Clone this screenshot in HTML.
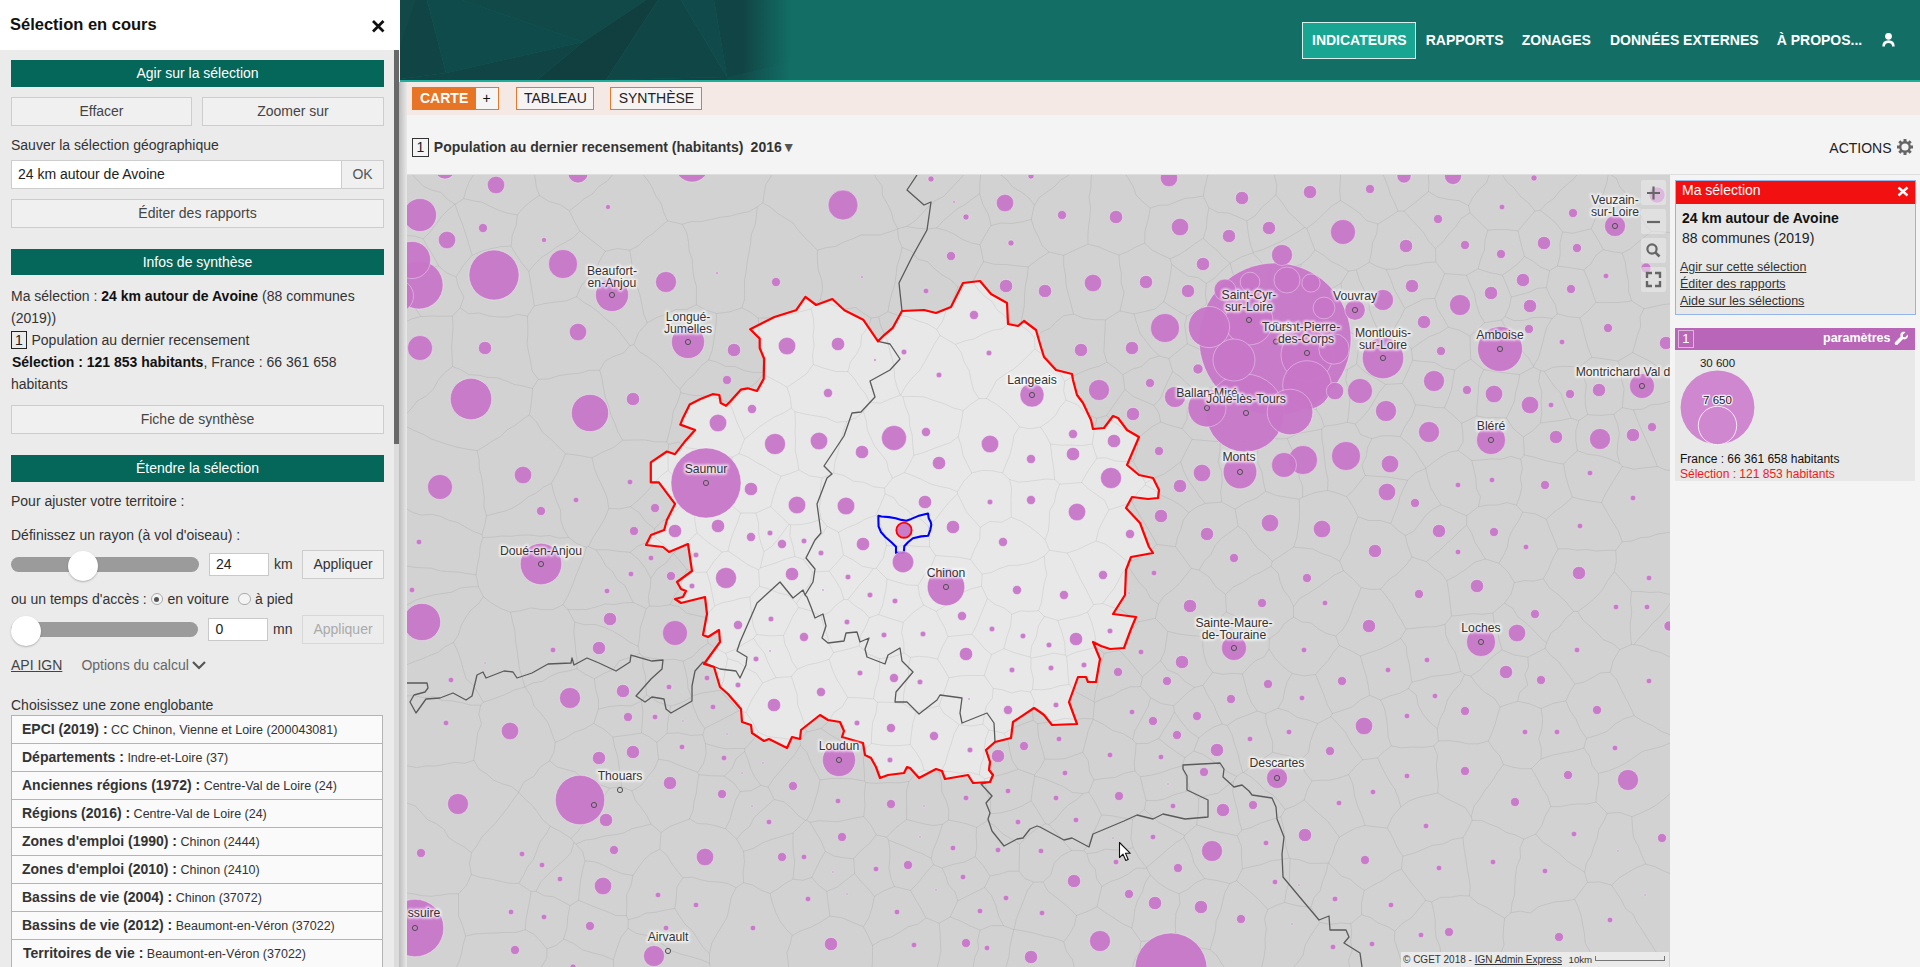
<!DOCTYPE html>
<html><head><meta charset="utf-8">
<style>
*{box-sizing:border-box}
html,body{margin:0;padding:0}
body{width:1920px;height:967px;overflow:hidden;position:relative;font-family:"Liberation Sans",sans-serif;background:#f4f4f4;color:#333}
.a{position:absolute;white-space:nowrap}
.t14{font-size:14px;line-height:14px}
.t12{font-size:12.5px;line-height:12.5px}
.btn{position:absolute;background:#f0f0f0;border:1px solid #cdcdcd;color:#444;font-size:14px;text-align:center}
.gbar{position:absolute;left:11px;width:373px;background:#05675a;color:#fff;font-size:14px;text-align:center}
.nav{position:absolute;top:32.8px;font-size:14px;line-height:14px;font-weight:bold;color:#fff;white-space:nowrap}
.tab{position:absolute;top:87px;height:23px;border:1px solid #e8772e;background:#f7f3f2;font-size:14px;color:#222}
.row{position:absolute;left:11px;width:372px;height:29px;border:1px solid #b4b4b4;background:#fafafa;font-size:12.5px;color:#333;white-space:nowrap}
.row b{font-size:14px;color:#333}
.mc{position:absolute;left:1641px;width:25px;height:25px;background:rgba(235,235,235,0.55);border-radius:2px}
</style></head><body>

<!-- LEFT PANEL -->
<div class="a" style="left:0;top:0;width:400px;height:50px;background:#fff"></div>
<div class="a" style="left:0;top:50px;width:394px;height:917px;background:#ebebeb"></div>
<div class="a" style="left:10px;top:16px;font-size:16.5px;line-height:16.5px;font-weight:bold;color:#111">Sélection en cours</div>
<svg class="a" style="left:371px;top:19px" width="15" height="14"><path d="M2 2L12.5 12.5M12.5 2L2 12.5" stroke="#111" stroke-width="2.8"/></svg>
<!-- scrollbar -->
<div class="a" style="left:394px;top:50px;width:5px;height:917px;background:#dcdcdc"></div>
<div class="a" style="left:394px;top:50px;width:5px;height:394px;background:#686868"></div>

<div class="gbar" style="top:60px;height:27px;line-height:27px">Agir sur la sélection</div>
<div class="btn" style="left:11px;top:97px;width:181px;height:29px;line-height:27px">Effacer</div>
<div class="btn" style="left:202px;top:97px;width:182px;height:29px;line-height:27px">Zoomer sur</div>
<div class="a t14" style="left:11px;top:138.2px;color:#333">Sauver la sélection géographique</div>
<div class="a" style="left:11px;top:160px;width:331px;height:29px;background:#fff;border:1px solid #cdcdcd"></div>
<div class="a t14" style="left:18px;top:166.8px;color:#222">24 km autour de Avoine</div>
<div class="btn" style="left:341px;top:160px;width:43px;height:29px;line-height:27px;color:#555">OK</div>
<div class="btn" style="left:11px;top:199px;width:373px;height:29px;line-height:27px">Éditer des rapports</div>

<div class="gbar" style="top:249px;height:26px;line-height:26px">Infos de synthèse</div>
<div class="a t14" style="left:11px;top:288.9px;color:#333">Ma sélection : <b style="color:#111">24 km autour de Avoine</b> (88 communes</div>
<div class="a t14" style="left:11px;top:311.2px;color:#333">(2019))</div>
<div class="a" style="left:11px;top:331px;width:16px;height:18px;border:1px solid #222;font-size:14px;line-height:16px;text-align:center;color:#222">1</div>
<div class="a t14" style="left:31.5px;top:333.1px;color:#333">Population au dernier recensement</div>
<div class="a t14" style="left:12px;top:355.1px;color:#333"><b style="color:#111">Sélection : 121 853 habitants</b>, France : 66 361 658</div>
<div class="a t14" style="left:11px;top:377px;color:#333">habitants</div>
<div class="btn" style="left:11px;top:405px;width:373px;height:29px;line-height:27px">Fiche de synthèse</div>

<div class="gbar" style="top:455px;height:27px;line-height:27px">Étendre la sélection</div>
<div class="a t14" style="left:11px;top:494.1px;color:#333">Pour ajuster votre territoire :</div>
<div class="a t14" style="left:11px;top:528.1px;color:#333">Définissez un rayon (à vol d'oiseau) :</div>
<div class="a" style="left:11px;top:557px;width:188px;height:15px;border-radius:8px;background:#9b9b9b"></div>
<div class="a" style="left:68px;top:550.5px;width:30px;height:30px;border-radius:50%;background:#fff;box-shadow:0 1px 2px rgba(0,0,0,0.25)"></div>
<div class="a" style="left:209px;top:553px;width:60px;height:23px;background:#fff;border:1px solid #c9c9c9"></div>
<div class="a t14" style="left:216px;top:557.4px;color:#222">24</div>
<div class="a t14" style="left:274px;top:557.4px;color:#333">km</div>
<div class="btn" style="left:302px;top:550px;width:82px;height:29px;line-height:27px;color:#333">Appliquer</div>
<div class="a t14" style="left:11px;top:592.1px;color:#333">ou un temps d'accès :</div>
<div class="a" style="left:150.5px;top:592.8px;width:12.5px;height:12.5px;border-radius:50%;border:1px solid #aaa;background:#f4f4f4"></div>
<div class="a" style="left:154.2px;top:596.5px;width:5px;height:5px;border-radius:50%;background:#555"></div>
<div class="a t14" style="left:167.5px;top:592.1px;color:#333">en voiture</div>
<div class="a" style="left:238.2px;top:592.8px;width:12.5px;height:12.5px;border-radius:50%;border:1px solid #aaa;background:#f4f4f4"></div>
<div class="a t14" style="left:255px;top:592.1px;color:#333">à pied</div>
<div class="a" style="left:11px;top:622px;width:187px;height:15px;border-radius:8px;background:#9b9b9b"></div>
<div class="a" style="left:11px;top:615.5px;width:30px;height:30px;border-radius:50%;background:#fff;box-shadow:0 1px 2px rgba(0,0,0,0.25)"></div>
<div class="a" style="left:208px;top:618px;width:60px;height:23px;background:#fff;border:1px solid #c9c9c9"></div>
<div class="a t14" style="left:215.5px;top:621.9px;color:#222">0</div>
<div class="a t14" style="left:273px;top:621.9px;color:#333">mn</div>
<div class="btn" style="left:302px;top:615px;width:82px;height:29px;line-height:27px;color:#aaa;border-color:#d8d8d8;background:#ececec">Appliquer</div>
<div class="a t14" style="left:11px;top:657.9px;color:#444;text-decoration:underline">API IGN</div>
<div class="a t14" style="left:81.4px;top:657.9px;color:#666">Options du calcul</div>
<svg class="a" style="left:191px;top:659px" width="16" height="12"><path d="M2 3L8 9L14 3" stroke="#555" stroke-width="2.2" fill="none"/></svg>
<div class="a t14" style="left:11px;top:697.6px;color:#333">Choisissez une zone englobante</div>

<div class="row" style="top:715px"><span class="a" style="left:10px;top:6px;line-height:14px"><b>EPCI (2019) :</b> CC Chinon, Vienne et Loire (200043081)</span></div>
<div class="row" style="top:743px"><span class="a" style="left:10px;top:6px;line-height:14px"><b>Départements :</b> Indre-et-Loire (37)</span></div>
<div class="row" style="top:771px"><span class="a" style="left:10px;top:6px;line-height:14px"><b>Anciennes régions (1972) :</b> Centre-Val de Loire (24)</span></div>
<div class="row" style="top:799px"><span class="a" style="left:10px;top:6px;line-height:14px"><b>Régions (2016) :</b> Centre-Val de Loire (24)</span></div>
<div class="row" style="top:827px"><span class="a" style="left:10px;top:6px;line-height:14px"><b>Zones d'emploi (1990) :</b> Chinon (2444)</span></div>
<div class="row" style="top:855px"><span class="a" style="left:10px;top:6px;line-height:14px"><b>Zones d'emploi (2010) :</b> Chinon (2410)</span></div>
<div class="row" style="top:883px"><span class="a" style="left:10px;top:6px;line-height:14px"><b>Bassins de vie (2004) :</b> Chinon (37072)</span></div>
<div class="row" style="top:911px"><span class="a" style="left:10px;top:6px;line-height:14px"><b>Bassins de vie (2012) :</b> Beaumont-en-Véron (37022)</span></div>
<div class="row" style="top:939px"><span class="a" style="left:11px;top:6px;line-height:14px"><b>Territoires de vie :</b> Beaumont-en-Véron (37022)</span></div>

<!-- HEADER -->
<div class="a" style="left:400px;top:0;width:1520px;height:80px;background:#136f66;overflow:hidden">
<svg width="1520" height="80" style="position:absolute;left:0;top:0">
<defs><linearGradient id="hg" x1="0" x2="1" y1="0" y2="0">
<stop offset="0" stop-color="#136f66" stop-opacity="0"/><stop offset="1" stop-color="#136f66"/></linearGradient></defs>
<polygon points="0,0 27,0 46,73 0,79" fill="#114545"/>
<polygon points="0,0 16,0 0,46" fill="#124848"/>
<polygon points="27,0 62,0 183,42 46,73" fill="#104b4b"/>
<polygon points="62,0 246,0 183,42" fill="#114848"/>
<polygon points="246,0 258,0 206,80 137,80 183,42" fill="#113f3f"/>
<polygon points="46,73 183,42 137,80 0,80 0,79" fill="#114545"/>
<polygon points="258,0 281,0 327,77 206,80" fill="#114646"/>
<polygon points="281,0 314,0 327,77" fill="#114a4a"/>
<polygon points="314,0 400,0 400,80 327,77" fill="#114444"/>
<polygon points="327,77 400,60 400,80 327,80" fill="#124a4a"/>
<polygon points="206,80 327,77 327,80" fill="#114444"/>
<rect x="342" y="0" width="50" height="80" fill="url(#hg)"/><rect x="391.5" y="0" width="30" height="80" fill="#136f66"/>
</svg>
</div>
<div class="a" style="left:400px;top:80px;width:1520px;height:2px;background:#1fae9b"></div>
<div class="a" style="left:1302px;top:22px;width:114px;height:37px;background:#18a692;border:1px solid #d9efeb"></div>
<div class="nav" style="left:1312px">INDICATEURS</div>
<div class="nav" style="left:1425.7px">RAPPORTS</div>
<div class="nav" style="left:1521.7px">ZONAGES</div>
<div class="nav" style="left:1610px">DONNÉES EXTERNES</div>
<div class="nav" style="left:1776.7px">À PROPOS...</div>
<svg class="a" style="left:1881px;top:32px" width="15" height="15"><circle cx="7.5" cy="4.3" r="3.4" fill="#fff"/><path d="M2.6 14.5C2.6 11.2 4.6 9.6 7.5 9.6C10.4 9.6 12.4 11.2 12.4 14.5" fill="none" stroke="#fff" stroke-width="2.6"/></svg>

<!-- TABS BAR -->
<div class="a" style="left:399px;top:82px;width:8px;height:885px;background:linear-gradient(to right,#bdbdbd,#e9e9e9)"></div>
<div class="a" style="left:407px;top:82px;width:1513px;height:33px;background:#f5e9e5"></div>
<div class="a" style="left:407px;top:115px;width:1513px;height:60px;background:#f4f4f4"></div>
<div class="a" style="left:412px;top:87px;width:64px;height:23px;background:#e87426"></div>
<div class="a t14" style="left:420px;top:90.9px;color:#fff;font-weight:bold">CARTE</div>
<div class="tab" style="left:475px;width:24px;background:#f5f5f5"></div>
<div class="a t14" style="left:482.5px;top:90.9px;color:#111">+</div>
<div class="tab" style="left:516px;width:78px"></div>
<div class="a t14" style="left:524px;top:91.1px;color:#222">TABLEAU</div>
<div class="tab" style="left:610px;width:92px"></div>
<div class="a t14" style="left:618.7px;top:91.1px;color:#222">SYNTHÈSE</div>

<div class="a" style="left:412px;top:138px;width:17px;height:19px;border:1px solid #333;font-size:14px;line-height:17px;text-align:center;color:#222">1</div>
<div class="a t14" style="left:433.8px;top:140.4px;font-weight:bold;color:#333">Population au dernier recensement (habitants)</div>
<div class="a t14" style="left:750.6px;top:140.4px;font-weight:bold;color:#333">2016<span style="color:#555">▼</span></div>
<div class="a t14" style="left:1829.3px;top:140.5px;color:#222">ACTIONS</div>
<svg class="a" style="left:1896px;top:138px" width="18" height="18" viewBox="0 0 18 18"><g fill="#666"><circle cx="9" cy="9" r="6"/><g stroke="#666" stroke-width="3"><path d="M9 1V17M1 9H17M3.3 3.3L14.7 14.7M14.7 3.3L3.3 14.7"/></g></g><circle cx="9" cy="9" r="3.6" fill="#f4f4f4"/></svg>

<!-- MAP -->
<svg width="1920" height="967" style="position:absolute;left:0;top:0">
<defs><clipPath id="mc"><rect x="407" y="175" width="1263" height="792"/></clipPath></defs>
<g clip-path="url(#mc)">
<rect x="407" y="175" width="1263" height="792" fill="#d1d2d1"/>
<polygon points="750.2,329.2 774.4,317 796,310.3 805.4,296.9 816.1,305 832.3,299 844.4,310.3 863.2,319.7 878,341.3 883.3,335.9 892.8,327.8 902,311 924,310 936,313 951,307 963,283 980,281 991,294 1007,303 1008,324 1018,326 1024,321 1036,330 1040,344 1044,357 1056,370 1072,374 1073,380 1077,395 1083,403 1091,420 1093,429 1104,428 1113,416 1118,418 1127,430 1139,437 1127,465 1139,475 1153,478 1159,490 1158,498 1148,499 1132,497 1126,508 1140,523 1149,547 1153,553 1131,557 1126,570 1125,595 1113,614 1136,617 1131,629 1124,648 1110,649 1101,646 1093,642 1100,659 1096,682 1088,682 1086,677 1078,677 1069,702 1077,724 1052,725 1044,715 1040,712 1034,708 1013,722 1011,738 995,742 986,750 990,762 989,770 993,775 990,782 973,783 968,775 945,779 942,771 936,769 919,778 910,768 907,767 904,773 888,775 880,778 876,767 871,758 865,755 863,743 842,737 844,731 840,722 828,720 820,715 801,730 800,739 792,737 787,748 769,739 764,741 752,733 751,725 742,722 741,709 728,694 720,687 714,667 704,664 720,642 719,630 708,637 703,635 707,614 705,597 681,603 675,599 683,597 686,591 681,589 677,582 692,571 688,544 669,552 663,547 646,545 651,535 664.2,530 666.9,520 675,503.9 658.8,482.4 650.8,482.4 650.8,462.3 666.9,451.5 675,454.2 684.4,442.1 695.1,430 680.3,424.6 683,417.9 689.7,404.4 700.5,399 712.6,394.2 719.3,395 720.7,403.1 726,405.8 730,401.8 740.8,389.7 747.6,388.3 757,391 763.7,378.9 764.2,358.7 759.7,348 759.7,338.6" fill="#e8e8e8"/>
<path d="M-1046.8 -612.0L-1038.4 -608.4L-1030.3 -604.5L-1022.0 -600.7L-1014.6 -595.5L-1006.6 -591.1L-998.1 -587.9L-990.0 -583.8L-981.4 -580.8L-974.3 -574.8L-965.5 -572.1L-957.7 -567.5L-948.7 -565.1L-940.6 -561.1L-931.1 -559.7L-921.1 -559.1L-912.2 -556.6L-903.1 -554.4L-895.0 -550.3L-887.0 -546.0L-878.8 -542.3L-871.4 -536.9L-864.3 -531.1L-856.1 -527.2L-847.0 -525.1L-836.9 -524.6L-828.6 -521.0L-819.3 -519.1L-809.7 -517.9L-801.1 -514.7L-793.3 -510.2L-784.8 -506.8L-776.9 -502.5L-769.5 -497.1L-760.9 -494.0L-753.1 -489.5L-745.0 -485.4L-736.3 -482.5L-727.5 -479.7L-718.3 -477.7L-710.3 -473.5L-702.3 -469.3L-695.2 -463.4L-688.1 -457.5L-679.8 -453.9L-672.4 -448.5L-663.2 -446.6L-656.2 -440.5L-650.2 -432.5L-641.8 -429.1L-633.7 -425.1L-627.0 -418.5L-620.3 -411.9L-611.8 -408.6L-603.6 -404.6L-595.2 -401.2L-588.2 -395.1L-580.3 -390.8L-571.6 -387.8L-564.7 -381.6L-557.0 -376.8L-548.5 -373.5L-539.9 -370.4L-531.8 -366.3L-523.8 -362.1L-515.6 -358.3L-507.7 -353.8L-499.6 -349.9L-491.9 -345.0L-485.0 -338.9L-478.1 -332.6L-469.8 -328.9L-462.7 -323.1L-455.6 -317.1L-448.3 -311.6L-440.9 -306.3L-432.0 -303.8L-424.6 -298.5L-415.4 -296.4L-408.4 -290.3L-401.2 -284.6L-393.0 -280.9L-384.5 -277.5L-376.6 -273.2L-368.9 -268.4L-361.4 -263.3L-354.3 -257.3L-346.5 -252.8L-339.0 -247.6L-331.6 -242.3L-324.0 -237.3L-315.7 -233.7L-306.9 -230.8L-298.2 -228.0L-291.0 -222.3L-283.3 -217.6L-276.5 -211.0L-268.2 -207.5L-260.5 -202.6L-253.0 -197.4L-244.9 -193.6L-236.9 -189.2L-227.7 -187.2L-220.4 -181.8L-212.7 -177.0L-204.8 -172.6L-195.6 -170.6L-188.5 -164.8L-180.6 -160.3L-171.5 -158.1L-164.0 -153.0L-156.9 -147.1L-150.1 -140.6L-142.6 -135.5L-134.8 -130.9L-128.7 -123.3L-120.9 -118.6L-112.8 -114.6L-104.5 -110.9L-96.1 -107.5L-89.0 -101.5L-80.4 -98.5L-73.0 -93.0L-65.4 -88.2L-57.5 -83.8L-51.0 -76.9L-43.1 -72.4L-34.7 -68.9L-26.9 -64.4L-19.4 -59.1L-11.1 -55.4L-5.4 -47.1L2.7 -43.1L10.2 -37.9L18.4 -34.1L25.2 -27.6L33.4 -23.8L41.1 -19.0L50.2 -16.7L57.8 -11.9L66.8 -9.4L75.5 -6.5L82.2 0.1L91.2 2.4L99.6 6.0L107.9 9.7L116.5 12.7L124.5 17.0L132.9 20.5L141.6 23.5L148.8 29.1L155.6 35.5L161.9 42.9L170.0 46.8L177.8 51.4L185.3 56.6L194.0 59.5L203.8 60.4L212.2 64.0L221.2 66.2L229.5 70.0L237.4 74.4L244.6 80.1L253.3 83.0L261.4 87.1L269.0 91.9L276.3 97.5L283.0 104.1L290.9 108.6L298.6 113.3L306.0 118.6L314.6 121.7L323.3 124.7L331.7 128.1L339.9 132.0L349.5 133.2L355.5 141.1L362.3 147.5L370.8 150.8L379.4 154.0L388.1 157.0L395.8 161.8L402.1 169.1L410.4 172.8L417.0 179.5L423.6 186.4L431.8 190.1L440.9 192.4L447.4 199.3L455.0 204.2M455.0 204.2L455.1 204.2M455.1 204.2L463.7 198.7M463.7 198.7L466.0 189.9L469.3 181.3L474.6 173.4L478.4 165.0L479.5 155.8L480.8 146.6L485.0 138.4L486.0 129.1L490.5 121.0L492.3 111.9L493.1 102.6L496.1 94.0L499.8 85.6L501.1 76.4L502.4 67.2L506.5 58.9L508.9 50.1L513.7 42.1L515.6 33.1M455.0 204.2L447.7 210.2L441.2 217.0L435.6 224.7L429.8 232.1L423.1 238.8M226.4 203.8L235.8 202.8L244.3 206.7L253.5 207.2L262.4 208.7L271.7 208.6L280.8 209.3L289.5 212.2L298.1 215.7L306.8 218.7L315.3 222.4L324.4 223.3L332.6 229.2L341.4 231.3L350.4 232.5L359.3 234.2L368.4 235.1L377.2 237.3L386.7 235.9L395.7 236.9L405.2 235.7L414.3 236.0L423.1 238.8M472.1 255.3L481.5 251.3L491.1 248.7L500.9 246.6L511.1 246.2M455.1 204.2L458.5 214.5L462.5 224.5L465.9 234.7L469.0 245.0L472.1 255.3M463.7 198.7L472.8 200.7L482.1 202.2L490.6 206.5L499.1 210.4L508.0 213.3L517.3 214.9M511.1 246.2L512.2 235.6L516.1 225.5L517.3 214.9M548.6 -1062.3L549.6 -1053.3L550.2 -1044.3L550.7 -1035.3L549.7 -1026.2L549.3 -1017.1L549.3 -1008.0L549.5 -999.0L548.2 -989.9L546.1 -980.7L550.0 -971.9L548.4 -962.7L550.8 -953.8L553.2 -944.9L552.1 -935.8L555.4 -927.0L555.4 -917.9L555.8 -908.9L558.2 -900.0L559.4 -891.1L557.9 -881.9L557.1 -872.8L558.1 -863.8L557.4 -854.7L556.7 -845.6L557.8 -836.6L557.3 -827.5L560.9 -818.7L562.3 -809.8L562.7 -800.8L561.5 -791.6L561.1 -782.5L562.5 -773.6L561.8 -764.5L564.0 -755.6L565.3 -746.6L566.4 -737.6L568.7 -728.8L571.3 -719.9L569.9 -710.7L573.1 -701.9L574.1 -692.9L573.1 -683.8L574.2 -674.8L575.3 -665.8L576.0 -656.8L576.7 -647.8L574.7 -638.6L575.6 -629.7L576.9 -620.7L577.5 -611.7L577.8 -602.6L580.3 -593.8L582.5 -584.9L581.2 -575.7L582.0 -566.7L583.6 -557.8L586.3 -548.9L588.1 -540.0L591.1 -531.2L587.2 -521.8L587.3 -512.8L589.7 -503.9L589.2 -494.8L590.7 -485.9L593.4 -477.0L596.1 -468.1L597.3 -459.2L598.6 -450.2L596.4 -441.0L594.1 -431.8L594.7 -422.8L597.0 -413.9L597.3 -404.9L596.8 -395.8L598.5 -386.8L598.2 -377.8L600.1 -368.8L600.3 -359.8L598.4 -350.6L600.4 -341.7L599.6 -332.6L601.5 -323.7L601.9 -314.6L601.7 -305.6L603.7 -296.7L603.2 -287.6L604.3 -278.6L603.3 -269.5L603.6 -260.4L601.3 -251.2L602.5 -242.3L603.0 -233.2L603.2 -224.2L604.5 -215.2L602.8 -206.1L604.2 -197.1L604.9 -188.1L606.4 -179.2L603.2 -169.9L603.3 -160.8L605.1 -151.9L606.8 -143.0L607.7 -134.0L608.8 -125.0L608.5 -115.9L609.9 -107.0L609.1 -97.9L611.3 -89.0L614.4 -80.1L614.1 -71.1L615.1 -62.1L615.5 -53.0L618.0 -44.2L618.9 -35.2L618.8 -26.1L620.0 -17.2L621.5 -8.2L621.0 0.9L621.5 9.9L621.8 18.9L622.4 27.9L620.5 37.1L619.4 46.3L620.3 55.3L621.6 64.2L623.8 73.1L621.4 82.3L623.1 91.3L624.4 100.2L622.8 109.4L623.4 118.4L628.1 127.1L630.5 136.0L631.4 145.0L633.9 153.9M633.9 153.9L626.9 160.4L620.8 167.8L613.3 173.9L607.1 181.3L598.9 186.4L592.6 193.7L584.3 198.7L577.0 204.9L569.4 210.8M515.6 33.1L516.5 42.2L519.0 51.0L515.8 60.7L515.4 70.0L518.0 78.8L517.9 88.1L519.6 97.0L519.8 106.2L519.8 115.5L522.4 124.3L526.2 133.0L526.6 142.1L528.4 151.1L531.5 159.8L533.4 168.8L535.1 177.7L536.3 186.8L539.4 195.5M569.4 210.8L560.0 204.6L549.0 201.5L539.4 195.5M517.3 214.9L523.7 207.4L531.2 201.0L539.4 195.5M923.5 -1739.7L924.9 -1730.7L928.8 -1721.8L928.3 -1712.8L928.3 -1703.8L930.7 -1694.8L929.6 -1685.8L925.1 -1676.6L922.0 -1667.5L922.6 -1658.5L919.5 -1649.4L920.4 -1640.4L921.5 -1631.4L920.5 -1622.4L921.7 -1613.4L918.8 -1604.3L917.8 -1595.2L918.0 -1586.2L917.8 -1577.2L919.1 -1568.2L917.8 -1559.2L918.3 -1550.1L916.7 -1541.1L916.6 -1532.1L914.7 -1523.0L916.1 -1514.0L914.5 -1504.9L913.1 -1495.9L914.4 -1486.9L916.0 -1477.9L915.7 -1468.9L917.9 -1459.9L917.4 -1450.9L915.5 -1441.8L919.0 -1432.9L920.2 -1423.9L920.8 -1414.9L921.4 -1405.9L924.7 -1397.0L926.4 -1388.0L926.2 -1379.0L926.6 -1370.0L928.6 -1361.0L928.9 -1352.0L928.4 -1343.0L928.5 -1334.0L928.1 -1324.9L929.8 -1316.0L932.2 -1307.0L931.4 -1298.0L934.1 -1289.0L937.6 -1280.1L933.5 -1271.0L932.7 -1261.9L934.6 -1253.0L933.7 -1243.9L935.4 -1235.0L933.6 -1225.9L935.3 -1216.9L936.7 -1207.9L934.0 -1198.8L934.0 -1189.8L933.0 -1180.8L936.0 -1171.8L935.7 -1162.8L934.1 -1153.7L935.8 -1144.8L933.5 -1135.7L933.9 -1126.7L933.0 -1117.6L932.6 -1108.6L931.6 -1099.6L930.4 -1090.5L932.4 -1081.5L935.8 -1072.6L939.2 -1063.7L940.6 -1054.7L941.2 -1045.7L942.2 -1036.7L943.3 -1027.7L944.6 -1018.8L946.3 -1009.8L947.4 -1000.8L947.2 -991.8L949.0 -982.8L947.4 -973.7L947.9 -964.7L946.8 -955.7L947.6 -946.7L946.4 -937.6L941.8 -928.5L941.4 -919.5L940.7 -910.4L940.2 -901.4L938.0 -892.3L935.7 -883.2L938.8 -874.3L941.1 -865.3L938.4 -856.2L940.1 -847.3L939.9 -838.2L940.0 -829.2L941.9 -820.2L939.2 -811.1L940.5 -802.2L940.3 -793.1L940.8 -784.1L941.4 -775.1L942.6 -766.1L942.7 -757.1L941.3 -748.1L938.1 -739.0L939.4 -730.0L937.2 -720.9L936.4 -711.8L937.3 -702.9L936.9 -693.8L936.7 -684.8L937.9 -675.8L942.5 -666.9L943.5 -657.9L944.1 -648.9L944.9 -639.9L945.4 -630.9L943.9 -621.9L944.1 -612.9L943.3 -603.8L942.5 -594.8L944.5 -585.8L944.6 -576.8L947.5 -567.9L947.0 -558.8L948.2 -549.8L952.3 -540.9L953.4 -532.0L953.9 -523.0L953.5 -513.9L957.0 -505.0L957.2 -496.0L956.4 -487.0L960.8 -478.1L958.8 -469.0L959.4 -460.0L960.8 -451.0L960.2 -442.0L960.8 -433.0L961.6 -424.0L961.6 -414.9L962.5 -406.0L962.6 -396.9L963.1 -387.9L964.7 -379.0L965.7 -370.0L969.0 -361.1L969.2 -352.0L967.5 -343.0L967.8 -334.0L966.5 -324.9L968.1 -315.9L970.6 -307.0L970.6 -298.0L972.0 -289.0L971.9 -280.0L969.4 -270.9L969.4 -261.8L968.9 -252.8L968.3 -243.8L968.0 -234.7L966.9 -225.7L967.4 -216.7L966.0 -207.6L965.1 -198.6L968.6 -189.7L965.6 -180.6L962.9 -171.4L964.9 -162.5L963.7 -153.4L961.2 -144.3L963.8 -135.4L965.3 -126.4L966.5 -117.4L969.4 -108.5L969.3 -99.5L969.7 -90.5L971.3 -81.5L971.7 -72.5L971.6 -63.5L972.6 -54.5L973.1 -45.5L972.4 -36.4L971.4 -27.4L971.7 -18.4L972.7 -9.4L972.9 -0.4L973.7 8.6L972.0 17.7L972.2 26.7L973.3 35.7L971.0 44.8L972.0 53.8L970.7 62.8L971.9 71.8L971.7 80.8L974.7 89.8L975.9 98.8L975.4 107.8L978.2 116.7L977.9 125.8L978.2 134.8L981.0 143.7L980.3 152.7M897.8 228.7L893.4 220.5L891.2 211.7L887.1 203.4L882.4 195.3L882.1 185.9L876.1 178.2L873.2 169.5L871.4 160.6L868.0 152.1L867.2 142.8L862.9 134.6L859.9 126.0L860.0 116.5L856.6 108.0L854.0 99.2L851.9 90.3L852.4 80.7L850.2 71.9L847.8 63.1L845.9 54.1L842.0 45.8L839.9 36.9L838.2 27.9L834.9 19.4L832.0 10.8L830.8 1.6L829.0 -7.3L825.1 -15.7L823.0 -24.6M897.8 228.7L906.6 226.4M906.6 226.4L914.7 221.2L921.3 214.4L927.8 207.4L934.6 200.9L943.6 196.5L950.1 189.6L956.6 182.7L963.0 175.7L967.8 167.1L974.8 160.7L980.3 152.7M511.1 246.2L516.4 255.1L522.2 263.6L528.8 271.5M569.4 210.8L574.3 221.2L579.9 231.1M528.8 271.5L534.8 264.1L541.4 257.4L549.3 252.5L556.8 246.8L565.1 242.4L573.2 237.7L579.9 231.1M480.7 705.2L471.1 705.2L461.7 702.7L452.2 700.9L442.6 700.5L433.4 696.6L423.6 697.7L414.2 695.7L404.5 695.8L395.0 694.9L385.6 692.7L375.8 693.7L366.2 692.9L356.8 690.8M480.7 705.2L483.4 702.2M483.4 702.2L478.6 693.9L473.7 685.7L466.2 678.8L463.3 669.6L460.8 660.1L457.6 651.1L453.5 642.5M356.8 690.8L364.3 685.6L371.9 680.7L380.7 678.1L389.1 674.8L396.1 668.6L404.6 665.6L413.0 662.1L421.6 659.2L429.8 655.5L438.2 652.3L445.4 646.4L453.5 642.5M165.1 736.4L173.7 739.8L182.4 742.7L191.2 744.9L199.8 747.7L208.7 749.3L217.8 750.1L226.9 750.6L235.5 754.1L244.9 753.0L253.7 755.1L262.9 755.1L271.6 757.7L280.2 761.4L289.6 760.3L297.9 765.0L306.4 768.9L315.4 770.0L324.0 773.2L333.2 773.0L342.4 773.5L351.7 772.9L361.1 771.8L369.6 775.7M480.7 705.2L478.8 714.3L481.5 724.0L477.7 732.8L476.6 742.0L475.1 751.1L473.8 760.3M473.8 760.3L464.6 763.3L454.8 762.3L445.4 764.2L436.0 766.0L426.2 765.9L416.8 767.7L406.9 765.8L397.8 769.8L388.1 769.9L378.9 773.3L369.6 775.7M1150.2 208.0L1148.1 219.7L1145.0 231.2L1144.7 243.2M1150.2 208.0L1142.7 201.9L1136.2 195.1L1132.9 186.0L1128.2 177.9L1122.5 170.5L1117.9 162.3L1111.9 155.2L1105.9 148.1L1100.5 140.5M1100.5 140.5L1096.2 150.5L1091.1 160.1M1091.1 160.1L1091.8 169.5L1091.1 178.8L1090.8 188.2L1089.0 197.4L1090.5 206.9L1090.0 216.2L1088.7 225.5L1087.9 234.9L1088.0 244.2M1144.7 243.2L1136.0 246.8L1127.8 251.6L1119.0 255.0M1119.0 255.0L1108.7 251.3L1098.7 246.8L1088.0 244.2M1203.3 196.0L1204.9 187.1L1207.1 178.3L1209.2 169.5L1208.8 160.0L1210.0 150.9L1211.1 141.8L1211.6 132.5L1215.7 124.3L1218.4 115.6L1220.0 106.7L1222.6 98.0L1225.7 89.5L1227.0 80.4L1231.2 72.2L1233.8 63.5L1235.2 54.5L1236.8 45.5L1239.6 36.9L1241.8 28.1L1245.8 19.8L1252.2 12.2L1254.6 3.4L1258.4 -4.9M1203.3 196.0L1194.4 197.6L1185.2 198.3L1176.7 201.6L1168.1 205.0L1158.9 205.3L1150.2 208.0M1142.9 -2784.8L1142.1 -2775.8L1143.1 -2766.8L1143.0 -2757.8L1144.1 -2748.8L1142.1 -2739.8L1140.4 -2730.8L1141.1 -2721.8L1137.8 -2712.8L1138.1 -2703.8L1137.7 -2694.8L1134.5 -2685.9L1135.8 -2676.9L1136.4 -2667.8L1134.2 -2658.9L1133.2 -2649.9L1134.0 -2640.9L1136.4 -2631.8L1134.3 -2622.9L1131.9 -2613.9L1130.8 -2604.9L1130.8 -2595.9L1129.7 -2586.9L1132.4 -2577.9L1131.5 -2568.9L1132.7 -2559.9L1133.5 -2550.9L1132.8 -2541.9L1134.7 -2532.8L1134.5 -2523.8L1136.4 -2514.8L1136.5 -2505.8L1140.5 -2496.7L1139.6 -2487.7L1139.6 -2478.7L1138.9 -2469.7L1140.1 -2460.7L1138.8 -2451.7L1140.7 -2442.7L1142.4 -2433.7L1143.1 -2424.7L1143.0 -2415.7L1142.0 -2406.7L1139.4 -2397.7L1141.1 -2388.7L1142.6 -2379.7L1141.9 -2370.7L1144.6 -2361.6L1146.6 -2352.6L1144.9 -2343.6L1145.7 -2334.6L1144.2 -2325.6L1143.6 -2316.6L1143.1 -2307.6L1142.7 -2298.6L1142.2 -2289.6L1143.9 -2280.6L1144.7 -2271.6L1143.9 -2262.6L1146.0 -2253.6L1144.4 -2244.6L1143.9 -2235.6L1144.2 -2226.6L1141.8 -2217.6L1142.8 -2208.6L1143.6 -2199.6L1143.8 -2190.6L1142.5 -2181.6L1140.1 -2172.6L1139.2 -2163.7L1139.2 -2154.7L1138.2 -2145.7L1135.4 -2136.7L1136.0 -2127.7L1137.7 -2118.7L1134.1 -2109.7L1133.5 -2100.7L1133.1 -2091.7L1132.6 -2082.7L1130.5 -2073.8L1128.0 -2064.8L1125.8 -2055.8L1124.2 -2046.8L1123.9 -2037.8L1124.7 -2028.8L1123.5 -2019.8L1124.6 -2010.8L1122.6 -2001.8L1124.4 -1992.8L1123.3 -1983.8L1122.1 -1974.8L1123.0 -1965.8L1123.9 -1956.8L1124.7 -1947.8L1123.6 -1938.8L1123.0 -1929.8L1122.7 -1920.8L1126.1 -1911.8L1127.9 -1902.7L1125.6 -1893.8L1125.2 -1884.8L1124.8 -1875.8L1125.4 -1866.8L1125.1 -1857.8L1124.8 -1848.8L1126.2 -1839.7L1125.7 -1830.8L1128.2 -1821.7L1128.3 -1812.7L1127.8 -1803.7L1128.0 -1794.7L1128.9 -1785.7L1128.7 -1776.7L1130.4 -1767.7L1126.7 -1758.7L1126.8 -1749.7L1127.1 -1740.7L1125.3 -1731.7L1126.8 -1722.7L1125.1 -1713.7L1124.6 -1704.7L1124.3 -1695.7L1120.8 -1686.8L1120.2 -1677.8L1120.0 -1668.8L1119.2 -1659.8L1119.0 -1650.8L1117.8 -1641.8L1117.3 -1632.8L1116.1 -1623.8L1115.3 -1614.8L1112.6 -1605.9L1113.7 -1596.9L1112.9 -1587.9L1113.3 -1578.9L1114.9 -1569.8L1116.3 -1560.8L1117.3 -1551.8L1117.4 -1542.8L1118.9 -1533.8L1116.3 -1524.8L1114.9 -1515.8L1116.6 -1506.8L1119.9 -1497.7L1118.1 -1488.8L1115.1 -1479.8L1116.7 -1470.8L1117.8 -1461.8L1116.3 -1452.8L1114.2 -1443.8L1113.0 -1434.8L1112.6 -1425.8L1110.1 -1416.9L1110.0 -1407.9L1110.4 -1398.8L1108.4 -1389.9L1109.4 -1380.9L1108.6 -1371.9L1109.0 -1362.9L1106.4 -1353.9L1108.2 -1344.9L1108.4 -1335.9L1108.7 -1326.9L1108.4 -1317.9L1107.4 -1308.9L1108.7 -1299.8L1109.1 -1290.8L1108.4 -1281.8L1108.8 -1272.8L1110.2 -1263.8L1110.6 -1254.8L1109.2 -1245.8L1110.4 -1236.8L1109.0 -1227.8L1107.3 -1218.8L1111.7 -1209.8L1112.8 -1200.8L1113.2 -1191.7L1113.1 -1182.7L1114.3 -1173.7L1109.8 -1164.8L1106.6 -1155.8L1106.7 -1146.8L1106.4 -1137.8L1106.2 -1128.8L1106.7 -1119.8L1106.6 -1110.8L1105.0 -1101.8L1106.5 -1092.8L1106.7 -1083.8L1109.4 -1074.8L1109.6 -1065.8L1111.4 -1056.7L1112.3 -1047.7L1112.0 -1038.7L1110.2 -1029.7L1108.8 -1020.8L1108.5 -1011.8L1109.7 -1002.7L1110.9 -993.7L1110.8 -984.7L1107.2 -975.8L1105.9 -966.8L1104.5 -957.8L1106.0 -948.8L1108.8 -939.7L1108.4 -930.7L1107.4 -921.8L1106.9 -912.8L1104.0 -903.8L1104.1 -894.8L1103.4 -885.8L1102.2 -876.8L1101.7 -867.8L1102.0 -858.8L1101.9 -849.8L1101.9 -840.8L1100.8 -831.8L1097.9 -822.9L1097.0 -813.9L1094.9 -804.9L1093.3 -795.9L1093.8 -786.9L1095.3 -777.9L1094.2 -768.9L1093.8 -759.9L1094.5 -750.9L1097.5 -741.8L1099.4 -732.8L1097.4 -723.8L1094.7 -714.9L1097.5 -705.8L1098.3 -696.8L1098.3 -687.8L1097.2 -678.8L1094.3 -669.9L1095.8 -660.8L1094.3 -651.9L1094.9 -642.8L1094.1 -633.9L1094.4 -624.9L1094.3 -615.8L1097.3 -606.8L1097.3 -597.8L1097.2 -588.8L1095.9 -579.8L1096.3 -570.8L1095.5 -561.8L1097.8 -552.8L1097.8 -543.8L1097.2 -534.8L1099.1 -525.8L1098.4 -516.8L1099.2 -507.7L1102.1 -498.7L1101.2 -489.7L1100.3 -480.7L1099.0 -471.7L1100.3 -462.7L1103.0 -453.7L1101.9 -444.7L1103.1 -435.7L1103.3 -426.7L1103.6 -417.7L1104.8 -408.6L1104.4 -399.6L1103.3 -390.7L1104.6 -381.6L1103.3 -372.6L1104.3 -363.6L1103.9 -354.6L1104.4 -345.6L1103.4 -336.6L1105.0 -327.6L1105.1 -318.6L1105.0 -309.6L1103.5 -300.6L1105.8 -291.6L1105.8 -282.6L1106.4 -273.6L1106.9 -264.6L1108.8 -255.5L1107.0 -246.6L1107.3 -237.6L1106.1 -228.6L1107.9 -219.5L1110.1 -210.5L1109.9 -201.5L1108.4 -192.5L1105.6 -183.6L1103.6 -174.6L1104.3 -165.6L1104.7 -156.6L1103.4 -147.6L1106.5 -138.5L1104.5 -129.6L1105.6 -120.5L1105.2 -111.5L1103.4 -102.6L1105.0 -93.5L1103.2 -84.6L1102.9 -75.6L1103.2 -66.6L1105.1 -57.5L1106.0 -48.5L1105.1 -39.5L1109.3 -30.5L1109.2 -21.5L1106.4 -12.5L1105.3 -3.5L1103.4 5.5L1105.0 14.5L1107.7 23.5L1106.3 32.5L1104.8 41.5L1104.4 50.5L1102.7 59.5L1103.9 68.5L1103.2 77.5L1102.8 86.5L1101.3 95.5L1101.1 104.5L1102.6 113.5L1100.1 122.5L1100.0 131.5L1100.5 140.5M991.1 225.5L1001.0 223.0L1011.3 223.5L1021.4 221.9L1031.3 219.5M991.1 225.5L988.4 214.5L982.9 204.6L979.7 193.8M980.5 153.4L979.6 163.4L980.6 173.6L979.9 183.7L979.7 193.8M980.5 153.4L984.4 162.7L992.4 167.9L999.6 173.9L1006.9 179.8L1012.7 187.2L1021.2 191.9L1028.6 197.6L1034.3 205.2M1034.3 205.2L1031.3 219.5M936.7 228.1L942.8 221.1L949.9 215.3L956.7 209.1L964.9 204.6L972.1 199.0L979.7 193.8M980.0 244.8L970.8 242.8L962.2 239.3L954.3 234.2L945.8 230.3L936.7 228.1M980.0 244.8L985.2 234.9L991.1 225.5M906.6 226.4L916.5 228.2L926.6 229.0L936.7 228.1M980.3 152.7L980.5 153.4M1091.1 160.1L1082.9 164.3L1075.2 169.3L1068.5 175.4L1060.7 180.1L1054.3 186.7L1047.0 192.0L1039.5 197.2L1034.3 205.2M226.4 203.8L234.3 208.2L242.6 211.9L250.6 216.1L258.1 221.4L265.8 226.4L273.8 230.7L281.9 234.6L289.6 239.6L297.5 243.9L306.0 247.0L314.5 249.9L323.9 250.9L331.9 255.0L340.5 257.9L349.2 260.3L357.7 263.5L366.2 266.4L373.4 272.7L382.4 274.4L392.2 274.4L401.0 276.6M133.7 443.5L143.3 442.2L152.6 440.6L161.6 437.9L170.0 434.2L178.9 431.5L187.3 427.6L195.7 423.8L203.9 419.4L212.3 415.7L221.8 414.3L230.4 410.8L237.8 404.7L245.5 399.3L254.5 396.9L263.1 393.3L269.8 385.7L278.2 381.9L286.2 377.1L294.1 372.1L303.4 370.4L311.8 366.4L321.5 365.5L330.2 362.3L338.3 358.0L346.4 353.4L355.2 350.4L364.2 347.9L372.7 344.2L380.3 338.6L388.2 333.7L396.5 329.7L403.6 322.8L411.9 318.8L421.0 316.5M421.0 316.5L414.5 307.3L409.4 297.3L404.7 287.2L401.0 276.6M423.1 238.8L428.1 248.0L433.8 256.8L438.7 266.0M401.0 276.6L409.9 272.1L418.7 267.3L429.1 268.3L438.7 266.0M472.1 255.3L463.3 265.5L456.1 276.9M438.7 266.0L446.5 272.8L456.1 276.9M245.1 444.1L253.8 441.4L262.8 440.4L271.6 438.1L280.9 440.0L289.8 438.5L298.6 436.3L307.4 433.9L316.5 433.9L325.2 431.6L334.2 430.6L342.8 427.1L352.0 428.1L361.4 429.6L370.1 427.4L379.0 425.5L387.6 422.0L396.7 422.3M396.7 422.3L404.4 416.0L411.1 408.8L417.2 401.0L426.2 396.0L433.4 389.2L438.2 380.1L444.7 372.7L452.5 366.5M421.0 316.5L431.5 316.0L442.0 316.2L452.5 316.0M452.5 366.5L452.1 356.4L451.6 346.3L452.4 336.2L453.0 326.1L452.5 316.0M529.5 414.8L522.0 419.9L514.9 425.5L506.9 430.0L500.4 436.5L492.5 441.0L485.0 446.1L477.1 450.6M396.7 422.3L405.4 426.1L413.9 430.4L422.7 434.0L431.1 438.8L440.0 442.0L449.0 444.8L458.1 447.5L467.5 449.2L477.1 450.6M529.5 414.8L531.5 401.7L532.6 388.5M452.5 366.5L461.1 369.9L469.3 374.8L478.8 375.2L487.8 377.4L497.2 377.8L506.0 380.9L514.5 384.5L523.7 386.1L532.6 388.5M456.1 276.9L458.6 287.1L463.9 296.9L460.2 307.9M460.2 307.9L452.5 316.0M-212.2 474.5L-203.1 474.9L-194.2 476.2L-185.1 476.7L-176.4 479.4L-167.4 480.5L-158.7 483.4L-150.0 485.9L-141.0 487.3L-132.2 489.5L-123.2 490.0L-114.2 491.4L-105.4 493.6L-96.6 495.8L-87.3 494.3L-78.4 496.2L-69.4 496.7L-60.2 496.2L-51.3 498.0L-42.1 497.8L-32.6 495.0L-23.7 496.3L-15.0 499.1L-6.0 500.5L3.0 500.9L11.9 503.0L20.5 506.3L29.7 505.6L38.7 506.4L47.5 509.2L56.4 510.6L65.8 509.0L74.4 512.4L83.0 516.0L91.5 520.1L100.4 521.9L109.3 523.2L118.6 522.0L127.9 521.4L136.9 522.3L145.7 524.2L154.5 526.1L163.4 528.2L172.6 527.4L181.8 526.8L190.6 529.6L199.5 531.0L208.8 529.8L217.7 531.4L226.4 534.2L235.4 534.9L244.0 538.4L253.0 539.8L261.8 542.1L270.7 543.0L279.3 547.0L288.2 548.4L297.3 548.6L305.8 553.2L314.8 554.1L323.7 555.2L332.3 559.3L340.9 562.6L350.2 561.6L359.2 562.1L368.3 562.5L377.7 560.9L386.4 563.8L395.5 563.9L404.4 565.6L413.3 567.2L422.3 567.8L431.4 568.2L440.1 570.9L449.1 571.7L458.2 572.0L467.1 573.6L476.1 574.8M2.0 735.7L10.5 732.4L18.8 728.6L26.9 724.1L36.4 723.9L44.3 718.8L52.6 715.0L61.2 712.1L70.8 712.3L79.5 709.8L88.1 706.8L96.8 704.3L106.0 703.3L114.8 701.2L123.0 696.9L131.4 693.2L140.3 691.2L149.2 689.4L158.3 688.0L168.5 690.4L176.8 686.5L185.3 683.3L193.3 678.3L201.4 674.0L210.0 671.0L217.9 665.8L226.0 661.4L234.6 658.3L243.7 657.0L251.8 652.5L260.8 651.0L269.7 649.1L278.5 646.9L286.9 643.3L295.5 640.4L305.1 640.4L313.3 636.3L321.5 632.1L330.0 628.9L337.9 623.7L346.2 619.9L355.2 618.4L363.3 614.0L372.1 611.6L380.7 608.7L390.3 608.9L399.2 607.1L407.9 604.4L416.0 599.9L424.7 597.3L433.5 594.9L442.5 593.5L451.6 592.2L459.9 588.1L469.0 587.0L478.5 586.8M476.1 574.8L478.5 586.8M453.5 642.5L458.4 634.8L461.1 625.7L465.6 617.7L470.7 610.2L478.2 604.2L483.3 596.7M478.5 586.8L483.3 596.7M471.5 852.7L464.4 847.0L456.2 842.7L448.6 837.6L443.6 829.0L436.2 823.7L427.8 819.8L421.6 812.8L415.3 806.0L406.3 802.8L397.9 798.7L390.4 793.6L383.3 787.8L376.1 782.2L369.6 775.7M471.5 852.7L477.3 845.0L482.1 836.6L489.0 829.8L495.6 822.8L501.6 815.4L507.6 807.9L513.0 800.0L518.7 792.3M473.8 760.3L478.9 769.0L486.6 773.9L493.5 780.1L502.2 783.7L511.5 786.5L518.7 792.2M518.7 792.2L518.7 792.3M532.6 388.5L538.3 379.3M460.2 307.9L469.2 313.9L479.1 312.9L488.5 315.9L498.1 317.0L507.8 317.0L517.9 314.4L527.4 316.2M538.3 379.3L532.1 371.1L530.7 362.0L528.8 353.1L527.0 344.1L527.8 334.7L527.8 325.4L527.4 316.2M528.8 271.5L530.7 283.0L532.6 294.5L534.3 306.0M534.3 306.0L527.4 316.2M716.7 313.5L729.5 311.9L741.9 307.9M757.3 206.8L756.4 216.1L755.1 225.3L751.4 234.1L750.6 243.4L749.0 252.5L747.1 261.7L746.2 270.9L744.6 280.1L744.5 289.5L744.6 298.9L741.9 307.9M757.3 206.8L748.6 211.8L739.0 213.5L729.8 216.2L720.1 217.3L710.7 219.5L701.3 221.6L691.4 221.5L682.1 224.2M716.7 313.5L706.1 310.1L696.3 304.9M696.3 304.9L696.4 295.6L696.4 286.4L693.9 277.6L692.7 268.6L692.2 259.4L689.1 250.7L688.5 241.6L686.7 232.6L682.1 224.2M633.9 153.9L636.9 162.9L640.4 171.6L646.7 178.9L651.9 186.8L655.6 195.5L661.1 203.2L663.7 212.3L667.5 220.9M757.3 206.8L762.8 202.8M823.0 -24.6L817.3 -16.7L815.5 -7.8L815.2 1.4L809.7 9.4L809.8 18.7L807.1 27.4L808.4 37.1L806.5 45.9L804.7 54.8L802.2 63.5L803.0 73.1L797.5 81.0L798.0 90.5L795.4 99.1L792.4 107.7L792.0 117.0L789.7 125.7L784.2 133.6L783.2 142.7L779.1 151.0L773.9 159.0L772.2 167.9L770.7 176.9L765.6 184.9L764.2 193.9L762.8 202.8M667.5 220.9L682.1 224.2M210.1 2097.8L212.4 2089.1L214.3 2080.3L220.2 2072.7L222.4 2063.9L221.1 2054.2L224.3 2045.7L225.8 2036.8L227.8 2028.0L229.4 2019.1L234.3 2011.1L234.4 2001.8L238.1 1993.5L242.3 1985.3L243.3 1976.2L246.0 1967.7L251.0 1959.7L253.2 1951.0L255.4 1942.2L257.8 1933.6L262.3 1925.5L263.6 1916.5L265.2 1907.6L266.4 1898.6L268.8 1889.9L270.4 1881.0L274.1 1872.7L274.7 1863.5L278.6 1855.2L278.4 1845.8L280.4 1837.0L281.5 1827.9L282.1 1818.7L285.3 1810.3L286.4 1801.2L291.0 1793.2L292.9 1784.4L294.8 1775.5L296.2 1766.6L296.6 1757.3L300.3 1749.0L300.5 1739.7L304.0 1731.3L307.6 1723.0L312.6 1715.1L316.4 1706.8L316.8 1697.6L321.3 1689.5L322.8 1680.6L326.7 1672.3L329.8 1663.8L332.9 1655.4L332.9 1646.0L334.4 1637.0L338.2 1628.8L338.8 1619.6L342.2 1611.2L344.1 1602.4L345.9 1593.5L349.7 1585.2L351.8 1576.5L352.7 1567.3L357.2 1559.3L360.0 1550.7L362.2 1542.0L365.4 1533.5L368.5 1525.1L368.6 1515.7L372.5 1507.5L375.4 1498.9L378.3 1490.4L380.8 1481.8L386.0 1473.9L389.2 1465.5L394.1 1457.5L395.2 1448.4L399.0 1440.2L400.9 1431.4L404.7 1423.1L405.9 1414.1L407.7 1405.2L412.0 1397.1L414.0 1388.3L416.7 1379.7L419.6 1371.2L420.7 1362.1L423.7 1353.6L423.9 1344.3L426.9 1335.8L429.5 1327.2L432.0 1318.5L434.6 1309.9L439.2 1301.9L443.6 1293.8L443.2 1284.3L446.3 1275.8L450.0 1267.5L453.1 1259.0L454.6 1250.1L457.9 1241.7L459.6 1232.8L464.3 1224.8L469.6 1217.0L470.5 1207.8L471.8 1198.8L475.5 1190.5L477.6 1181.8L478.4 1172.6L480.7 1163.9L481.9 1154.9L482.9 1145.8L484.1 1136.8L486.3 1128.0L486.7 1118.8L488.8 1110.0L490.9 1101.2L494.3 1092.9L497.3 1084.3L501.6 1076.2L506.4 1068.2L508.2 1059.4L510.4 1050.6L511.9 1041.7L513.8 1032.9L516.9 1024.4L520.7 1016.1L525.1 1008.1L528.7 999.7L531.7 991.2L536.8 983.3L538.9 974.6L542.0 966.1L546.9 958.1L546.9 948.8M210.1 2097.8L212.2 2089.1L214.8 2080.4L218.5 2072.0L219.2 2062.9L220.1 2053.9L221.4 2045.0L224.3 2036.4L227.8 2027.9L227.7 2018.7L230.1 2010.0L229.6 2000.6L232.4 1992.0L235.3 1983.4L239.0 1975.0L239.1 1965.8L241.7 1957.2L246.7 1949.0L247.9 1940.1L247.9 1930.8L250.2 1922.1L252.6 1913.4L255.5 1904.8L259.1 1896.4L264.1 1888.3L265.1 1879.2L267.7 1870.6L270.9 1862.1L274.1 1853.5L277.1 1845.0L279.2 1836.2L281.5 1827.5L283.1 1818.6L285.4 1809.9L286.2 1800.9L288.6 1792.1L290.5 1783.3L292.5 1774.5L295.2 1765.9L295.9 1756.8L297.5 1748.0L300.8 1739.5L303.7 1730.9L304.6 1721.8L304.9 1712.7L303.6 1703.2L307.6 1694.8L310.8 1686.3L312.7 1677.5L312.8 1668.3L314.6 1659.5L317.1 1650.8L320.5 1642.3L322.3 1633.5L323.3 1624.4L329.2 1616.5L330.5 1607.6L334.9 1599.3L337.4 1590.6L340.9 1582.2L343.5 1573.5L346.2 1564.9L349.1 1556.3L348.4 1546.9L348.5 1537.7L349.3 1528.7L350.8 1519.8L355.1 1511.5L356.2 1502.5L356.4 1493.3L357.7 1484.4L361.6 1476.0L362.4 1466.9L365.1 1458.3L365.6 1449.2L366.1 1440.1L366.1 1430.8L368.1 1422.1L371.1 1413.5L370.2 1404.1L372.3 1395.3L372.8 1386.2L376.4 1377.8L380.2 1369.4L382.1 1360.5L384.6 1351.9L387.8 1343.3L389.2 1334.4L390.8 1325.6L392.7 1316.7L396.1 1308.2L397.9 1299.4L398.0 1290.2L400.0 1281.4L400.5 1272.3L399.4 1262.8L401.3 1254.0L402.5 1245.1L406.2 1236.6L408.0 1227.8L408.7 1218.7L411.7 1210.2L413.9 1201.4L416.7 1192.8L418.6 1184.0L421.3 1175.4L422.2 1166.3L423.7 1157.4L422.8 1148.0L424.0 1139.1L427.1 1130.5L425.5 1120.9L427.8 1112.2L433.5 1104.2L432.5 1094.8L434.9 1086.1L437.2 1077.4L440.6 1068.9L443.0 1060.2L446.7 1051.8L446.3 1042.5L446.9 1033.4L447.6 1024.3L449.9 1015.6L451.0 1006.6L449.9 997.1L451.4 988.2L452.1 979.1L454.6 970.5L458.9 962.2L461.6 953.5L463.1 944.6L465.7 936.0M546.9 948.8L540.7 941.2L534.0 934.3L525.2 929.7M525.2 929.7L515.5 932.5L505.4 932.4L495.4 933.0L485.4 933.3L475.5 933.9L465.7 936.0M-1062.0 772.1L-1053.1 772.9L-1044.0 773.5L-1035.0 774.1L-1025.9 773.2L-1017.0 774.4L-1007.7 771.8L-998.6 770.9L-989.6 771.7L-980.7 774.0L-971.8 776.5L-962.6 774.3L-953.6 774.9L-944.4 773.3L-935.4 773.3L-926.4 774.0L-917.5 775.9L-908.7 779.3L-899.6 778.9L-890.6 779.5L-881.6 780.2L-872.6 780.8L-863.7 782.5L-854.7 784.4L-845.8 785.9L-836.7 785.6L-828.0 789.1L-819.1 791.7L-810.1 792.5L-801.2 793.8L-791.9 790.9L-782.9 791.3L-773.8 791.5L-764.8 792.6L-755.9 793.8L-747.0 796.3L-737.9 795.3L-728.9 796.6L-719.9 797.3L-710.9 797.5L-701.9 797.7L-692.9 798.8L-683.7 796.8L-674.6 796.6L-665.7 798.7L-656.8 800.2L-647.9 801.8L-638.9 803.4L-630.0 804.8L-621.0 806.2L-612.2 808.5L-603.3 810.7L-594.4 812.2L-585.3 811.9L-576.3 812.2L-567.5 815.6L-558.5 817.1L-549.5 816.9L-540.4 816.9L-531.5 818.7L-522.4 817.9L-513.4 818.7L-504.3 818.4L-495.3 819.5L-486.3 819.7L-477.3 820.7L-468.2 820.5L-459.3 822.1L-450.6 826.3L-441.9 830.3L-432.9 831.8L-423.9 832.2L-414.7 830.3L-405.8 831.9L-396.7 831.5L-387.6 831.2L-378.8 834.5L-369.9 836.6L-360.9 837.2L-351.9 837.1L-342.7 835.8L-333.7 836.1L-324.6 836.6L-315.9 840.0L-306.8 840.4L-297.7 838.9L-288.8 840.8L-279.8 841.7L-270.8 842.5L-261.5 840.0L-252.4 839.7L-243.5 840.9L-234.4 840.1L-225.3 840.3L-216.4 841.4L-207.3 840.9L-198.2 840.5L-189.1 840.1L-180.0 840.3L-171.0 840.7L-162.1 842.5L-153.3 845.6L-144.5 848.4L-135.3 847.5L-126.2 846.6L-117.3 848.6L-108.4 849.9L-99.5 852.4L-90.5 852.8L-81.3 851.5L-72.3 852.0L-63.5 854.6L-54.4 854.0L-45.3 853.7L-36.0 851.4L-27.2 853.6L-18.4 857.0L-9.4 857.4L-0.5 860.5L8.3 862.5L17.5 861.2L26.6 860.2L35.6 861.9L44.6 861.9L53.4 865.4L62.2 868.1L71.2 868.9L80.3 868.6L89.3 869.2L98.5 868.1L107.3 870.1L116.2 872.1L125.3 872.5L134.5 870.8L143.4 871.7L152.3 874.4L161.0 878.4L169.9 880.2L179.0 880.3L188.1 879.7L197.1 880.7L205.9 883.2L215.0 883.0L223.9 885.0L233.0 884.1L241.8 887.3L250.8 887.7L259.8 889.2L268.9 888.5L277.9 889.1L287.0 888.0L296.0 888.8L305.0 889.2L314.1 889.5L323.3 888.0L332.2 888.8L341.2 889.9L350.2 890.6L359.4 889.5L368.2 891.6L377.3 891.8L386.4 890.7L395.4 892.2L404.4 892.7L413.3 893.8L422.2 895.7L431.3 896.3L440.4 895.2L449.6 893.8L458.6 893.8M465.7 936.0L462.5 925.7L458.5 915.5L458.6 904.6L458.6 893.8M471.5 852.7L469.5 863.5L471.3 874.4M458.6 893.8L466.6 885.1L471.3 874.4M1304.8 227.4L1306.8 228.3M1306.8 228.3L1315.5 221.7L1323.3 214.0L1331.3 206.4L1340.5 200.5M1276.0 194.6L1276.8 185.4L1274.5 176.4L1276.5 167.1L1276.0 158.0L1275.5 148.9L1271.3 140.2L1272.2 130.9L1271.8 121.8L1272.0 112.7L1271.9 103.5L1270.7 94.5L1267.1 85.7L1265.3 76.7L1264.8 67.6L1264.3 58.5L1262.3 49.6L1261.7 40.5L1263.1 31.2L1262.3 22.1L1259.9 13.2L1261.0 4.0L1258.4 -4.9M1276.0 194.6L1282.6 203.3L1288.8 212.4L1296.9 219.8L1304.8 227.4M1332.5 39.9L1331.2 49.4L1333.8 58.8L1335.1 68.2L1335.1 77.6L1336.3 87.0L1334.5 96.6L1334.8 106.0L1336.0 115.5L1335.8 124.9L1336.5 134.4L1337.3 143.8L1339.9 153.1L1341.7 162.5L1340.9 172.0L1340.2 181.5L1339.8 191.0L1340.5 200.5M1340.5 200.5L1349.8 206.4L1358.9 212.6L1366.8 220.7L1377.9 223.9M1332.5 39.9L1333.3 49.4L1336.2 58.1L1341.2 66.0L1345.1 74.3L1349.5 82.5L1353.5 90.8L1355.7 99.7L1356.2 109.4L1360.4 117.6L1361.7 126.9L1363.5 136.0L1367.0 144.5L1371.4 152.6L1376.9 160.4L1380.0 169.0L1384.2 177.2L1387.7 185.7L1390.3 194.5L1394.6 202.7L1398.0 211.2M1377.9 223.9L1388.1 217.8L1398.0 211.2M1428.5 -2431.3L1427.3 -2422.3L1427.0 -2413.3L1427.9 -2404.3L1427.2 -2395.3L1427.5 -2386.2L1426.4 -2377.2L1426.8 -2368.2L1426.4 -2359.2L1427.6 -2350.2L1425.6 -2341.2L1425.4 -2332.2L1426.9 -2323.1L1426.6 -2314.1L1426.4 -2305.1L1427.6 -2296.1L1426.0 -2287.1L1427.4 -2278.1L1424.2 -2269.1L1422.9 -2260.1L1423.7 -2251.0L1425.1 -2242.0L1424.9 -2233.0L1425.6 -2224.0L1425.7 -2215.0L1425.4 -2206.0L1425.7 -2197.0L1426.5 -2187.9L1426.8 -2178.9L1427.7 -2169.9L1426.8 -2160.9L1427.4 -2151.9L1424.9 -2142.9L1425.5 -2133.9L1426.0 -2124.9L1428.5 -2115.8L1430.7 -2106.8L1428.4 -2097.8L1426.4 -2088.8L1426.4 -2079.8L1427.0 -2070.8L1427.3 -2061.8L1428.9 -2052.7L1427.7 -2043.7L1428.0 -2034.7L1430.1 -2025.7L1434.3 -2016.7L1435.7 -2007.7L1435.8 -1998.7L1434.6 -1989.7L1434.1 -1980.6L1434.6 -1971.6L1434.8 -1962.6L1431.9 -1953.6L1431.2 -1944.6L1431.2 -1935.6L1433.1 -1926.6L1434.6 -1917.5L1434.7 -1908.5L1435.2 -1899.5L1437.4 -1890.5L1435.0 -1881.5L1433.5 -1872.5L1433.2 -1863.5L1435.1 -1854.5L1436.1 -1845.4L1438.1 -1836.4L1438.6 -1827.4L1438.7 -1818.4L1437.9 -1809.4L1435.7 -1800.4L1435.3 -1791.4L1435.4 -1782.3L1435.1 -1773.3L1436.6 -1764.3L1435.4 -1755.3L1433.2 -1746.3L1434.1 -1737.3L1434.1 -1728.3L1432.0 -1719.3L1431.0 -1710.2L1426.9 -1701.2L1428.9 -1692.2L1428.4 -1683.2L1428.5 -1674.2L1428.0 -1665.2L1429.1 -1656.2L1431.9 -1647.1L1430.0 -1638.1L1430.0 -1629.1L1429.7 -1620.1L1429.3 -1611.1L1426.9 -1602.1L1427.6 -1593.1L1427.0 -1584.1L1425.7 -1575.0L1427.3 -1566.0L1425.6 -1557.0L1425.0 -1548.0L1421.5 -1539.0L1420.3 -1530.0L1418.0 -1521.0L1420.6 -1511.9L1422.1 -1502.9L1419.5 -1493.9L1420.2 -1484.9L1422.9 -1475.9L1423.5 -1466.9L1424.9 -1457.9L1424.7 -1448.9L1423.9 -1439.8L1423.7 -1430.8L1421.6 -1421.8L1421.0 -1412.8L1420.0 -1403.8L1417.7 -1394.8L1416.8 -1385.8L1413.3 -1376.7L1414.3 -1367.7L1413.8 -1358.7L1415.0 -1349.7L1417.5 -1340.7L1417.0 -1331.7L1414.9 -1322.7L1415.0 -1313.7L1415.6 -1304.6L1418.4 -1295.6L1415.9 -1286.6L1418.1 -1277.6L1418.0 -1268.6L1418.3 -1259.6L1419.1 -1250.6L1421.7 -1241.5L1422.8 -1232.5L1423.8 -1223.5L1423.7 -1214.5L1423.3 -1205.5L1422.0 -1196.5L1421.1 -1187.5L1421.8 -1178.5L1424.4 -1169.4L1425.2 -1160.4L1426.8 -1151.4L1423.5 -1142.4L1423.8 -1133.4L1423.3 -1124.4L1423.6 -1115.4L1422.9 -1106.3L1425.7 -1097.3L1427.0 -1088.3L1427.0 -1079.3L1424.6 -1070.3L1421.7 -1061.3L1419.1 -1052.3L1419.7 -1043.3L1420.3 -1034.2L1419.5 -1025.2L1420.0 -1016.2L1420.1 -1007.2L1421.8 -998.2L1418.7 -989.2L1418.9 -980.2L1419.6 -971.1L1419.7 -962.1L1419.6 -953.1L1424.7 -944.1L1425.5 -935.1L1426.2 -926.1L1423.9 -917.1L1423.6 -908.1L1423.7 -899.0L1423.3 -890.0L1422.7 -881.0L1422.8 -872.0L1423.6 -863.0L1426.6 -854.0L1427.9 -845.0L1429.1 -835.9L1429.5 -826.9L1431.0 -817.9L1433.0 -808.9L1434.1 -799.9L1435.1 -790.9L1434.1 -781.9L1435.7 -772.9L1436.1 -763.8L1434.3 -754.8L1436.5 -745.8L1435.9 -736.8L1438.3 -727.8L1439.5 -718.8L1440.8 -709.8L1439.2 -700.7L1438.0 -691.7L1436.0 -682.7L1433.1 -673.7L1432.8 -664.7L1432.1 -655.7L1432.3 -646.7L1431.6 -637.7L1433.1 -628.6L1435.0 -619.6L1437.0 -610.6L1435.8 -601.6L1440.3 -592.6L1438.7 -583.6L1438.5 -574.6L1439.0 -565.5L1438.4 -556.5L1435.9 -547.5L1436.1 -538.5L1437.5 -529.5L1438.1 -520.5L1435.3 -511.5L1435.9 -502.5L1436.5 -493.4L1436.5 -484.4L1437.3 -475.4L1436.0 -466.4L1437.3 -457.4L1438.4 -448.4L1438.5 -439.4L1435.3 -430.3L1432.7 -421.3L1432.5 -412.3L1432.5 -403.3L1432.0 -394.3L1430.8 -385.3L1429.9 -376.3L1428.4 -367.3L1427.9 -358.2L1426.2 -349.2L1425.2 -340.2L1426.4 -331.2L1426.0 -322.2L1425.3 -313.2L1422.4 -304.2L1420.7 -295.1L1421.8 -286.1L1419.0 -277.1L1422.8 -268.1L1423.2 -259.1L1422.7 -250.1L1423.2 -241.1L1420.7 -232.1L1422.6 -223.0L1424.5 -214.0L1427.0 -205.0L1428.8 -196.0L1430.9 -187.0L1430.9 -178.0L1431.8 -169.0L1433.1 -159.9L1434.1 -150.9L1431.8 -141.9L1430.5 -132.9L1430.0 -123.9L1429.1 -114.9L1427.9 -105.9L1430.1 -96.9L1429.6 -87.8L1430.0 -78.8L1427.9 -69.8L1424.8 -60.8L1424.2 -51.8L1424.2 -42.8L1422.0 -33.8L1423.0 -24.7L1420.1 -15.7L1420.4 -6.7L1420.7 2.3L1421.6 11.3L1421.9 20.3L1425.2 29.3L1426.0 38.3L1425.5 47.4L1426.8 56.4L1425.8 65.4L1425.3 74.4L1423.3 83.4L1423.8 92.4L1421.3 101.4L1420.0 110.4L1422.0 119.5L1423.5 128.5L1425.8 137.5L1425.7 146.5L1426.8 155.5L1428.7 164.5L1428.2 173.5L1428.9 182.6L1428.5 191.6M1428.5 191.6L1420.4 198.2L1412.3 204.8L1403.9 211.0M1403.9 211.0L1398.0 211.2M1554.3 -2284.1L1554.6 -2275.1L1555.8 -2266.0L1551.8 -2257.1L1549.8 -2248.2L1552.7 -2239.1L1556.8 -2230.0L1556.4 -2221.0L1556.6 -2211.9L1555.0 -2203.0L1557.2 -2193.9L1559.0 -2184.8L1559.6 -2175.8L1556.9 -2166.9L1558.6 -2157.8L1557.7 -2148.8L1558.2 -2139.8L1556.8 -2130.8L1557.1 -2121.8L1557.8 -2112.8L1558.4 -2103.7L1557.1 -2094.8L1559.8 -2085.7L1559.2 -2076.7L1558.7 -2067.7L1559.2 -2058.7L1559.2 -2049.7L1556.8 -2040.7L1554.0 -2031.8L1555.5 -2022.7L1553.8 -2013.7L1554.8 -2004.7L1555.3 -1995.7L1557.1 -1986.6L1557.0 -1977.6L1557.6 -1968.6L1557.1 -1959.6L1554.1 -1950.6L1556.0 -1941.6L1553.9 -1932.6L1553.7 -1923.6L1553.9 -1914.6L1553.5 -1905.6L1552.7 -1896.6L1552.4 -1887.6L1553.4 -1878.6L1550.5 -1869.6L1552.7 -1860.6L1552.3 -1851.6L1550.7 -1842.6L1551.5 -1833.5L1554.7 -1824.5L1552.2 -1815.5L1551.9 -1806.5L1551.9 -1797.5L1551.1 -1788.5L1549.1 -1779.5L1547.2 -1770.6L1548.2 -1761.5L1548.3 -1752.5L1548.3 -1743.5L1546.2 -1734.5L1549.3 -1725.5L1550.9 -1716.4L1548.9 -1707.4L1546.9 -1698.5L1547.8 -1689.4L1550.4 -1680.4L1551.7 -1671.3L1551.6 -1662.3L1554.3 -1653.2L1557.2 -1644.1L1555.8 -1635.2L1557.9 -1626.1L1558.0 -1617.1L1557.5 -1608.1L1557.0 -1599.1L1559.2 -1590.0L1556.1 -1581.1L1554.3 -1572.1L1552.5 -1563.1L1552.3 -1554.1L1554.0 -1545.1L1554.8 -1536.1L1555.1 -1527.0L1554.7 -1518.0L1552.8 -1509.1L1552.0 -1500.1L1551.9 -1491.1L1552.0 -1482.0L1549.8 -1473.1L1548.9 -1464.1L1548.0 -1455.1L1547.6 -1446.1L1548.6 -1437.1L1548.9 -1428.1L1547.0 -1419.1L1548.2 -1410.0L1548.8 -1401.0L1549.9 -1392.0L1551.4 -1382.9L1551.8 -1373.9L1549.6 -1364.9L1548.8 -1356.0L1550.0 -1346.9L1550.8 -1337.9L1550.5 -1328.9L1549.9 -1319.9L1547.7 -1310.9L1547.6 -1301.9L1545.3 -1293.0L1545.7 -1283.9L1546.1 -1274.9L1545.2 -1265.9L1546.2 -1256.9L1544.2 -1247.9L1543.0 -1238.9L1543.0 -1229.9L1542.2 -1220.9L1541.6 -1211.9L1538.0 -1203.0L1537.8 -1194.0L1535.4 -1185.1L1534.0 -1176.1L1530.7 -1167.1L1530.6 -1158.1L1529.3 -1149.2L1530.2 -1140.1L1530.1 -1131.1L1528.9 -1122.1L1528.1 -1113.1L1527.5 -1104.1L1526.5 -1095.1L1525.8 -1086.2L1527.0 -1077.1L1525.7 -1068.1L1523.9 -1059.2L1522.7 -1050.2L1519.8 -1041.2L1519.6 -1032.2L1516.9 -1023.3L1517.4 -1014.3L1516.3 -1005.3L1518.1 -996.2L1517.0 -987.2L1516.9 -978.2L1517.2 -969.2L1516.4 -960.2L1519.1 -951.1L1519.6 -942.1L1518.5 -933.1L1521.0 -924.1L1519.4 -915.1L1521.1 -906.0L1520.2 -897.0L1521.8 -888.0L1522.5 -879.0L1522.1 -869.9L1522.1 -860.9L1525.0 -851.9L1524.8 -842.8L1526.1 -833.8L1525.8 -824.8L1527.5 -815.7L1526.9 -806.7L1524.6 -797.8L1523.1 -788.8L1522.5 -779.8L1521.2 -770.8L1522.2 -761.8L1524.6 -752.7L1525.6 -743.7L1524.3 -734.7L1522.6 -725.7L1520.5 -716.8L1518.8 -707.8L1520.8 -698.7L1521.8 -689.7L1521.3 -680.7L1519.6 -671.7L1520.4 -662.7L1522.0 -653.7L1520.7 -644.7L1519.6 -635.7L1516.2 -626.8L1517.6 -617.7L1519.2 -608.7L1517.4 -599.7L1516.6 -590.7L1516.0 -581.7L1515.8 -572.7L1519.3 -563.6L1519.2 -554.6L1520.8 -545.5L1521.6 -536.5L1524.0 -527.4L1521.6 -518.5L1522.4 -509.4L1521.0 -500.5L1520.6 -491.5L1520.9 -482.4L1520.7 -473.4L1522.6 -464.4L1523.0 -455.4L1520.8 -446.4L1519.2 -437.4L1520.4 -428.4L1519.1 -419.4L1519.2 -410.4L1518.3 -401.4L1517.7 -392.4L1517.8 -383.4L1517.2 -374.4L1515.5 -365.4L1516.9 -356.4L1518.7 -347.3L1515.0 -338.4L1515.8 -329.4L1516.1 -320.3L1517.5 -311.3L1518.6 -302.3L1519.3 -293.2L1517.1 -284.3L1518.1 -275.2L1516.8 -266.3L1516.1 -257.3L1516.9 -248.2L1518.1 -239.2L1516.0 -230.2L1516.0 -221.2L1519.3 -212.1L1519.3 -203.1L1519.2 -194.1L1521.7 -185.0L1522.8 -176.0L1520.6 -167.0L1520.6 -158.0L1521.0 -149.0L1520.7 -140.0L1520.7 -131.0L1520.5 -122.0L1520.4 -113.0L1520.8 -103.9L1522.5 -94.9L1521.0 -85.9L1518.6 -76.9L1516.6 -68.0L1513.5 -59.1L1510.1 -50.1L1511.1 -41.1L1511.9 -32.1L1510.9 -23.1L1509.5 -14.1L1505.4 -5.2L1506.4 3.9L1502.7 12.8L1504.7 21.8L1502.4 30.8L1503.1 39.8L1503.0 48.8L1500.4 57.8L1499.5 66.8L1500.3 75.8L1499.6 84.8L1496.9 93.7L1496.2 102.7L1497.5 111.8L1493.7 120.7L1493.0 129.7L1494.8 138.8L1494.6 147.8L1496.8 156.8L1493.8 165.8M1428.5 191.6L1437.8 197.2L1448.3 199.4L1459.0 200.7L1468.6 205.6M1493.8 165.8L1489.6 174.3L1486.2 183.2L1478.8 189.7L1473.0 197.2L1468.6 205.6M1172.7 371.7L1168.3 380.2L1164.4 389.1L1160.7 398.1L1153.9 405.3M1160.7 422.1L1158.9 413.1L1153.9 405.3M1172.7 371.7L1180.8 377.2L1187.6 384.1L1195.2 390.2M1160.7 422.1L1171.3 425.7L1182.1 428.5M1195.2 390.2L1190.9 399.4L1187.3 408.9L1186.9 419.4L1182.1 428.5M1153.9 405.3L1143.7 401.0L1133.5 396.6L1124.9 389.4M1124.9 389.4L1118.7 398.1L1112.6 406.8L1106.5 415.5M1160.7 422.1L1152.5 426.4L1145.3 432.0L1138.3 437.9M1106.5 415.5L1113.9 421.8L1121.9 427.4L1129.8 433.1L1138.3 437.9M245.1 444.1L253.5 447.4L262.5 449.4L270.8 452.9L278.8 457.4L286.6 462.3L295.3 465.0L304.2 467.1L313.1 469.2L322.4 470.3L330.2 475.2L338.2 479.6L346.1 484.4L354.4 488.0L363.0 490.9L371.7 493.4L380.5 495.9L388.3 500.8L396.6 504.4L405.0 508.0L412.9 512.5L421.6 515.1L431.6 514.3L440.5 516.3L448.7 520.2L457.6 522.5L465.5 527.2L473.6 531.4L482.0 534.6M476.1 574.8L477.3 565.4L479.4 556.2L480.2 546.7L482.8 537.5M482.0 534.6L482.8 537.5M477.1 450.6L479.1 459.8L479.4 469.3L481.9 478.4L483.0 487.8L484.2 497.1L483.9 506.6L486.5 515.7M482.0 534.6L484.7 525.2L486.5 515.7M696.3 304.9L686.9 309.4L675.8 309.5L666.3 314.0L656.5 317.6L647.3 322.9M667.5 220.9L660.1 227.0L653.1 233.5L645.1 238.7L638.5 245.8L629.8 250.1M647.3 322.9L643.7 314.1L642.0 304.9L640.1 295.7L637.3 286.8L634.9 277.8L632.3 268.7L631.3 259.4L629.8 250.1M534.3 306.0L544.9 303.5L555.6 302.0L566.5 300.8L576.7 296.6M579.9 231.1L588.4 237.8L597.0 244.4L605.4 251.2M576.7 296.6L580.8 286.5L587.6 278.1L595.6 270.5L599.8 260.4L605.4 251.2M605.4 251.2L617.5 248.6L629.8 250.1M1615.8 550.3L1622.2 541.8M1615.8 550.3L1616.4 561.1L1614.3 571.8M1622.2 541.8L1631.5 541.1L1640.3 537.8L1649.5 536.9L1658.3 533.9L1667.5 532.6L1676.8 532.3L1685.9 530.6L1694.4 526.1L1703.5 524.5L1712.8 523.7L1721.8 521.9L1730.8 519.9L1739.7 517.0L1749.3 517.7L1758.3 516.1L1767.4 514.1L1776.7 513.7L1785.3 509.7L1794.3 507.3L1803.3 505.5M1614.3 571.8L1623.0 581.4L1631.5 591.4M1631.5 591.4L1640.6 591.5L1649.7 592.5L1658.9 592.0L1667.9 594.1L1677.0 594.5M1677.0 594.5L1685.5 591.3L1693.4 586.7L1701.5 582.4L1709.8 578.7L1718.3 575.5L1726.4 571.4L1735.3 569.2L1744.0 566.4L1752.3 562.7L1760.3 558.3L1767.9 553.0L1775.8 548.3L1783.7 543.7L1791.9 539.7L1800.1 535.8L1809.0 533.6L1817.2 529.7L1825.5 525.8L1834.3 523.4L1843.7 522.3L1851.1 516.5L1860.8 516.2L1868.2 510.4L1876.9 507.7L1886.5 507.2M1622.5 466.5L1634.2 469.2L1645.8 467.7L1657.4 466.5M1657.4 466.5L1666.2 470.2L1675.9 470.4L1684.7 474.0L1694.0 476.0L1703.1 478.5L1711.8 482.6L1720.8 485.5L1730.2 486.5L1739.5 488.4L1748.9 489.7L1757.5 494.1L1766.6 496.7L1775.9 498.6L1785.2 500.3L1794.0 503.8L1803.3 505.5M1601.5 502.6L1607.1 512.2L1612.7 521.8L1618.5 531.2L1622.2 541.8M1601.5 502.6L1605.9 493.1L1611.4 484.2L1616.8 475.3L1622.5 466.5M1633.9 644.4L1631.5 644.4M1633.9 644.4L1640.1 637.3L1646.6 630.5L1652.6 623.2L1659.7 616.9L1665.6 609.5L1671.3 602.0L1677.0 594.5M1631.5 644.4L1630.4 633.8L1630.2 623.2L1631.8 612.6L1630.5 602.0L1631.5 591.4M1895.8 739.6L1886.8 737.1L1877.9 734.4L1869.3 730.8L1860.4 728.2L1852.8 721.9L1843.4 720.7L1834.8 717.0L1827.0 711.4L1818.3 708.1L1809.5 705.1L1800.8 701.9L1791.1 701.4L1782.8 696.9L1773.8 694.7L1764.2 693.8L1756.3 688.3L1747.1 686.4L1738.6 682.6L1729.5 680.5L1721.4 675.7L1712.8 671.9L1703.8 669.7L1695.4 665.4L1686.4 663.1L1677.8 659.5L1668.9 656.8L1660.7 652.4L1651.5 650.5L1643.1 646.4L1633.9 644.4M1633.6 409.8L1637.1 419.4L1641.0 428.9L1645.3 438.2L1649.7 447.5L1653.6 457.0L1657.4 466.5M1633.6 409.8L1642.8 409.1L1651.1 404.9L1660.2 404.0L1669.0 401.7L1677.4 397.8L1686.3 395.6L1694.8 392.2L1704.2 392.5M1704.2 392.5L1713.5 391.8L1722.5 392.8L1731.4 394.6L1740.0 397.4L1749.1 397.9L1758.1 399.0L1767.4 398.2L1776.2 400.0L1784.9 402.6L1793.9 403.9L1802.7 405.8L1811.3 409.3L1819.8 413.0L1828.6 415.0L1837.7 415.8L1846.8 415.9L1855.7 417.7L1864.5 419.3L1873.9 417.9L1883.0 418.2L1891.7 421.4L1900.8 421.5L1910.2 420.2L1919.1 421.5L1928.2 421.7L1937.2 422.9L1946.4 422.2L1955.2 424.5L1964.4 424.3L1973.6 424.1L1982.0 428.3L1990.9 430.0L1999.9 430.9L2008.7 433.4L2017.4 435.9L2026.0 438.9L2035.2 438.9L2044.1 440.4L2053.1 441.5L2061.9 443.7L2070.7 445.5L2079.7 446.7L2088.8 446.6L2097.1 451.9L2105.6 455.8L2114.4 458.2L2123.4 459.1L2132.2 461.2L2141.0 463.1L2149.4 467.5L2158.4 468.8L2167.3 470.2L2176.2 471.6L2185.3 471.8L2194.0 474.8L2202.9 476.4L2211.9 477.4L2220.8 478.6M1631.5 644.4L1619.8 649.7M1614.3 571.8L1607.8 580.5L1602.3 590.1L1594.9 598.0L1586.7 605.1L1577.7 611.5M1577.7 611.5L1582.8 620.0L1590.1 626.1L1596.9 632.6L1603.3 639.7L1612.7 643.4L1619.8 649.7M3339.3 1369.3L3330.8 1366.4L3321.9 1364.8L3312.9 1363.2L3303.7 1362.5L3294.8 1360.9L3286.3 1357.8L3278.5 1352.5L3269.6 1350.6L3260.8 1348.8L3252.1 1346.2L3243.3 1344.3L3234.1 1343.4L3224.8 1343.1L3217.0 1337.9L3208.5 1334.6L3200.9 1328.8L3191.9 1327.2L3183.3 1324.7L3174.8 1321.4L3166.4 1318.1L3157.9 1315.3L3149.9 1310.4L3141.2 1308.1L3131.6 1308.5L3122.8 1306.7L3113.9 1304.9L3105.1 1302.8L3097.1 1298.3L3089.3 1292.6L3081.0 1289.0L3072.5 1286.0L3063.9 1283.4L3054.4 1283.4L3045.9 1280.5L3037.7 1276.4L3028.7 1275.2L3020.5 1271.0L3011.4 1270.0L3002.6 1268.1L2994.0 1265.3L2985.1 1263.6L2976.5 1260.9L2967.9 1258.1L2959.5 1254.8L2951.9 1248.8L2943.4 1245.5L2935.1 1241.8L2927.0 1237.4L2918.3 1235.2L2909.4 1233.5L2901.2 1229.3L2892.5 1227.1L2883.8 1224.6L2875.7 1220.2L2867.5 1216.1L2858.4 1215.1L2848.6 1216.4L2840.1 1213.5L2830.4 1214.4L2822.2 1210.3L2813.8 1207.0L2804.5 1206.6L2797.1 1200.0L2788.2 1198.2L2779.0 1197.3L2770.2 1195.3L2761.4 1193.2L2753.1 1189.5L2744.7 1186.4L2736.0 1183.9L2727.1 1182.1L2718.0 1181.1L2709.3 1178.9L2700.4 1177.0L2691.4 1175.6L2682.5 1174.1L2673.8 1171.7L2665.1 1169.4L2655.4 1170.1L2647.0 1166.8L2638.0 1165.6L2629.9 1161.0L2621.2 1158.7L2612.5 1156.4L2603.8 1153.9L2596.0 1148.5L2587.0 1147.1L2578.7 1143.4L2571.0 1137.7L2562.1 1135.9L2553.6 1133.1L2544.8 1131.1L2536.8 1126.2L2528.7 1122.0L2520.8 1116.9L2511.4 1116.8L2502.5 1115.1L2493.8 1112.8L2485.2 1109.8L2476.2 1108.6L2466.8 1108.6L2457.3 1108.9L2449.1 1104.7L2440.8 1101.2L2432.1 1098.8L2423.6 1095.6L2415.8 1090.4L2407.3 1087.2L2398.6 1085.0L2390.4 1080.9L2382.2 1076.6L2373.2 1075.4L2363.9 1075.1L2355.2 1072.5L2346.7 1069.6L2338.1 1067.0L2329.3 1064.9L2320.2 1063.6L2311.1 1062.7L2303.0 1058.2L2293.7 1057.9L2285.1 1055.3L2277.0 1051.0L2268.8 1046.9L2260.5 1043.0L2252.6 1038.1L2243.9 1035.8L2235.4 1032.8L2226.0 1032.6L2217.3 1030.3L2208.4 1028.5L2199.8 1025.9L2191.4 1022.3L2183.8 1016.2L2175.7 1012.0L2166.7 1010.8L2158.2 1007.6L2149.4 1005.4L2140.4 1004.1L2131.1 1003.7L2122.2 1002.0L2114.0 998.0L2105.3 995.8L2096.9 992.3L2088.5 989.0L2079.5 987.5L2071.0 984.3L2062.5 981.3L2053.8 978.9L2044.9 977.2L2036.4 974.3L2027.7 972.0L2019.1 969.3L2010.2 967.4L2001.7 964.4L1994.3 957.7L1985.0 957.5L1976.5 954.2L1968.1 950.8L1959.0 950.0L1950.5 946.8L1942.3 942.8L1934.7 936.6L1925.4 936.2L1916.4 935.1L1907.8 932.4L1898.6 931.4L1889.6 930.1L1881.6 925.6L1872.1 925.9L1863.1 924.4L1854.6 921.5L1845.7 919.6L1837.2 916.6L1829.1 912.2L1820.7 908.9L1812.1 906.2L1803.2 904.5L1794.4 902.2L1785.8 899.6L1776.6 898.9L1767.9 896.5L1759.6 892.7L1751.1 889.8L1742.1 888.3L1733.9 884.5L1725.0 882.6L1716.2 880.6L1707.1 879.6L1697.7 879.7L1689.5 875.6L1680.3 874.7L1671.1 874.0L1662.8 870.5L1654.5 866.5L1645.8 864.2M1741.6 752.4L1732.5 754.8L1724.2 758.6L1716.4 763.4L1709.6 769.7L1702.0 774.7L1693.2 777.6L1684.8 781.3L1678.5 788.6L1670.7 793.2L1663.7 799.3L1656.4 804.9L1648.6 809.4L1640.3 813.3L1631.8 816.7M1645.8 864.2L1641.8 855.1L1638.1 845.8L1633.3 836.9L1632.5 826.9L1631.8 816.7M2571.2 2228.7L2564.5 2222.4L2559.4 2214.9L2552.9 2208.5L2549.5 2199.8L2544.8 2192.1L2539.5 2184.8L2533.1 2178.3L2529.4 2169.8L2525.1 2161.8L2520.1 2154.3L2513.9 2147.6L2509.3 2139.8L2505.4 2131.6L2499.5 2124.6L2494.2 2117.4L2489.8 2109.4L2484.7 2101.9L2479.2 2094.8L2475.6 2086.3L2470.3 2079.0L2464.6 2072.0L2458.6 2065.2L2456.0 2056.0L2449.5 2049.5L2442.9 2043.1L2436.5 2036.6L2430.4 2029.9L2423.7 2023.6L2419.7 2015.4L2415.9 2007.0L2409.5 2000.5L2406.0 1991.9L2401.0 1984.3L2397.4 1975.9L2393.7 1967.4L2387.1 1961.0L2382.9 1952.9L2375.2 1947.4L2370.6 1939.5L2366.7 1931.3L2359.7 1925.2L2353.8 1918.3L2349.4 1910.3L2344.3 1902.9L2339.0 1895.6L2332.7 1889.0L2330.5 1879.5L2325.3 1872.1L2320.8 1864.2L2315.2 1857.2L2308.2 1851.1L2303.8 1843.1L2298.0 1836.2L2293.6 1828.3L2286.1 1822.5L2280.5 1815.5L2275.0 1808.3L2269.7 1801.0L2265.0 1793.2L2258.6 1786.7L2253.4 1779.4L2246.0 1773.6L2239.9 1766.8L2235.4 1759.0L2228.7 1752.7L2223.9 1745.0L2218.3 1737.9L2211.7 1731.6L2203.5 1726.3L2200.4 1717.5L2195.9 1709.6L2189.5 1703.0L2183.7 1696.1L2177.4 1689.5L2171.6 1682.6L2166.3 1675.2L2162.5 1666.9L2157.6 1659.3L2152.4 1652.0L2146.9 1644.8L2142.1 1637.1L2136.2 1630.2L2130.6 1623.2L2125.8 1615.5L2120.1 1608.5L2115.6 1600.6L2109.5 1593.9L2104.7 1586.2L2100.5 1578.2L2096.0 1570.3L2087.3 1565.4L2084.8 1556.1L2081.2 1547.6L2076.9 1539.6L2072.4 1531.7L2069.0 1523.1L2063.6 1515.8L2058.8 1508.1L2054.2 1500.4L2048.2 1493.6L2045.2 1484.6L2039.8 1477.4L2035.0 1469.7L2030.3 1462.0L2023.6 1455.7L2017.8 1448.7L2011.7 1442.0L2006.5 1434.6L2001.1 1427.4L1995.0 1420.7L1990.7 1412.7L1984.7 1405.9L1979.4 1398.6L1975.0 1390.6L1968.6 1384.1L1962.1 1377.7L1956.5 1370.6L1952.1 1362.6L1949.5 1353.4L1943.9 1346.3L1937.1 1340.1L1933.9 1331.3L1927.7 1324.6L1923.2 1316.8L1916.8 1310.2L1910.6 1303.6L1904.1 1297.1L1900.7 1288.5L1894.4 1281.9L1889.8 1274.1L1883.5 1267.5L1877.2 1260.9L1870.7 1254.5L1863.6 1248.5L1859.5 1240.3L1853.8 1233.3L1848.1 1226.2L1840.8 1220.4L1836.2 1212.6L1828.0 1207.4L1822.1 1200.5L1817.0 1193.0L1812.5 1185.2L1809.1 1176.5L1804.0 1169.1L1798.5 1161.9L1792.0 1155.5L1787.5 1147.6L1783.0 1139.7L1779.3 1131.3L1771.8 1125.6L1765.0 1119.3L1759.6 1112.1L1754.1 1104.9L1750.2 1096.6L1743.4 1090.4L1741.4 1080.8L1734.3 1074.7L1729.4 1067.2L1723.6 1060.2L1718.2 1053.0L1713.5 1045.3L1708.5 1037.7L1705.3 1028.9L1702.0 1020.2L1697.6 1012.2L1693.3 1004.2L1689.1 996.1L1684.7 988.2L1679.6 980.8L1674.1 973.6L1667.7 967.1L1661.6 960.3L1656.6 952.8L1651.8 945.2L1646.9 937.6L1642.2 929.9L1637.0 922.5L1633.1 914.2L1625.5 908.5L1621.5 900.3L1616.6 892.8L1611.6 885.2M1645.8 864.2L1636.1 867.6L1627.5 872.8L1619.0 878.0L1611.6 885.2M2171.1 2688.4L2165.6 2680.7L2166.1 2671.0L2161.9 2662.9L2158.9 2654.4L2153.4 2646.7L2151.1 2637.9L2149.7 2628.9L2144.0 2621.3L2144.3 2611.7L2142.4 2602.8L2141.5 2593.6L2140.4 2584.4L2137.5 2575.9L2134.9 2567.3L2130.8 2559.1L2127.3 2550.8L2124.8 2542.1L2121.8 2533.6L2118.4 2525.2L2115.4 2516.7L2113.8 2507.7L2110.8 2499.2L2108.5 2490.5L2104.5 2482.3L2100.7 2474.0L2097.0 2465.8L2093.2 2457.5L2093.9 2447.8L2091.3 2439.1L2088.0 2430.7L2084.5 2422.4L2079.7 2414.5L2075.0 2406.5L2070.5 2398.5L2068.5 2389.6L2066.7 2380.7L2065.4 2371.7L2063.8 2362.7L2062.5 2353.6L2058.0 2345.6L2052.4 2338.0L2052.4 2328.4L2049.4 2319.9L2046.6 2311.3L2044.9 2302.4L2043.4 2293.4L2039.5 2285.2L2036.4 2276.7L2036.0 2267.3L2035.2 2258.1L2031.7 2249.7L2029.5 2240.9L2025.7 2232.7L2021.3 2224.6L2020.0 2215.6L2015.3 2207.6L2009.2 2200.2L2007.2 2191.3L2006.1 2182.2L2002.9 2173.7L1999.7 2165.3L1997.1 2156.6L1993.1 2148.5L1990.3 2139.9L1987.0 2131.4L1982.8 2123.3L1978.4 2115.3L1974.1 2107.2L1969.6 2099.2L1967.5 2090.4L1964.0 2082.1L1962.0 2073.2L1958.5 2064.9L1956.9 2055.9L1954.0 2047.3L1950.9 2038.8L1950.1 2029.6L1948.8 2020.5L1944.8 2012.4L1940.8 2004.2L1937.8 1995.7L1936.2 1986.7L1931.5 1978.8L1930.7 1969.5L1927.8 1961.0L1924.6 1952.5L1921.8 1943.9L1919.6 1935.2L1915.7 1926.9L1914.7 1917.8L1912.1 1909.1L1912.3 1899.5L1910.4 1890.7L1909.3 1881.5L1906.7 1872.9L1905.8 1863.7L1905.4 1854.3L1904.4 1845.1L1901.9 1836.4L1897.1 1828.5L1893.1 1820.3L1890.2 1811.8L1888.8 1802.7L1884.6 1794.6L1883.7 1785.4L1880.5 1777.0L1876.2 1768.9L1874.0 1760.1L1870.9 1751.6L1868.3 1743.0L1865.0 1734.6L1861.0 1726.4L1856.7 1718.3L1850.9 1710.7L1846.3 1702.8L1845.8 1693.4L1840.7 1685.6L1838.1 1677.0L1836.2 1668.1L1831.4 1660.2L1827.2 1652.1L1825.5 1643.1L1822.5 1634.6L1816.9 1627.0L1814.4 1618.3L1810.2 1610.2L1809.7 1600.8L1804.5 1593.1L1800.0 1585.0L1795.8 1576.9L1791.4 1568.9L1790.5 1559.7L1788.9 1550.7L1785.8 1542.2L1780.9 1534.3L1778.8 1525.5L1777.0 1516.6L1774.3 1508.0L1769.5 1500.1L1767.5 1491.2L1765.3 1482.5L1765.5 1472.9L1764.3 1463.8L1760.8 1455.4L1757.8 1446.9L1753.6 1438.8L1750.8 1430.2L1748.1 1421.6L1744.6 1413.3L1741.8 1404.7L1736.7 1396.9L1731.4 1389.1L1731.0 1379.7L1728.2 1371.2L1723.8 1363.1L1718.4 1355.4L1716.7 1346.5L1710.3 1339.1L1705.8 1331.1L1704.1 1322.1L1700.2 1313.9L1696.2 1305.7L1694.5 1296.8L1692.3 1288.0L1692.7 1278.4L1690.7 1269.5L1689.0 1260.6L1686.3 1252.0L1683.7 1243.3L1680.4 1234.9L1678.9 1225.9L1678.5 1216.5L1675.7 1207.9L1672.3 1199.6L1669.3 1191.1L1668.0 1182.0L1664.9 1173.5L1662.7 1164.7L1660.3 1156.0L1653.6 1148.7L1651.5 1139.9L1650.0 1130.9L1645.6 1122.9L1642.5 1114.4L1641.8 1105.1L1636.4 1097.4L1633.2 1089.0L1631.3 1080.1L1626.3 1072.2L1624.0 1063.5L1621.4 1054.8L1615.5 1047.3L1610.9 1039.3L1609.6 1030.2L1609.1 1020.9L1606.3 1012.3L1602.1 1004.2L1600.4 995.2L1597.3 986.8L1598.0 977.0L1593.7 968.9L1592.8 959.7L1589.8 951.2L1585.2 943.2L1584.5 934.0L1582.8 925.0L1581.2 916.1L1578.4 907.5L1574.7 899.2M1611.6 885.2L1599.7 881.9L1587.4 882.4M1574.7 899.2L1581.0 890.7L1587.4 882.4M1607.3 813.3L1603.6 821.5L1598.8 829.3L1597.1 838.3L1593.8 846.7L1591.2 855.4L1586.4 863.2L1584.6 872.1M1631.8 816.7L1619.9 812.4L1607.3 813.3M1587.4 882.4L1584.6 872.1M1120.0 311.0L1105.4 319.8M1105.4 319.8L1105.0 330.5L1104.4 341.1L1103.9 351.8L1107.0 362.3M1107.0 362.3L1115.4 368.1L1122.9 374.8M1122.9 374.8L1131.7 369.5L1141.7 366.4L1149.4 359.0L1159.4 356.0M1120.0 311.0L1133.9 313.9M1133.9 313.9L1136.9 323.6L1140.0 333.3L1146.0 341.1L1152.1 348.9L1159.4 356.0M1124.9 389.4L1122.9 374.8M1172.7 371.7L1168.9 358.6M1159.4 356.0L1168.9 358.6M1269.6 302.0L1277.8 310.8L1287.1 318.2M1287.1 318.2L1295.8 306.8M1267.9 270.8L1269.8 281.1L1271.9 291.5L1269.6 302.0M1267.9 270.8L1278.6 266.7L1290.4 267.8L1301.2 264.2M1295.8 306.8L1296.7 296.0L1299.8 285.6L1299.4 274.8L1301.2 264.2M1704.2 392.5L1696.6 387.4L1688.0 384.3L1679.9 380.0L1671.3 376.8L1663.6 371.8L1656.5 365.9L1648.9 360.7L1640.7 356.7L1632.6 352.6M1831.7 258.7L1823.0 262.2L1814.4 265.5L1805.6 268.8L1797.3 273.4L1788.4 275.9L1779.2 277.2L1770.4 280.2L1761.6 283.2L1752.8 286.0L1743.5 286.9L1735.1 291.4L1726.4 294.6L1717.3 296.5L1708.3 298.6L1698.7 298.7L1690.2 302.5L1680.5 302.4L1671.3 303.7L1662.0 304.7L1653.0 306.9L1643.9 308.7M1632.6 352.6L1635.1 343.8L1637.4 335.1L1640.7 326.6L1640.0 317.1L1643.9 308.7M1222.0 440.8L1223.2 430.3L1224.2 419.9L1224.0 409.2L1227.5 399.1L1228.9 388.7M1222.0 440.8L1231.1 441.2L1240.2 440.8L1249.1 442.3L1258.1 443.8M1258.1 443.8L1268.0 436.4M1268.0 436.4L1269.5 427.1L1268.8 417.8L1267.8 408.6L1265.3 399.4L1266.6 390.1L1266.8 380.8M1266.8 380.8L1257.5 383.9L1248.0 385.7L1238.3 386.5L1228.9 388.7M1195.2 390.2L1208.4 388.4L1220.9 384.2M1220.2 441.7L1210.8 441.1L1201.4 440.2L1192.0 439.5M1182.1 428.5L1192.0 439.5M1220.9 384.2L1228.9 388.7M1220.2 441.7L1222.0 440.8M1028.3 266.8L1027.3 276.6L1025.3 286.3L1024.5 296.1L1024.3 306.0L1022.4 315.7L1020.8 325.4M1028.3 266.8L1038.4 259.0L1049.1 252.0M1049.1 252.0L1063.7 255.3M1063.7 255.3L1063.7 265.4L1065.5 275.1L1066.0 285.1L1068.5 294.8L1071.1 304.4L1073.5 314.1M1073.5 314.1L1063.8 315.7L1056.6 321.4L1050.1 328.3L1041.7 332.0L1034.6 337.9M1034.6 337.9L1028.4 330.9L1020.8 325.4M983.6 261.6L994.6 264.3L1005.9 264.5L1017.1 265.9L1028.3 266.8M983.6 261.6L977.9 271.4L972.8 281.5M972.8 281.5L977.9 289.3L984.3 296.1L992.1 301.5L996.9 309.7L1004.4 315.4L1010.1 322.7M1010.1 322.7L1020.8 325.4M980.0 244.8L983.6 261.6M1031.3 219.5L1034.2 228.5L1038.4 236.8L1041.9 245.4L1049.1 252.0M1088.0 244.2L1075.7 249.6L1063.7 255.3M1120.0 311.0L1122.1 301.6L1124.1 292.3L1121.1 283.0L1121.4 273.7L1119.5 264.4L1119.0 255.0M1105.4 319.8L1094.4 319.7L1083.7 318.2L1073.5 314.1M1107.0 362.3L1098.7 366.4L1089.6 368.8L1081.0 372.4L1072.6 376.4L1064.7 381.4M1064.7 381.4L1059.2 371.5L1052.1 363.0L1044.2 355.4L1034.9 349.0M1034.9 349.0L1034.6 337.9M897.8 228.7L897.7 229.1M762.8 202.8L770.7 207.4L777.6 213.4L785.4 218.2L793.1 223.1L798.5 230.6L804.6 237.3L811.2 243.6L817.3 250.3M817.3 250.3L826.1 247.6L835.4 246.5L843.8 242.1L852.5 238.8L861.0 235.0L870.6 235.0L880.1 235.0L888.9 232.0L897.7 229.1M741.9 307.9L750.5 312.2L758.2 318.0M758.2 318.0L769.1 317.9L779.8 316.7L790.3 314.5L800.7 311.6L811.1 308.9M817.3 250.3L817.4 260.2L818.2 270.1L821.7 279.9L822.6 289.7L820.2 299.8M811.1 308.9L820.2 299.8M1106.5 415.5L1096.8 418.4M1064.7 381.4L1063.6 390.9L1066.1 400.2M1096.8 418.4L1085.9 413.4L1077.2 404.7L1066.1 400.2M764.0 551.6L771.9 546.3L778.0 539.3L783.4 531.7L789.0 524.3M789.0 524.3L779.9 515.4L770.7 506.6M764.0 551.6L760.6 542.2L758.6 532.6L758.5 522.5L755.9 513.0M770.7 506.6L755.9 513.0M576.7 296.6L583.8 302.3L591.8 306.9L598.9 312.5L605.5 318.6L612.7 324.1L618.8 330.8L624.3 338.2L629.8 345.5M538.3 379.3L548.7 378.9L558.7 375.7L569.0 374.1L579.3 373.3L589.4 370.4L599.8 370.2M599.8 370.2L605.0 361.1L613.6 356.4L623.5 353.1L629.8 345.5M647.3 322.9L638.6 332.6L633.8 344.7M633.8 344.7L629.8 345.5M781.2 476.2L776.6 486.0L773.4 496.2L770.7 506.6M781.2 476.2L772.7 471.8L764.7 466.6L756.1 462.3L748.1 457.0L739.0 453.7M755.9 513.0L740.7 513.0M739.0 453.7L732.4 457.1M732.4 457.1L731.2 468.0L731.5 479.0L730.4 489.9L726.6 500.4M740.7 513.0L733.5 506.9L726.6 500.4M760.3 567.9L764.0 551.6M760.3 567.9L758.6 569.8M758.6 569.8L747.7 564.6L737.9 557.7L728.0 551.1M740.7 513.0L737.5 522.5L733.6 531.8L730.3 541.3L728.0 551.1M790.6 524.9L789.9 535.7L793.0 546.0L794.9 556.4M790.6 524.9L801.1 524.6L811.3 522.6L821.2 519.0M821.2 519.0L827.2 526.2M827.2 526.2L821.7 534.8L813.4 541.4L809.5 551.2L803.6 559.6M803.6 559.6L794.9 556.4M760.3 567.9L769.0 565.1L777.6 562.2L786.1 558.9L794.9 556.4M789.0 524.3L790.6 524.9M798.9 469.9L790.2 473.5L781.2 476.2M798.9 469.9L809.7 475.9L822.1 477.8M822.1 477.8L820.4 488.1L820.8 498.4L819.2 508.6L821.2 519.0M1741.6 752.4L1731.5 750.6L1721.8 747.1L1711.6 745.7L1701.9 742.2L1691.8 740.5L1681.5 739.6M1596.0 802.0L1607.3 813.3M1596.0 802.0L1596.6 792.4L1598.6 783.0L1598.3 773.4M1598.3 773.4L1608.1 771.0L1617.4 767.3L1626.3 762.8L1634.6 756.8L1643.1 751.1L1652.9 748.8L1662.6 746.1L1671.8 742.3L1681.5 739.6M1619.8 649.7L1613.3 660.3L1610.1 672.3M1610.1 672.3L1616.9 679.9L1620.9 689.0L1625.5 697.8L1630.1 706.5L1634.2 715.6M1681.5 739.6L1671.8 735.3L1661.8 731.6L1652.9 725.7L1643.1 721.5L1634.2 715.6M1133.9 313.9L1144.6 311.6L1155.1 308.9L1163.8 301.6M1144.7 243.2L1152.1 250.1L1161.0 254.6L1170.0 258.8M1170.0 258.8L1171.8 264.3M1163.8 301.6L1166.8 292.5L1168.9 283.2L1170.5 273.8L1171.8 264.3M1208.8 207.9L1217.9 212.4L1228.3 213.0L1237.6 216.7L1246.8 220.9M1208.8 207.9L1207.0 218.0L1206.3 228.3L1203.3 238.2M1203.3 238.2L1209.8 244.7L1217.1 250.3L1223.2 257.3L1230.2 263.2M1246.8 220.9L1248.0 231.5L1249.8 242.0L1253.1 252.3M1230.2 263.2L1241.1 257.0L1252.8 252.9M1253.1 252.3L1252.8 252.9M1203.3 196.0L1208.8 207.9M1276.0 194.6L1268.9 201.4L1261.5 207.8L1255.3 215.7L1246.8 220.9M1170.0 258.8L1179.0 254.7L1187.2 249.4L1195.1 243.6L1203.3 238.2M1304.8 227.4L1296.7 232.6L1288.3 237.3L1280.0 242.1L1271.2 245.9L1262.5 249.8L1253.1 252.3M1306.8 228.3L1310.8 239.1L1314.9 249.9M1314.9 249.9L1309.0 258.0L1301.2 264.2M1267.9 270.8L1260.8 261.5L1252.8 252.9M1403.9 211.0L1410.3 218.4L1417.2 225.5L1423.7 232.9L1428.8 241.4L1435.6 248.6M1468.6 205.6L1470.0 212.8M1470.0 212.8L1461.4 218.4L1455.7 226.7L1448.9 233.9L1442.9 241.9L1435.6 248.6M1534.9 211.1L1540.2 210.3M1493.8 165.8L1501.1 172.9L1506.7 181.6L1514.4 188.4L1520.5 196.6L1528.7 203.0L1534.9 211.1M1885.2 -1909.4L1882.3 -1900.7L1884.4 -1891.4L1880.1 -1882.9L1877.0 -1874.2L1875.9 -1865.3L1875.1 -1856.3L1873.9 -1847.4L1873.0 -1838.4L1874.1 -1829.2L1870.6 -1820.6L1868.7 -1811.7L1868.0 -1802.7L1867.9 -1793.7L1864.5 -1785.0L1862.7 -1776.2L1862.0 -1767.2L1860.5 -1758.3L1854.8 -1750.0L1855.3 -1740.9L1853.1 -1732.1L1852.0 -1723.1L1851.0 -1714.2L1849.9 -1705.3L1850.2 -1696.1L1848.9 -1687.2L1850.4 -1677.9L1852.1 -1668.6L1852.7 -1659.4L1851.7 -1650.5L1851.7 -1641.4L1848.3 -1632.8L1848.8 -1623.6L1845.9 -1614.9L1844.5 -1606.0L1843.1 -1597.1L1844.0 -1587.9L1840.7 -1579.3L1841.0 -1570.2L1839.6 -1561.3L1838.8 -1552.3L1838.5 -1543.2L1835.0 -1534.6L1832.4 -1525.9L1833.4 -1516.7L1830.0 -1508.1L1828.4 -1499.2L1825.2 -1490.5L1823.9 -1481.6L1821.2 -1472.9L1820.9 -1463.9L1817.2 -1455.3L1816.4 -1446.3L1817.6 -1437.1L1816.5 -1428.1L1814.8 -1419.3L1814.8 -1410.2L1812.4 -1401.4L1812.9 -1392.3L1812.9 -1383.2L1811.8 -1374.2L1811.6 -1365.2L1812.0 -1356.0L1809.9 -1347.2L1811.3 -1338.0L1807.5 -1329.4L1806.5 -1320.4L1805.1 -1311.5L1803.8 -1302.6L1803.5 -1293.6L1803.0 -1284.6L1800.9 -1275.8L1799.8 -1266.8L1797.5 -1258.1L1796.4 -1249.1L1794.4 -1240.3L1792.7 -1231.5L1794.8 -1222.1L1791.0 -1213.5L1789.6 -1204.6L1789.9 -1195.5L1787.0 -1186.8L1788.3 -1177.5L1786.6 -1168.7L1784.9 -1159.8L1784.8 -1150.7L1783.9 -1141.8L1785.9 -1132.4L1783.0 -1123.7L1781.0 -1114.9L1779.6 -1106.0L1777.7 -1097.2L1775.3 -1088.4L1774.4 -1079.5L1775.6 -1070.2L1772.2 -1061.6L1771.5 -1052.6L1767.4 -1044.1L1767.0 -1035.1L1766.7 -1026.0L1766.2 -1017.0L1763.5 -1008.3L1762.1 -999.4L1759.1 -990.7L1758.7 -981.7L1757.8 -972.7L1755.3 -964.0L1754.2 -955.0L1753.0 -946.1L1751.7 -937.2L1750.4 -928.3L1750.7 -919.1L1751.6 -909.9L1753.5 -900.6L1752.4 -891.7L1749.9 -882.9L1751.9 -873.5L1753.3 -864.3L1753.2 -855.2L1752.3 -846.2L1749.1 -837.6L1751.4 -828.2L1752.9 -818.9L1751.8 -809.9L1752.4 -800.8L1750.3 -792.0L1747.3 -783.3L1744.2 -774.6L1745.7 -765.3L1743.1 -756.6L1741.0 -747.8L1739.6 -738.9L1740.3 -729.7L1739.6 -720.7L1739.0 -711.7L1737.3 -702.9L1738.4 -693.6L1736.7 -684.8L1739.2 -675.3L1738.9 -666.3L1738.2 -657.3L1737.0 -648.4L1735.5 -639.5L1731.9 -630.9L1729.8 -622.1L1729.9 -613.0L1729.0 -604.0L1726.4 -595.3L1725.1 -586.4L1724.5 -577.4L1724.1 -568.4L1722.0 -559.6L1719.0 -550.9L1719.4 -541.8L1719.7 -532.6L1720.2 -523.5L1718.1 -514.7L1718.4 -505.5L1719.2 -496.3L1716.4 -487.6L1713.7 -478.9L1710.7 -470.2L1710.5 -461.2L1707.6 -452.5L1708.3 -443.3L1707.1 -434.4L1706.4 -425.4L1707.1 -416.2L1704.7 -407.5L1703.1 -398.6L1700.9 -389.8L1698.7 -381.0L1697.8 -372.0L1697.4 -363.0L1694.9 -354.3L1693.0 -345.4L1694.5 -336.1L1692.0 -327.4L1688.3 -318.8L1687.8 -309.8L1685.1 -301.1L1684.5 -292.1L1683.4 -283.1L1678.9 -274.7L1677.2 -265.8L1675.5 -257.0L1672.6 -248.3L1669.3 -239.7L1666.7 -230.9L1663.4 -222.3L1663.2 -213.2L1658.6 -204.8L1658.4 -195.7L1656.9 -186.8L1655.5 -177.9L1653.4 -169.1L1652.6 -160.2L1650.2 -151.4L1649.1 -142.5L1646.3 -133.8L1644.9 -124.9L1645.7 -115.7L1646.0 -106.5L1644.2 -97.7L1641.3 -89.0L1641.2 -79.9L1640.8 -70.9L1641.8 -61.7L1637.7 -53.2L1635.6 -44.4L1633.5 -35.6L1633.3 -26.5L1630.1 -17.9L1626.7 -9.2L1629.0 0.2L1629.4 9.3L1624.9 17.8L1621.7 26.4L1623.3 35.7L1620.2 44.4L1620.0 53.5L1619.3 62.5L1616.9 71.2L1615.6 80.1L1615.1 89.1L1612.7 97.9L1610.4 106.7L1605.5 115.1L1603.2 123.8L1603.0 132.9L1601.7 141.8M1540.2 210.3L1546.5 203.6L1554.2 198.1L1559.8 190.8L1566.8 184.7L1573.9 178.7L1579.5 171.4L1586.2 165.0L1591.1 157.1L1597.2 150.2L1601.7 141.8M1651.5 231.5L1645.2 224.9L1641.4 216.4L1635.2 209.7L1630.3 202.0L1626.1 193.8L1620.0 187.1L1616.4 178.4L1608.4 173.1M1651.5 231.5L1660.7 231.7L1669.8 232.6L1678.9 233.1L1687.9 234.7L1697.0 235.2L1706.5 233.5L1715.6 234.4L1724.4 237.2L1733.4 238.4L1742.3 240.7L1751.4 241.4L1760.5 241.9L1769.4 243.7L1778.5 244.8L1787.5 246.3L1796.1 249.9L1805.1 251.5L1814.2 252.4L1823.1 254.6L1831.7 258.7M1601.7 141.8L1604.4 152.1L1606.5 162.6L1608.4 173.1M1633.6 409.8L1622.3 407.7M1632.6 352.6L1618.0 361.1M1618.0 361.1L1621.0 370.2L1621.6 379.6L1624.1 388.7L1623.1 398.2L1622.3 407.7M1622.5 466.5L1619.7 463.3M1619.7 463.3L1617.1 453.6L1617.7 443.6L1619.4 433.4L1617.3 423.7L1613.7 414.2M1622.3 407.7L1613.7 414.2M1615.8 550.3L1606.1 550.3L1596.5 551.1L1586.8 549.5L1577.2 550.2L1567.5 548.7L1557.9 549.0M1601.5 502.6L1591.7 501.2L1581.9 499.6L1572.3 497.1M1572.3 497.1L1564.0 505.0L1554.7 511.6L1546.3 519.3M1546.3 519.3L1550.0 529.3L1554.1 539.1L1557.9 549.0M1577.7 611.5L1573.7 611.4M1573.7 611.4L1566.7 602.7L1558.6 594.9L1549.6 588.1L1543.3 578.8M1557.9 549.0L1552.7 558.8L1548.5 569.1L1543.3 578.8M1619.7 463.3L1609.5 458.9L1599.0 455.6L1587.9 454.2L1577.4 450.8M1587.6 414.7L1600.7 415.4L1613.7 414.2M1587.6 414.7L1578.8 420.6M1578.8 420.6L1575.9 430.6L1575.8 440.7L1577.4 450.8M1572.3 497.1L1568.7 486.3L1565.5 475.3L1563.5 464.0M1577.4 450.8L1570.3 457.2L1563.5 464.0M1651.5 231.5L1644.3 237.1L1637.2 242.8L1630.4 248.9L1622.2 253.1M1643.9 308.7L1631.8 301.0M1622.2 253.1L1625.3 262.5L1626.5 272.2L1628.5 281.8L1628.7 291.7L1631.8 301.0M1295.8 306.8L1304.8 301.9L1313.2 295.8L1322.7 291.9L1332.3 288.3L1341.2 283.2M1314.9 249.9L1323.4 255.1L1331.1 261.5L1340.2 265.7L1348.6 271.1M1341.2 283.2L1348.6 271.1M1369.3 262.3L1371.4 252.7L1372.5 242.9L1376.7 233.7L1377.9 223.9M1369.3 262.3L1356.4 269.9M1356.4 269.9L1348.6 271.1M1268.1 379.4L1276.4 384.0L1283.9 390.0L1292.2 394.7L1299.2 401.4L1306.8 407.1L1316.3 409.7M1268.1 379.4L1266.8 380.8M1321.8 429.1L1310.0 431.4L1298.2 433.4L1287.2 438.5M1268.0 436.4L1277.4 439.0L1287.2 438.5M1321.8 429.1L1324.1 426.3M1324.1 426.3L1321.3 417.5L1316.3 409.7M1138.3 437.9L1137.2 449.9L1133.1 461.2M1133.1 461.2L1139.3 472.0L1145.4 483.0M1192.0 439.5L1186.3 450.7L1180.6 461.9M1180.6 461.9L1172.4 468.1L1164.0 474.1L1154.4 478.1L1145.4 483.0M1321.8 429.1L1322.0 439.4L1323.7 449.6L1324.7 459.8L1325.8 469.9L1328.0 480.0L1327.5 490.4M1287.2 438.5L1291.4 447.9L1295.1 457.4L1298.4 467.0L1299.1 477.2L1302.7 486.7L1302.6 497.2M1302.6 497.2L1314.8 492.7L1327.5 490.4M1156.8 544.4L1152.1 535.8L1147.2 527.3L1141.9 519.1L1136.8 510.7L1132.2 502.0M1156.8 544.4L1148.7 552.7L1138.9 558.3L1128.0 562.1M1128.0 562.1L1120.6 556.0L1113.1 549.9L1105.4 544.2L1096.0 541.0M1096.0 541.0L1098.6 529.9L1103.5 519.8L1108.9 509.9M1108.9 509.9L1120.6 506.2L1132.2 502.0M957.8 287.3L954.4 296.1L951.2 305.0L945.5 312.7L942.4 321.6L936.8 329.4M957.8 287.3L951.0 280.0L942.5 275.1L934.7 269.0L927.9 261.8L917.7 259.1L911.4 251.2L902.0 247.4M936.8 329.4L927.7 323.9L917.8 320.9L908.2 316.8L897.7 315.2L887.9 311.7M902.0 247.4L900.1 256.6L897.1 265.6L896.1 275.0L894.7 284.3L891.9 293.4L889.5 302.5L887.9 311.7M972.8 281.5L957.8 287.3M1010.1 322.7L1002.0 328.8L992.1 330.5L982.9 334.0L974.3 338.8L964.6 341.0L955.3 344.3M955.3 344.3L940.0 335.4M940.0 335.4L936.8 329.4M897.7 229.1L898.5 238.6L902.0 247.4M1034.9 349.0L1027.8 355.9L1020.9 363.0L1013.3 369.4L1004.5 374.6L996.4 380.5L991.7 389.7L986.5 398.5M1066.1 400.2L1060.0 407.3L1055.3 415.6L1048.4 421.8L1040.5 427.1M1040.5 427.1L1030.0 428.9L1019.5 426.8M986.5 398.5L996.1 404.1L1004.7 410.7L1012.4 418.4L1019.5 426.8M955.3 344.3L961.2 352.6L964.2 362.0L969.2 370.6L971.1 380.6L973.5 390.3L979.2 398.6M986.5 398.5L979.2 398.6M940.0 335.4L934.4 344.0L929.6 353.0L924.6 362.0L919.4 370.8L912.0 378.1L905.6 386.2L900.7 395.2M902.8 396.7L900.7 395.2M902.8 396.7L913.5 396.4L923.9 396.9L933.7 400.4L943.6 403.5L953.2 407.9L963.2 410.5M979.2 398.6L970.9 404.2L963.2 410.5M726.6 500.4L715.8 503.4L705.1 506.7L694.3 509.4M728.0 551.1L722.1 552.0M722.1 552.0L713.3 546.2L704.9 539.9L697.0 532.9M697.0 532.9L694.9 521.3L694.3 509.4M732.4 457.1L723.2 455.6L713.9 454.4L705.1 450.9L696.0 449.0L686.8 447.8L678.4 442.1L668.5 444.3M668.2 470.3L668.0 457.3L668.5 444.3M668.2 470.3L674.5 477.3L677.9 485.7L680.9 494.4L684.1 502.9M684.1 502.9L694.3 509.4M483.4 702.2L493.8 698.7L504.2 694.9L514.2 690.0L524.8 687.0M483.3 596.7L491.6 603.1L500.6 608.4L510.5 612.1M524.8 687.0L522.3 677.7L519.4 668.6L518.2 659.1L517.0 649.7L515.4 640.3L514.9 630.7L512.5 621.4L510.5 612.1M518.7 792.2L524.0 782.0L533.8 776.3L540.2 767.2L549.5 760.9M524.8 687.0L524.9 687.0M524.9 687.0L530.8 695.7L534.0 705.9L541.3 713.9L547.7 722.4L551.5 732.2L555.2 742.2M549.5 760.9L554.0 752.0L555.2 742.2M471.3 874.4L480.5 877.6L490.1 878.9L499.6 881.1L509.0 883.3L518.8 883.4M525.2 929.7L525.9 920.0L527.7 910.5L529.7 901.1L531.0 891.5M518.8 883.4L531.0 891.5M518.7 792.3L525.0 799.1L532.1 805.1L537.7 812.6L543.1 820.2L550.3 826.2M518.8 883.4L523.5 875.4L527.5 866.9L533.3 859.5L536.8 850.8L540.0 841.9L545.9 834.5L550.3 826.2M546.9 948.8L556.1 945.5L563.6 939.1M531.0 891.5L536.0 891.3M536.0 891.3L544.2 895.7L553.7 896.8L561.9 901.2L570.1 905.6M563.6 939.1L566.9 928.1L567.8 916.7L570.1 905.6M613.3 959.7L603.3 955.6L592.8 952.9L582.4 949.8L573.4 943.3L563.6 939.1M613.3 959.7L613.8 968.7L617.1 977.4L619.3 986.2L618.3 995.4L618.5 1004.5L618.2 1013.7L619.3 1022.7L618.0 1031.9L619.2 1040.9L621.7 1049.7L621.5 1058.8L621.1 1068.0L625.5 1076.5L629.3 1085.1L630.8 1094.0L633.0 1102.8L634.8 1111.7L635.7 1120.7L637.5 1129.5L640.2 1138.3L640.0 1147.4L640.4 1156.5L641.5 1165.5L642.3 1174.5L644.0 1183.4L642.0 1192.7L643.8 1201.6L641.5 1211.0L641.5 1220.2L645.6 1228.7L645.6 1237.8L647.9 1246.6L649.8 1255.5L650.7 1264.5L652.6 1273.3L654.0 1282.3L653.7 1291.4L657.1 1300.1L657.1 1309.2L655.8 1318.5L655.5 1327.6L658.6 1336.3L659.2 1345.4L658.8 1354.5L659.9 1363.5L660.2 1372.6L660.9 1381.6L662.2 1390.5L662.1 1399.7L663.8 1408.5L662.1 1417.9L661.7 1427.1L663.0 1436.0L664.5 1444.9L668.4 1453.5L672.9 1462.0L671.9 1471.2L672.1 1480.3L674.5 1489.1L675.5 1498.1L677.4 1507.0L679.4 1515.8L681.7 1524.6L686.7 1533.0L689.6 1541.8L688.7 1551.0L688.1 1560.2L688.3 1569.3L690.7 1578.1L690.5 1587.2L692.8 1596.0L692.7 1605.1L693.1 1614.2L695.9 1622.9L698.5 1631.7L698.9 1640.8L700.1 1649.7L701.7 1658.6L703.8 1667.4L704.0 1676.5L706.4 1685.3L707.5 1694.3L709.3 1703.2L710.2 1712.1L713.7 1720.8L715.8 1729.6L715.6 1738.8L717.2 1747.6L717.4 1756.7L718.4 1765.7L717.0 1775.0L717.9 1784.0L716.7 1793.3L719.1 1802.1L722.2 1810.8L722.4 1819.9L723.0 1828.9L725.5 1837.7L727.5 1846.5L729.1 1855.4L730.8 1864.3L734.7 1872.9L736.6 1881.7L737.1 1890.8L738.8 1899.7L736.6 1909.1L738.1 1918.0L739.7 1926.9L742.5 1935.6L742.5 1944.7L745.8 1953.4L750.1 1961.9L752.2 1970.8L753.7 1979.7L754.7 1988.7L755.5 1997.7L754.5 2006.9L755.5 2015.9L758.8 2024.6L760.3 2033.5L760.1 2042.6L760.4 2051.7L760.7 2060.8L762.7 2069.6L764.4 2078.5L767.2 2087.2L768.0 2096.2L768.9 2105.2L769.5 2114.3L772.0 2123.0L772.4 2132.1L774.2 2141.0L774.8 2150.0L777.2 2158.8L776.4 2168.0L777.5 2177.0L778.4 2186.0L778.0 2195.1L781.2 2203.8L781.4 2212.9L784.2 2221.6L786.5 2230.4L787.1 2239.5L789.6 2248.3L791.2 2257.1L794.1 2265.9L795.1 2274.8L797.9 2283.6L800.1 2292.4L801.4 2301.3L801.9 2310.4L799.7 2319.8L799.9 2328.9L797.4 2338.3L798.2 2347.3L799.2 2356.3L800.3 2365.3L802.6 2374.1L804.8 2382.9L807.7 2391.6L810.9 2400.3L810.1 2409.5L812.9 2418.3L815.9 2427.0L818.5 2435.7L819.1 2444.8L821.0 2453.6L820.7 2462.8L819.3 2472.1L819.4 2481.2L820.0 2490.2L821.5 2499.1L821.4 2508.3L823.5 2517.1L825.8 2525.9L827.1 2534.8L830.4 2543.5L830.8 2552.6L832.1 2561.5L835.0 2570.2L833.7 2579.5L836.6 2588.2L837.7 2597.2L837.9 2606.3L838.1 2615.4M1598.3 773.4L1592.2 765.7L1589.5 756.0L1583.8 748.1M1634.2 715.6L1624.0 718.7L1614.9 724.2L1606.7 731.6L1596.8 735.3L1586.5 738.2M1583.8 748.1L1586.5 738.2M1230.2 263.2L1230.2 263.3M1171.8 264.3L1179.7 270.4L1187.8 276.2L1198.3 277.6L1206.3 283.5M1230.2 263.3L1222.3 270.0L1215.1 277.7L1206.3 283.5M1269.6 302.0L1260.5 303.0L1251.4 304.0L1242.4 301.3M1230.2 263.3L1232.7 273.0L1237.8 281.8L1240.2 291.5L1242.4 301.3M1187.4 343.8L1186.0 334.5L1184.7 325.2L1186.7 315.9M1187.4 343.8L1199.4 349.2L1212.5 350.3M1186.7 315.9L1197.1 310.6L1206.9 304.1M1212.5 350.3L1222.3 344.2L1230.9 336.4M1206.9 304.1L1216.0 311.1L1227.3 313.0M1230.9 336.4L1229.5 324.6L1227.3 313.0M1168.9 358.6L1178.1 351.1L1187.4 343.8M1163.8 301.6L1171.1 306.8L1178.8 311.5L1186.7 315.9M1220.9 384.2L1218.0 373.0L1214.3 361.9L1212.5 350.3M1206.3 283.5L1205.3 293.8L1206.9 304.1M1271.4 370.0L1268.1 379.4M1270.1 351.5L1260.6 346.8L1250.2 344.7L1240.2 341.3L1230.9 336.4M1270.1 351.5L1274.1 360.5L1271.4 370.0M1242.4 301.3L1235.5 307.9L1227.3 313.0M1287.1 318.2L1287.7 321.4M1287.7 321.4L1283.3 332.3L1276.4 341.8L1270.1 351.5M1534.9 211.1L1526.4 220.9L1518.0 230.9M1470.0 212.8L1479.0 221.4L1487.8 230.2M1518.0 230.9L1508.0 229.7L1497.9 229.5L1487.8 230.2M1386.1 269.4L1396.2 268.8L1405.8 265.3L1415.9 264.8L1425.7 262.5L1435.8 262.0M1386.1 269.4L1390.6 279.3L1394.3 289.5L1399.6 298.9L1404.9 308.4M1404.9 308.4L1414.4 303.6L1423.9 298.9L1434.9 298.4M1434.9 298.4L1439.8 286.0L1444.7 273.5M1435.8 262.0L1444.7 273.5M1369.3 262.3L1377.4 266.6L1386.1 269.4M1435.6 248.6L1435.8 262.0M1393.8 329.0L1399.9 318.9L1404.9 308.4M1393.8 329.0L1377.6 329.0M1377.6 329.0L1373.1 319.5L1369.4 309.7L1369.0 298.7L1363.9 289.4L1359.3 280.0L1356.4 269.9M1444.4 407.8L1434.8 407.5L1425.2 405.5L1415.6 404.9M1444.4 407.8L1448.3 398.7L1451.5 389.4L1453.1 379.7L1454.7 370.0M1415.6 404.9L1410.3 393.3L1402.2 383.5M1402.2 383.5L1407.6 371.9L1412.7 360.2M1412.7 360.2L1423.4 361.6L1434.3 362.4L1444.1 368.0L1454.7 370.0M1434.9 298.4L1437.6 308.8L1443.2 317.9L1448.4 327.2M1393.8 329.0L1403.6 338.1L1411.3 348.9M1411.3 348.9L1420.2 342.8L1429.1 336.7L1439.3 332.9L1448.4 327.2M1546.3 519.3L1535.2 513.8L1522.8 512.1M1520.7 459.3L1524.3 455.0M1563.5 464.0L1553.5 462.4L1543.7 460.2L1534.1 457.2L1524.3 455.0M1520.7 459.3L1522.4 468.7L1520.3 477.7L1521.9 487.1L1519.8 496.2L1516.4 505.1M1516.4 505.1L1522.8 512.1M1514.4 582.7L1508.0 571.9L1498.9 563.2M1543.3 578.8L1533.8 581.1L1523.9 580.6L1514.4 582.7M1522.8 512.1L1518.8 520.6L1513.3 528.4L1509.1 536.9L1507.5 546.5L1503.7 555.1L1498.9 563.2M1476.9 416.0L1461.6 423.3M1444.4 407.8L1453.2 415.3L1461.6 423.3M1476.9 416.0L1476.9 406.5L1478.0 397.2L1478.4 387.8L1479.5 378.5L1483.8 369.7M1454.7 370.0L1462.3 364.0L1470.8 359.3M1483.8 369.7L1470.8 359.3M1412.7 360.2L1411.3 348.9M1448.4 327.2L1459.7 330.4L1470.0 336.1M1470.8 359.3L1470.2 347.7L1470.0 336.1M1483.8 369.7L1492.7 371.0L1501.7 372.5L1510.6 373.6L1519.6 374.5M1476.9 416.0L1486.7 417.8L1496.5 417.6L1506.4 417.9M1519.6 374.5L1518.2 383.6L1515.6 392.2L1514.3 401.4L1510.6 409.7L1506.4 417.9M1540.2 210.3L1548.5 216.7L1556.3 223.5L1562.6 231.9M1608.4 173.1L1606.8 182.7L1603.7 191.9L1600.6 201.1L1598.8 210.7L1594.9 219.7L1591.2 228.7M1591.2 228.7L1581.8 231.1L1572.4 233.3L1562.6 231.9M1622.2 253.1L1612.7 251.7L1603.4 249.7M1591.2 228.7L1597.6 239.0L1603.4 249.7M1631.8 301.0L1619.9 302.4L1607.9 302.6L1595.9 302.4M1603.4 249.7L1595.8 255.4L1590.9 263.8L1583.8 269.9M1595.9 302.4L1592.1 291.5L1588.4 280.6L1583.8 269.9M1562.6 231.9L1560.0 243.2L1560.2 254.9L1557.4 266.1M1583.8 269.9L1570.6 267.8L1557.4 266.1M1377.6 329.0L1368.9 332.9L1361.3 338.5M1341.2 283.2L1341.8 294.0L1341.6 304.8L1341.7 315.6L1338.4 326.2M1361.3 338.5L1350.0 332.0L1338.4 326.2M1287.7 321.4L1296.8 325.9L1306.6 328.2L1316.0 331.7M1316.0 331.7L1327.4 330.0L1338.4 326.2M1271.4 370.0L1282.0 370.2L1292.6 372.2L1303.2 370.6L1313.9 369.7L1324.5 370.0M1316.0 331.7L1321.8 340.4L1323.9 350.0L1324.2 360.0L1324.5 370.0M1316.3 409.7L1317.9 399.7L1320.3 389.9L1321.3 379.8L1324.8 370.2M1324.5 370.0L1324.8 370.2M1385.7 384.4L1379.3 392.1L1374.2 400.7L1369.0 409.3L1362.7 417.1L1355.3 424.0M1385.7 384.4L1375.6 378.2L1365.3 372.3L1356.6 364.1M1356.6 364.1L1347.5 369.7M1347.5 369.7L1345.6 380.2L1349.3 390.7L1349.8 401.3L1348.8 411.8L1347.5 422.3M1347.5 422.3L1355.3 424.0M1415.6 404.9L1411.8 416.1L1405.1 426.0L1400.1 436.6M1402.2 383.5L1385.7 384.4M1371.9 438.7L1381.1 435.9L1390.6 435.7L1400.1 436.6M1371.9 438.7L1360.7 434.7L1355.3 424.0M1361.3 338.5L1358.0 351.1L1356.6 364.1M1324.8 370.2L1336.2 370.7L1347.5 369.7M1324.1 426.3L1335.9 424.7L1347.5 422.3M1092.4 444.0L1081.9 445.7L1071.5 445.1L1061.0 445.2L1050.5 444.0M1092.4 444.0L1096.9 458.2M1096.9 458.2L1091.4 466.1L1086.1 474.1L1081.5 482.5M1081.5 482.5L1070.6 483.4L1059.7 484.1M1050.5 444.0L1051.8 455.8L1053.6 467.6L1054.7 479.5M1059.7 484.1L1054.7 479.5M1096.8 418.4L1094.1 431.1L1092.4 444.0M1040.5 427.1L1046.0 435.3L1050.5 444.0M1133.1 461.2L1124.0 461.5L1114.9 460.9L1106.1 457.8L1096.9 458.2M1145.2 485.0L1137.5 492.6L1132.2 502.0M1145.4 483.0L1145.2 485.0M1108.9 509.9L1104.7 500.4L1096.7 494.8L1088.7 489.1L1081.5 482.5M1045.2 539.8L1048.4 530.7L1049.3 521.0L1049.5 511.2L1054.3 502.5L1056.2 493.0L1059.7 484.1M1049.4 550.2L1045.2 539.8M1049.4 550.2L1067.1 553.0M1096.0 541.0L1086.5 545.3L1077.1 549.8L1067.1 553.0M1128.2 566.4L1128.0 562.1M1158.5 604.2L1164.0 596.1L1172.0 590.2L1179.2 583.6L1185.4 576.0L1191.4 568.3M1158.5 604.2L1150.5 598.2L1146.0 589.4L1139.2 582.4L1133.5 574.5L1128.2 566.4M1156.8 544.4L1166.1 545.6L1175.5 546.7M1191.4 568.3L1183.5 557.5L1175.5 546.7M1145.2 485.0L1154.3 489.8L1162.6 496.0L1172.2 500.2L1181.0 505.7L1188.8 512.6M1175.5 546.7L1177.4 537.6L1180.9 529.2L1183.2 520.3L1188.8 512.6M1180.6 461.9L1183.8 471.2L1188.0 479.9L1193.6 487.8L1199.0 495.8L1205.2 503.4M1188.8 512.6L1196.5 507.1L1205.2 503.4M1220.2 441.7L1219.9 451.8L1218.1 461.9L1221.7 471.9L1222.3 481.9L1220.6 492.0L1221.8 502.1M1205.2 503.4L1221.8 502.1M1167.7 631.4L1155.5 618.3M1167.7 631.4L1166.3 641.3L1164.7 651.2L1160.6 660.6M1155.5 618.3L1138.9 621.7M1142.4 676.9L1151.6 668.8L1160.6 660.6M1142.4 676.9L1134.9 668.0L1127.5 658.9L1119.4 650.4M1138.9 621.7L1131.0 630.3L1125.1 640.3L1119.4 650.4M1158.5 604.2L1155.5 618.3M1128.2 566.4L1122.1 573.2L1118.0 581.3L1113.6 589.2L1107.9 596.3L1102.5 603.5M1138.9 621.7L1130.2 616.3L1121.9 610.1L1112.1 607.2L1102.5 603.5M1067.1 553.0L1072.2 561.2L1076.0 570.1L1080.2 578.9L1084.8 587.3L1089.3 595.9L1093.6 604.6M1102.5 603.5L1093.6 604.6M833.7 473.0L844.0 475.6L853.5 481.2L864.2 482.3L874.0 486.9L884.7 488.1M833.7 473.0L834.9 462.3L838.0 452.1L840.3 441.7L843.2 431.4L846.9 421.4M884.7 488.1L892.5 478.2M892.5 478.2L888.5 470.1L886.6 461.0L880.8 453.7L874.9 446.4L871.0 438.2L867.3 429.9L866.2 420.6L863.5 411.8M863.5 411.8L855.9 417.8L846.9 421.4M822.1 477.8L833.7 473.0M798.9 469.9L797.3 460.2L795.2 450.6L795.5 440.8L795.1 431.1L795.4 421.4L794.9 411.6M846.9 421.4L836.0 422.3L826.1 417.7L815.6 415.9L805.2 414.1L794.9 411.6M739.0 453.7L744.5 439.0M744.5 439.0L751.9 433.3L759.1 427.1L766.8 421.8L774.8 416.8L783.5 413.0L791.5 408.1M794.9 411.6L791.5 408.1M876.1 515.3L880.6 504.6L885.0 493.9M876.1 515.3L880.5 525.0L884.3 535.0L886.4 545.5M885.0 493.9L893.6 497.5L899.1 505.1L906.9 509.8L913.6 515.9L921.9 520.0L928.4 526.4M886.4 545.5L897.2 546.1L908.0 545.6L918.8 546.5L929.6 546.8M929.6 546.8L929.3 536.6L928.4 526.4M838.5 532.2L827.2 526.2M838.5 532.2L847.7 527.5L857.3 523.7L866.3 518.6L876.1 515.3M884.7 488.1L885.0 493.9M963.2 410.5L961.1 423.7L958.2 436.7M902.8 396.7L905.4 406.4L909.2 415.8L909.7 425.8L912.2 435.4L912.8 445.4L913.8 455.3M958.2 436.7L950.3 442.7L941.2 445.8L932.1 449.2L923.2 452.7L913.8 455.3M1002.6 473.0L992.3 470.8L982.1 470.4L971.8 473.0M1002.6 473.0L1009.5 479.5M1009.5 479.5L1011.6 488.8L1010.9 498.3L1011.1 507.8L1011.3 517.2M971.8 473.0L963.5 481.5L957.5 491.7M980.2 527.3L989.7 521.4L1001.5 522.3L1011.3 517.2M980.2 527.3L973.4 519.7L966.5 512.1L962.1 502.9L957.5 493.8M957.5 493.8L957.5 491.7M1019.5 426.8L1013.9 435.2L1012.4 445.1L1009.9 454.7L1006.1 463.8L1002.6 473.0M958.2 436.7L961.2 445.9L963.1 455.6L967.4 464.3L971.8 473.0M1054.7 479.5L1045.7 479.0L1036.6 480.3L1027.6 481.5L1018.5 482.1L1009.5 479.5M1045.2 539.8L1037.6 532.8L1029.5 526.6L1020.9 521.1L1011.3 517.2M904.3 472.5L913.1 475.7L921.8 479.5L930.3 483.8L939.3 486.4L948.7 488.2L957.5 491.7M913.8 455.3L909.4 464.1L904.3 472.5M1044.4 556.0L1036.1 560.7L1027.3 563.6L1018.1 565.2L1008.6 565.6L999.7 568.4L991.3 572.5L982.1 574.1M970.5 559.5L976.0 567.0L982.1 574.1M970.5 559.5L974.7 549.0L979.8 538.9L980.2 527.3M1049.4 550.2L1044.4 556.0M928.4 526.4L936.2 518.7L942.7 509.9L949.7 501.5L957.5 493.8M970.5 559.5L959.0 557.2L947.3 556.5L935.6 555.4M935.6 555.4L929.6 546.8M892.5 478.2L904.3 472.5M729.6 403.0L737.7 395.3L747.0 389.2L756.2 382.8L763.2 374.0M729.6 403.0L720.2 399.3L710.7 395.8L700.5 395.8L690.4 395.0L680.7 392.7M708.6 359.9L717.5 362.3L725.9 366.5L735.4 366.6L743.9 370.5L752.9 372.4L762.3 372.4M708.6 359.9L700.6 366.4L694.2 374.5L686.3 381.2L680.0 389.3M762.3 372.4L763.2 374.0M680.0 389.3L680.7 392.7M744.5 439.0L740.5 430.1L736.5 421.2L733.4 412.0L729.6 403.0M787.1 387.3L790.3 397.5L791.5 408.1M787.1 387.3L779.3 382.6L771.2 378.5L763.2 374.0M666.8 441.8L669.3 431.9L671.8 422.0L673.1 411.8L677.5 402.5L680.7 392.7M668.5 444.3L666.8 441.8M716.7 313.5L716.2 322.9L715.0 332.3L713.7 341.6L712.0 350.9L708.6 359.9M758.2 318.0L759.0 327.1L758.8 336.2L760.1 345.2L761.6 354.2L763.0 363.3L762.3 372.4M633.8 344.7L639.6 351.9L647.7 356.7L655.0 362.4L661.8 368.5L667.6 375.6L673.5 382.8L680.0 389.3M811.1 308.9L813.4 318.1L813.9 327.4L813.1 336.7L814.1 345.9L812.5 355.2L813.3 364.5M813.3 364.5L806.2 374.0L796.7 380.7L787.1 387.3M622.6 440.2L633.7 440.0L644.8 439.9L655.7 441.9L666.8 441.8M622.6 440.2L618.0 432.0L614.8 423.4L611.0 414.9L608.6 406.0L605.3 397.4L603.6 388.3L602.0 379.1L599.8 370.2M482.8 537.5L492.3 537.2L501.9 536.0L511.4 536.3L520.9 535.1L530.4 535.0L540.0 536.3L549.5 535.5L559.0 538.1L568.6 537.5M486.5 515.7L495.5 513.4L504.6 511.2L513.1 507.9L520.8 503.0L527.9 497.0L536.1 493.1L543.3 487.2L551.5 483.2M551.5 483.2L553.7 492.5L556.7 501.5L560.5 510.2L560.7 520.1L563.8 529.1L568.6 537.5M529.5 414.8L536.8 422.4L542.2 431.9L550.4 438.8L557.9 446.2L565.5 453.7M551.5 483.2L556.8 473.7L561.4 463.8L565.5 453.7M622.6 440.2L613.3 447.6L602.3 452.3L592.0 457.9M565.5 453.7L578.8 455.4L592.0 457.9M706.7 572.1L696.6 572.4L686.9 569.6M722.1 552.0L713.8 561.6L706.7 572.1M697.0 532.9L689.5 540.2L681.4 546.7L673.5 553.5M686.9 569.6L680.4 561.4L673.5 553.5M612.8 737.0L604.0 729.3L593.7 723.5M612.8 737.0L622.4 735.8L632.0 734.6L641.5 732.9M641.5 700.9L642.9 711.6L642.2 722.3L641.5 732.9M641.5 700.9L631.3 705.9L620.1 705.5L609.1 706.6L598.4 709.2M598.4 709.2L593.7 723.5M594.4 678.8L585.3 674.3L576.9 668.6M524.9 687.0L533.2 682.9L542.4 681.4L550.3 676.3L558.8 672.6L568.0 671.1L576.9 668.6M555.2 742.2L565.2 738.2L574.2 732.3L584.5 728.9L593.7 723.5M594.4 678.8L595.5 688.9L598.4 698.9L598.4 709.2M576.0 844.1L574.0 842.5M576.0 844.1L585.0 840.2L594.7 838.9L604.0 836.0L613.8 834.9L623.3 833.1L632.2 828.6L641.6 826.5L651.0 824.1M574.0 842.5L571.1 838.4M571.1 838.4L577.5 831.9L583.0 824.7L589.9 818.6L592.5 809.2L600.7 804.0L604.4 795.4L609.8 788.2M651.0 824.1L646.8 815.5L641.3 807.6L635.2 800.1L631.9 790.9M631.9 790.9L621.6 786.8M609.8 788.2L621.6 786.8M550.3 826.2L561.0 831.9L571.1 838.4M536.0 891.3L540.8 882.0L548.1 874.6L555.6 867.3L563.5 860.5L570.8 853.1L574.0 842.5M549.5 760.9L557.1 767.0L566.4 769.5L575.6 772.0L582.8 779.1L591.9 781.9L600.8 785.1L609.8 788.2M612.8 737.0L614.6 747.0L617.7 756.7L619.1 766.7L620.7 776.7L621.6 786.8M570.1 905.6L578.6 900.2M576.0 844.1L582.5 851.4L585.0 860.8M585.0 860.8L582.5 870.5L580.6 880.3L579.5 890.2L578.6 900.2M1441.1 504.9L1449.9 507.9L1458.1 512.3L1466.8 515.6M1441.1 504.9L1435.8 496.5L1430.7 487.9L1427.9 478.4L1425.8 468.5M1478.5 506.6L1466.8 515.6M1478.5 506.6L1480.4 496.9L1476.3 488.1L1475.9 478.7L1473.9 469.6L1471.8 460.5M1471.8 460.5L1458.1 450.5M1458.1 450.5L1448.8 452.5L1440.8 457.0L1433.3 462.4L1426.0 468.1M1426.0 468.1L1425.8 468.5M1520.7 459.3L1510.8 456.3L1501.1 459.2L1491.3 458.9L1481.5 459.9L1471.8 460.5M1516.4 505.1L1506.8 502.6L1497.4 505.0L1488.0 505.1L1478.5 506.6M1461.6 423.3L1462.9 432.7L1463.1 441.9L1458.1 450.5M1506.4 417.9L1513.4 428.8L1523.4 436.9M1524.3 455.0L1523.9 445.9L1523.4 436.9M1400.1 436.6L1408.0 443.3L1415.0 450.8L1420.2 459.6L1426.0 468.1M1425.8 468.5L1415.8 472.6L1407.8 480.1M1371.9 438.7L1367.6 447.4L1366.1 456.7L1361.9 465.4L1365.2 475.5M1407.8 480.1L1397.2 478.6L1386.6 477.0L1375.9 476.3L1365.2 475.5M1327.5 490.4L1337.2 493.0L1346.6 496.6M1346.6 496.6L1353.5 490.2L1359.3 482.8L1365.2 475.5M1573.7 611.4L1565.7 618.3L1559.7 626.8L1550.9 633.0L1546.6 643.0M1514.4 582.7L1511.2 593.7L1504.5 603.1M1504.5 603.1L1512.8 608.4L1518.0 617.0L1525.8 622.8L1532.9 629.4L1539.3 636.6L1546.6 643.0M1596.0 802.0L1587.0 804.1L1577.9 803.9L1568.8 804.9L1559.9 806.7L1550.7 806.6M1584.6 872.1L1575.8 866.6L1567.1 861.0L1559.6 853.8L1551.4 847.5L1542.6 842.1L1535.8 834.0M1550.7 806.6L1545.4 815.5L1541.9 825.4L1535.8 834.0M1518.0 230.9L1521.0 243.7L1524.5 256.4M1557.4 266.1L1549.6 270.6M1524.5 256.4L1532.9 261.2L1540.6 267.1L1549.6 270.6M1466.8 515.6L1466.6 525.1M1498.9 563.2L1485.4 559.0M1485.4 559.0L1480.4 550.7L1475.1 542.6L1471.8 533.3L1466.6 525.1M1578.8 420.6L1571.3 418.2M1523.4 436.9L1532.6 430.8L1540.5 423.0M1571.3 418.2L1561.1 420.4L1550.8 421.6L1540.5 423.0M1540.5 423.0L1541.7 412.6L1541.1 402.1L1541.8 391.6L1538.6 381.2L1540.5 370.7M1519.6 374.5L1533.4 367.1M1533.4 367.1L1540.5 370.7M1571.3 418.2L1567.4 410.1L1563.8 401.7L1560.7 393.1L1554.3 386.4L1549.2 378.9L1544.2 371.4M1540.5 370.7L1544.2 371.4M1587.6 414.7L1585.3 405.1L1585.2 395.1L1586.4 384.9L1583.0 375.4L1580.9 365.7M1544.2 371.4L1553.0 367.3L1562.2 366.3L1571.6 366.6L1580.9 365.7M1618.0 361.1L1604.9 359.0L1591.8 357.3M1580.9 365.7L1591.8 357.3M1595.9 302.4L1588.4 310.7L1579.8 317.8M1591.8 357.3L1588.0 347.7L1585.2 337.7L1582.8 327.6L1579.8 317.8M641.5 732.9L649.6 737.0L656.8 742.5M631.9 790.9L641.3 785.3L647.5 777.0L654.2 769.0L658.5 759.2M658.5 759.2L656.8 742.5M1293.6 547.1L1282.9 554.2L1272.3 561.4M1293.6 547.1L1296.7 537.8L1298.2 528.3L1299.4 518.7L1299.7 509.1L1299.1 499.3M1272.3 561.4L1265.6 554.2L1257.5 548.4L1251.5 540.5L1246.1 532.1L1238.1 526.2M1265.6 491.3L1276.4 495.5L1287.7 497.4L1299.1 499.3M1265.6 491.3L1256.1 498.4L1245.1 502.8L1235.1 509.2M1235.1 509.2L1238.1 526.2M1225.6 594.4L1216.1 587.0L1209.1 577.0L1199.1 570.1M1225.6 594.4L1233.5 586.9L1243.1 582.2L1252.0 576.2L1261.9 571.7L1271.0 566.2M1271.0 566.2L1272.3 561.4M1199.1 570.1L1204.1 561.5L1210.9 554.5L1215.2 545.2L1221.9 538.0L1230.1 532.2L1238.1 526.2M1258.1 443.8L1257.7 453.6L1258.0 463.3L1262.1 472.4L1263.4 481.9L1265.6 491.3M1302.6 497.2L1299.1 499.3M1221.8 502.1L1235.1 509.2M1191.4 568.3L1199.1 570.1M1044.4 556.0L1044.9 565.2L1046.9 574.6L1044.2 583.6L1042.8 592.6L1041.6 601.7L1038.6 610.6M987.4 598.5L981.6 586.3M987.4 598.5L995.0 604.4L1004.2 608.0L1011.7 614.1M982.1 574.1L981.6 586.3M1038.6 610.6L1029.6 611.4L1020.4 610.9L1011.7 614.1M900.3 395.2L890.4 398.9L880.7 403.1L869.8 402.6M900.3 395.2L896.9 386.7L894.7 378.0L894.1 368.8L892.6 359.9L889.9 351.2L887.9 342.4L884.5 334.0L880.7 325.7L878.7 316.9M869.8 402.6L865.6 394.0L859.5 386.7L854.4 378.7L848.0 371.6M848.0 371.6L850.4 362.0L856.6 354.1L860.8 345.3L861.6 335.1L868.2 327.4L871.2 318.1M878.7 316.9L871.2 318.1M900.7 395.2L900.3 395.2M863.5 411.8L869.8 402.6M887.9 311.7L878.7 316.9M813.3 364.5L824.5 368.4L836.0 371.5L848.0 371.6M820.2 299.8L828.6 303.2L837.0 306.3L845.7 308.9L855.8 307.5L863.3 313.2L871.2 318.1M673.1 553.5L666.5 562.5L657.2 569.0L650.8 578.3M650.8 578.3L645.5 568.3L638.8 559.6L630.1 552.3M673.1 553.5L664.1 544.9L654.5 536.9M630.1 552.3L637.6 546.2L646.6 542.4L654.5 536.9M673.5 553.5L673.1 553.5M684.1 502.9L676.9 509.6L670.0 516.6L661.5 521.8L654.5 528.6M654.5 528.6L654.5 536.9M668.2 470.3L659.8 476.8L652.8 484.6L646.0 492.6L638.5 499.9L630.4 506.6M654.5 528.6L645.9 521.9L639.4 512.9L630.4 506.6M592.0 457.9L594.4 468.4L598.3 478.3L603.1 487.9L607.1 497.8L608.8 508.4M630.4 506.6L619.7 508.9L608.8 508.4M608.8 508.4L604.7 518.5L599.3 527.8L593.4 536.9L588.4 546.6M630.1 552.3L618.7 551.4L607.4 549.8L595.9 549.9M595.9 549.9L588.4 546.6M568.6 537.5L576.8 543.6L586.4 547.2M510.5 612.1L521.0 610.6L531.3 607.9L542.2 609.6L552.9 609.7L562.8 604.8M562.8 604.8L568.0 595.7L572.1 586.2L575.6 576.4L579.6 566.9L583.4 557.2L586.4 547.2M586.4 547.2L588.4 546.6M686.9 569.6L683.0 578.5L680.0 587.8L674.4 595.9L670.2 604.7M650.8 578.3L650.3 587.6L648.3 596.8L649.4 606.2M670.2 604.7L659.9 606.3L649.4 606.2M585.0 860.8L595.2 861.9L604.5 865.7L613.6 870.3L623.0 873.8L633.0 875.5M578.6 900.2L587.9 904.2L597.2 908.0L606.7 911.4L615.9 915.5L626.4 915.7M633.0 875.5L630.9 885.5L626.6 895.1L626.9 905.5L626.4 915.7M661.1 832.5L651.0 824.1M661.1 832.5L659.8 849.2M633.0 875.5L638.3 867.5L644.0 859.9L651.0 853.6L659.8 849.2M793.0 879.2L785.0 883.5L777.7 888.9L770.0 893.5M793.0 879.2L802.6 880.3L811.8 877.4M811.8 877.4L818.6 885.2L826.8 891.4M830.0 916.1L828.2 903.8L826.8 891.4M830.0 916.1L821.0 921.8L811.6 926.9L801.5 930.5L792.1 935.5M770.0 893.5L772.4 902.9L775.6 912.0L779.7 920.6L785.4 928.3L792.1 935.5M872.5 945.5L868.2 936.0L863.4 926.8M830.0 916.1L841.8 917.7L852.6 922.3L863.4 926.8M859.1 2056.6L859.9 2047.6L860.9 2038.6L859.8 2029.5L856.6 2020.5L853.5 2011.4L854.7 2002.4L854.6 1993.3L855.6 1984.3L856.6 1975.3L855.5 1966.3L854.2 1957.2L859.5 1948.2L858.1 1939.2L858.5 1930.1L857.7 1921.1L856.5 1912.1L855.7 1903.0L851.5 1893.9L852.7 1884.9L852.9 1875.9L856.6 1866.9L857.7 1857.9L856.5 1848.8L856.9 1839.8L859.7 1830.8L861.5 1821.8L860.8 1812.7L863.5 1803.7L861.9 1794.7L860.0 1785.6L862.6 1776.6L863.8 1767.6L861.7 1758.5L863.5 1749.5L863.6 1740.5L863.5 1731.4L863.9 1722.4L864.5 1713.4L864.5 1704.3L866.2 1695.3L864.9 1686.3L865.7 1677.3L866.7 1668.2L865.4 1659.2L865.9 1650.2L864.0 1641.1L864.1 1632.1L863.4 1623.0L863.7 1614.0L862.9 1604.9L862.4 1595.9L861.7 1586.9L863.4 1577.8L864.4 1568.8L864.0 1559.8L864.6 1550.8L863.9 1541.7L862.8 1532.7L866.0 1523.7L866.3 1514.6L867.5 1505.6L868.2 1496.6L868.4 1487.6L866.5 1478.5L864.9 1469.4L865.6 1460.4L865.2 1451.4L863.1 1442.3L861.6 1433.3L862.3 1424.2L860.4 1415.2L862.9 1406.2L865.1 1397.2L866.1 1388.1L866.2 1379.1L866.1 1370.1L867.6 1361.1L868.4 1352.0L864.9 1343.0L866.7 1333.9L868.2 1324.9L867.6 1315.9L868.6 1306.9L870.8 1297.8L871.0 1288.8L869.3 1279.8L872.2 1270.8L872.0 1261.7L872.2 1252.7L871.1 1243.6L871.4 1234.6L870.4 1225.6L871.7 1216.5L872.7 1207.5L874.3 1198.5L874.5 1189.5L872.5 1180.4L872.6 1171.4L873.1 1162.4L871.7 1153.3L872.7 1144.3L873.5 1135.3L874.7 1126.2L876.4 1117.2L877.2 1108.2L878.6 1099.2L879.3 1090.1L878.5 1081.1L878.2 1072.1L881.3 1063.1L881.6 1054.0L880.4 1045.0L880.0 1035.9L878.0 1026.9L873.7 1017.8L870.8 1008.7L871.8 999.7L873.7 990.7L872.3 981.6L871.5 972.6L872.3 963.6L872.5 954.5L872.5 945.5M792.1 935.5L790.1 944.3L786.9 952.8L788.3 962.3L788.7 971.6L786.4 980.3L784.7 989.2L783.3 998.1L781.4 1006.9L775.8 1014.9L776.2 1024.2L776.7 1033.5L775.9 1042.6L773.0 1051.2L770.3 1059.8L766.8 1068.3L767.0 1077.5L765.0 1086.3L761.5 1094.8L757.6 1103.2L756.0 1112.0L754.1 1120.8M1407.8 480.1L1403.6 488.4L1399.9 497.0L1397.7 506.2L1394.2 514.8L1390.8 523.5M1346.6 496.6L1353.0 506.4L1358.1 516.8M1390.8 523.5L1380.1 520.5L1368.7 520.5L1358.1 516.8M1441.1 504.9L1432.4 509.3L1425.5 515.7L1419.7 523.5L1413.9 531.1L1405.3 535.6M1390.8 523.5L1397.6 530.0L1405.3 535.6M1293.6 547.1L1303.4 548.0L1313.1 549.1L1321.9 553.6L1331.1 556.4L1339.7 561.2M1358.1 516.8L1354.4 525.7L1351.1 534.7L1349.0 544.3L1343.9 552.6L1339.7 561.2M1574.7 899.2L1565.6 901.0L1556.2 901.7L1547.2 904.0L1538.3 906.9L1530.1 913.1L1520.2 911.1L1511.0 912.7M1535.8 834.0L1523.7 839.2M1523.7 839.2L1520.0 848.1L1520.5 857.6L1516.8 866.4L1515.5 875.6L1514.8 885.0L1514.7 894.4L1512.0 903.4L1511.0 912.7M1175.6 933.0L1175.3 923.0L1176.0 913.2L1179.9 903.7L1179.0 893.7M1210.0 949.6L1200.3 947.7L1192.4 942.1L1184.3 937.0L1175.6 933.0M1210.0 949.6L1212.9 940.2L1215.4 930.7L1216.2 920.6L1220.3 911.6L1222.6 902.0L1224.9 892.4L1229.8 883.6M1179.0 893.7L1187.9 889.4L1195.6 882.8L1204.6 878.6M1229.8 883.6L1217.3 880.6L1204.6 878.6M1470.0 336.1L1477.3 329.4L1484.7 322.7M1533.4 366.3L1533.4 367.1M1533.4 366.3L1528.6 358.2L1522.3 351.2L1517.2 343.4L1511.8 335.7L1505.9 328.3L1501.4 320.0M1484.7 322.7L1501.4 320.0M1444.7 273.5L1455.5 274.4L1466.3 275.3M1484.7 322.7L1479.5 313.9L1476.3 304.2L1474.5 294.0L1470.4 284.7L1466.3 275.3M1487.8 230.2L1485.1 239.8L1484.5 249.9L1480.6 259.2L1478.1 268.9M1524.5 256.4L1518.0 263.7L1510.3 269.5L1502.4 275.1M1502.4 275.1L1490.1 272.7L1478.1 268.9M1466.3 275.3L1478.1 268.9M1546.4 287.6L1537.2 288.4L1528.9 292.5L1520.1 294.7L1511.3 297.1M1546.4 287.6L1550.2 296.3L1555.3 304.5L1557.3 313.9M1552.2 318.5L1557.3 313.9M1552.2 318.5L1542.8 317.2L1533.3 317.6L1523.7 320.3L1514.2 320.7L1504.9 316.4M1504.9 316.4L1509.3 307.2L1511.3 297.1M1549.6 270.6L1546.4 287.6M1502.4 275.1L1507.0 286.0L1511.3 297.1M1579.8 317.8L1568.4 316.7L1557.3 313.9M1533.4 366.3L1538.6 357.4L1541.5 347.4L1544.0 337.3L1546.7 327.4L1552.2 318.5M1501.4 320.0L1504.9 316.4M1504.5 603.1L1492.9 613.0M1492.9 613.0L1482.6 614.3L1472.2 613.7L1461.9 615.1L1451.6 616.0M1485.4 559.0L1474.6 562.3L1465.8 569.3L1456.6 575.5L1446.7 580.6M1451.6 616.0L1450.1 604.2L1448.9 592.3L1446.7 580.6M1466.6 525.1L1459.8 531.1L1453.5 537.6L1446.6 543.5L1440.2 550.0L1433.2 555.8L1426.3 561.6M1446.7 580.6L1441.1 573.0L1433.1 568.0L1426.3 561.6M1405.3 535.6L1408.0 546.6L1412.0 557.1M1426.3 561.6L1412.0 557.1M1003.9 648.6L1012.5 652.0L1021.3 654.7L1030.2 657.1M1011.7 614.1L1010.6 625.9L1006.8 637.2L1003.9 648.6M1038.6 610.6L1044.4 616.4M1044.4 616.4L1038.5 625.7L1036.4 636.4L1031.6 646.2L1030.2 657.1M638.1 646.3L639.6 636.7L640.4 627.0L643.6 617.8L646.3 608.5M638.1 646.3L629.4 642.0L621.3 636.2L612.8 631.2L604.0 627.2L594.7 624.4L584.3 624.7L574.8 622.2M574.8 622.2L567.8 609.4M567.8 609.4L577.3 609.7L586.7 609.4L595.9 607.0L605.0 604.0L614.4 604.5L623.7 602.9L633.1 602.4M633.1 602.4L646.3 608.5M594.4 678.8L603.5 673.7L613.0 669.6L619.8 660.5L630.0 657.5L639.6 653.6M576.9 668.6L577.0 659.3L575.6 650.1L574.9 640.8L573.8 631.6L574.8 622.2M639.6 653.6L638.1 646.3M562.8 604.8L567.8 609.4M595.9 549.9L601.3 557.4L605.6 565.6L612.7 571.8L617.2 579.8L625.0 585.6L629.0 594.0L633.1 602.4M649.4 606.2L646.3 608.5M683.0 661.2L673.1 659.1L663.0 660.1L653.1 658.4L643.2 656.8M683.0 661.2L685.3 669.9L687.3 678.8L688.0 687.9L691.3 696.4M670.8 706.1L681.0 702.9L690.5 698.0M670.8 706.1L657.9 702.0L646.5 694.8M646.5 694.8L645.8 685.3L645.3 675.7L642.8 666.4L643.2 656.8M691.3 696.4L690.5 698.0M656.8 742.5L666.9 733.4M666.9 733.4L667.6 724.2L668.9 715.1L670.8 706.1M641.5 700.9L646.5 694.8M639.6 653.6L643.2 656.8M628.0 928.3L628.2 919.7M628.0 928.3L636.4 933.5L646.4 935.4L655.0 940.2L663.7 944.9L671.9 950.9L681.2 954.2L690.8 956.7L700.4 959.5L709.5 963.2M628.2 919.7L637.5 917.3L646.3 913.0L656.0 912.2L665.3 910.0L674.8 908.4M674.8 908.4L679.8 916.6L685.2 924.4L692.4 930.9L697.5 938.9L702.7 946.9L709.5 953.7M709.5 953.7L709.5 963.2M613.3 959.7L616.9 948.6L620.8 937.7L628.0 928.3M626.4 915.7L628.2 919.7M754.1 1120.8L751.3 1112.2L750.6 1102.9L745.0 1095.0L741.5 1086.6L737.9 1078.1L735.5 1069.3L735.5 1059.9L734.4 1050.7L731.5 1042.1L731.4 1032.7L725.7 1024.8L723.0 1016.2L720.4 1007.4L717.1 998.9L714.2 990.2L712.9 981.2L710.4 972.4L709.5 963.2M682.9 877.7L677.1 870.6L671.6 863.3L666.9 855.2L659.8 849.2M682.9 877.7L676.9 887.1L676.3 897.8L674.8 908.4M736.1 887.7L731.4 896.7L729.4 906.9L727.2 917.0L722.0 925.8L716.5 934.6L711.7 943.6L709.5 953.7M682.9 877.7L692.2 877.2L700.9 879.8L709.7 881.6L718.8 881.9L727.7 883.4L736.1 887.7M770.0 893.5L761.0 890.2L752.8 885.1L743.5 882.7M736.1 887.7L743.5 882.7M1104.1 653.4L1119.4 650.4M1140.7 686.5L1142.4 676.9M1140.7 686.5L1130.5 686.9L1121.3 690.3L1112.7 695.4L1103.4 698.3L1094.5 702.7M1104.1 653.4L1101.8 663.1L1099.1 672.6L1098.3 682.6L1095.4 692.0L1094.1 701.9M1094.5 702.7L1094.1 701.9M1140.9 941.4L1152.9 940.6L1164.6 938.1L1175.6 933.0M1140.9 941.4L1131.7 928.1M1179.0 893.7L1168.2 889.2L1158.6 882.9L1150.2 874.8M1131.7 928.1L1133.8 918.9L1134.8 909.3L1137.6 900.3L1142.3 892.0L1145.0 883.0L1150.2 874.8M987.4 598.5L983.8 607.5L980.0 616.5L976.5 625.5L971.9 634.2M1003.9 648.6L991.6 654.6M991.6 654.6L984.3 648.5L978.3 641.1L971.9 634.2M803.6 559.6L812.7 572.0M838.5 532.2L841.3 543.5L843.4 555.0M812.7 572.0L829.1 571.1M843.4 555.0L836.5 563.3L829.1 571.1M670.2 604.7L679.3 606.8L686.8 613.3L695.9 615.3L705.0 617.3M683.0 661.2L692.5 656.7L699.7 649.0L708.3 643.2M708.3 643.2L705.1 630.4L705.0 617.3M706.7 572.1L710.1 583.2L712.4 594.6L714.6 605.9M714.6 605.9L705.0 617.3M1610.1 672.3L1600.5 672.9L1592.3 677.7L1584.0 682.1L1574.9 684.0M1586.5 738.2L1580.3 729.4L1576.2 719.5L1570.0 710.7L1565.9 700.8M1574.9 684.0L1569.8 692.1L1565.9 700.8M1546.6 643.0L1545.1 648.3M1574.9 684.0L1569.6 676.3L1563.8 669.0L1558.3 661.5L1551.0 655.5L1545.1 648.3M1492.9 613.0L1494.1 622.5L1497.5 631.4L1499.4 640.7L1502.1 649.8M1502.1 649.8L1514.5 655.1L1527.8 657.1M1545.1 648.3L1536.5 652.8L1527.8 657.1M1500.1 706.9L1508.8 703.9L1517.7 701.3M1500.1 706.9L1497.4 715.5L1495.1 724.3L1492.0 732.8L1488.2 741.0M1488.2 741.0L1493.4 748.8L1499.8 755.9L1503.5 764.6M1541.0 708.5L1529.7 703.8L1517.7 701.3M1541.0 708.5L1542.6 718.6L1541.9 728.7L1538.8 738.8L1541.4 748.9L1541.0 759.0M1503.5 764.6L1512.7 767.1L1521.9 768.8L1531.4 768.6M1541.0 759.0L1531.4 768.6M1470.7 676.0L1479.4 670.5L1486.3 662.8L1493.8 655.8L1502.1 649.8M1470.7 676.0L1477.0 684.7L1484.6 692.2L1494.0 698.0L1500.1 706.9M1527.8 657.1L1528.6 666.6L1524.9 675.0L1527.8 685.0L1519.7 692.4L1517.7 701.3M1565.9 700.8L1553.1 703.4L1541.0 708.5M1583.8 748.1L1573.2 751.2L1562.3 753.1L1551.5 755.4L1541.0 759.0M1550.7 806.6L1547.6 796.2L1541.6 787.3L1536.9 777.7L1531.4 768.6M1523.7 839.2L1515.5 835.0L1506.7 832.6L1498.8 827.6L1490.2 824.4L1481.9 820.6L1472.2 820.3M1471.2 816.8L1472.2 820.3M1471.2 816.8L1474.0 806.4L1480.1 798.2L1485.5 789.5L1492.0 781.6L1497.2 772.7L1503.5 764.6M1469.4 896.0L1477.4 903.0L1486.9 907.4L1495.7 913.0L1504.7 918.2M1469.4 896.0L1459.7 895.6L1450.3 897.2L1440.6 897.4L1431.6 901.9M1431.6 901.9L1433.7 910.8L1435.2 919.7L1435.1 928.8L1436.2 937.7L1439.8 946.4L1441.2 955.3L1443.4 964.1L1440.6 973.5L1438.1 982.8L1437.3 992.0L1439.3 1000.8L1439.0 1009.9L1440.7 1018.8L1441.6 1027.8L1444.5 1036.5L1444.2 1045.6L1449.6 1054.1L1447.9 1063.4L1448.4 1072.4L1450.2 1081.3L1451.3 1090.2L1453.0 1099.1L1452.5 1108.2L1452.4 1117.3L1451.0 1126.5L1455.2 1135.1L1457.0 1144.0L1455.8 1153.2L1458.7 1162.0L1462.2 1170.7L1463.4 1179.6L1464.5 1188.5L1465.7 1197.5L1465.9 1206.5L1468.4 1215.3L1469.1 1224.3L1469.6 1233.3L1471.9 1242.1L1472.4 1251.2L1474.3 1260.0L1476.3 1268.9L1478.9 1277.7L1477.6 1286.9L1478.3 1295.9L1478.7 1304.9L1477.3 1314.1L1474.9 1323.4L1477.2 1332.2L1477.8 1341.2L1479.6 1350.1L1480.5 1359.1L1481.6 1368.0L1481.8 1377.1L1483.5 1386.0M1504.7 918.2L1503.6 927.2L1503.1 936.2L1503.9 945.2L1500.3 954.1L1500.5 963.1L1502.3 972.2L1502.0 981.2L1503.8 990.3L1501.5 999.2L1501.2 1008.2L1501.4 1017.2L1498.9 1026.1L1500.1 1035.2L1498.2 1044.1L1496.9 1053.1L1495.4 1062.0L1495.9 1071.0L1495.1 1080.0L1496.6 1089.1L1494.5 1098.0L1489.7 1106.8L1487.7 1115.7L1488.2 1124.8L1488.2 1133.8L1487.3 1142.8L1483.3 1151.6L1484.2 1160.7L1483.0 1169.6L1483.0 1178.6L1483.3 1187.7L1484.6 1196.7L1484.8 1205.7L1482.3 1214.6L1481.9 1223.6L1481.3 1232.6L1481.5 1241.7L1479.9 1250.6L1479.3 1259.6L1479.7 1268.6L1479.6 1277.6L1482.7 1286.8L1485.2 1295.9L1486.4 1305.0L1488.0 1314.1L1489.6 1323.1L1489.1 1332.1L1488.6 1341.1L1488.4 1350.1L1486.3 1359.1L1484.9 1368.0L1486.1 1377.1L1483.5 1386.0M1511.0 912.7L1504.7 918.2M1472.2 820.3L1468.0 829.2L1463.0 837.6M1463.0 837.6L1463.9 847.3L1465.6 857.0L1466.9 866.7L1468.7 876.4L1470.3 886.1L1469.4 896.0M1167.7 631.4L1179.3 634.1L1191.1 635.6L1203.0 636.4M1225.6 594.4L1226.3 612.0M1203.0 636.4L1211.0 628.5L1218.1 619.8L1226.3 612.0M1160.6 660.6L1167.3 669.7L1177.7 674.1L1185.5 681.8L1194.8 687.5M1150.6 697.7L1140.7 686.5M1150.6 697.7L1161.4 703.6L1173.6 705.7M1194.8 687.5L1187.1 692.9L1180.6 699.6L1173.6 705.7M1212.7 672.3L1206.9 664.3L1204.1 655.4L1202.8 646.1L1203.0 636.4M1212.7 672.3L1202.9 685.3M1194.8 687.5L1202.9 685.3M1451.6 616.0L1445.1 624.3M1470.7 676.0L1464.5 674.5M1464.5 674.5L1460.8 671.4M1445.1 624.3L1445.7 634.6L1449.5 643.8L1455.2 652.3L1458.0 661.9L1460.8 671.4M1412.0 557.1L1405.2 566.1L1397.2 573.9L1387.9 580.5L1380.7 589.2M1445.1 624.3L1435.5 626.7L1425.7 627.0L1415.9 628.0L1406.2 629.0M1380.7 589.2L1386.6 596.6L1392.3 604.2L1396.5 612.8L1401.5 620.8L1406.2 629.0M1460.8 671.4L1451.2 674.2L1441.2 675.4L1431.2 676.5L1421.6 679.8L1411.9 682.2M1411.9 682.2L1410.5 673.3L1409.4 664.2L1407.0 655.5L1406.2 646.3L1400.7 638.4M1400.7 638.4L1406.2 629.0M1087.6 612.2L1092.0 623.5L1095.0 635.0L1095.9 647.1M1087.6 612.2L1077.9 615.9L1067.8 618.0L1057.7 620.4M1057.7 620.4L1061.8 631.6L1064.8 643.1L1065.4 655.2M1095.9 647.1L1086.0 649.8L1076.0 652.2L1066.6 656.1M1066.6 656.1L1065.4 655.2M1093.6 604.6L1087.6 612.2M1104.1 653.4L1095.9 647.1M1044.4 616.4L1057.7 620.4M1030.9 658.2L1030.2 657.1M1030.9 658.2L1042.3 655.9L1053.7 653.1L1065.4 655.2M1069.1 684.4L1076.1 692.1L1085.1 697.0L1094.1 701.9M1069.1 684.4L1067.9 675.0L1067.5 665.5L1066.6 656.1M1030.9 658.2L1030.9 668.6L1033.4 678.9L1032.5 689.3M1032.5 689.3L1041.9 689.9L1051.1 688.5L1060.0 685.7L1069.1 684.4M743.5 882.7L743.1 872.3L744.5 861.8L743.5 851.4M793.0 879.2L793.9 870.0L794.7 860.7L793.2 851.5L792.9 842.2L793.0 833.0M793.0 833.0L782.9 836.1L772.7 839.1L762.8 842.7L753.6 848.3L743.5 851.4M1037.7 723.7L1046.9 722.4L1056.0 720.5L1065.1 718.3L1074.5 719.3L1083.7 718.5L1093.0 718.9M1037.7 723.7L1038.3 735.9L1041.7 747.4L1044.8 759.0M1044.8 759.0L1054.7 759.3L1064.4 758.8L1073.6 755.5L1082.8 752.3M1082.8 752.3L1085.7 741.1L1088.5 729.9L1093.2 719.3M1093.0 718.9L1093.2 719.3M1150.6 697.7L1148.1 706.5L1143.8 714.6L1139.5 722.6L1135.0 730.6L1132.7 739.5M1094.5 702.7L1093.0 718.9M1132.7 739.5L1123.2 733.7L1112.4 730.4L1103.2 724.1L1093.2 719.3M1086.8 853.5L1089.3 862.3L1095.4 869.4L1096.6 878.8L1101.8 886.4M1086.8 853.5L1096.2 852.6L1105.1 849.1L1114.7 850.0L1124.1 849.8L1133.3 847.7M1101.8 886.4L1110.3 881.7L1119.5 878.5L1128.1 874.1L1136.2 868.2L1146.7 868.2M1133.3 847.7L1139.2 858.2L1146.7 867.6M1146.7 868.2L1146.7 867.6M1131.7 928.1L1122.5 923.7L1114.0 918.0L1105.3 912.6L1097.0 906.7M1097.0 906.7L1099.4 896.6L1101.8 886.4M1150.2 874.8L1146.7 868.2M1204.6 878.6L1199.2 871.0L1194.1 863.3L1191.7 854.3L1188.3 845.7L1184.0 837.6M1184.0 837.6L1175.9 842.7L1168.4 848.7L1161.2 855.1L1154.0 861.3L1146.7 867.6M661.1 832.5L669.9 826.5L679.7 822.8L689.5 819.0M658.5 759.2L668.8 760.9L678.4 765.0L688.1 768.7L697.8 772.3M689.5 819.0L693.0 810.5L694.1 801.5L696.4 792.7L697.3 783.6L698.9 774.7M697.8 772.3L698.9 774.7M886.4 545.5L883.3 557.7L876.2 568.2M843.4 555.0L853.2 559.9L862.3 566.3L873.3 568.6M876.2 568.2L873.3 568.6M753.6 638.5L744.3 643.6L735.4 649.3L725.6 653.3M753.6 638.5L758.6 646.0L764.4 653.1L767.7 661.6L771.7 669.7L776.0 677.7M776.0 677.7L762.7 682.9M762.7 682.9L756.3 673.4L746.8 668.4L738.4 661.9L727.7 658.6M727.7 658.6L725.6 653.3M720.5 690.3L723.6 679.9L725.4 669.2L727.7 658.6M691.3 696.4L700.8 693.2L710.6 691.8L720.5 690.3M708.3 643.2L716.6 648.8L725.6 653.3M1391.3 746.0L1388.1 737.0L1387.6 727.5L1386.4 718.0L1384.6 708.7L1380.6 700.0M1391.3 746.0L1401.9 747.8L1412.5 747.0L1423.1 747.4L1433.6 746.0M1437.3 728.9L1429.8 722.1L1423.2 714.5L1418.3 705.8L1416.3 695.1L1408.5 688.5M1437.3 728.9L1438.4 741.0M1408.5 688.5L1399.6 693.3L1389.8 696.0L1380.6 700.0M1438.4 741.0L1433.6 746.0M1400.8 807.0L1398.4 798.1L1395.1 789.6L1390.0 782.0L1385.5 774.1L1381.3 766.0L1377.6 757.8M1377.6 757.8L1384.1 751.4L1391.3 746.0M1437.7 793.0L1428.0 795.2L1418.3 797.5L1409.1 800.9L1400.8 807.0M1437.7 793.0L1438.4 783.4L1437.1 774.1L1436.4 764.7L1437.5 755.1L1433.6 746.0M1464.5 674.5L1460.2 683.7L1453.1 691.5L1447.4 699.9L1444.7 709.9L1440.1 718.9L1437.3 728.9M1411.9 682.2L1408.5 688.5M1488.2 741.0L1478.2 743.8L1468.3 743.9L1458.3 741.7L1448.3 740.6L1438.4 741.0M1471.2 816.8L1465.2 807.5L1455.8 803.0L1446.4 798.4L1437.7 793.0M1339.7 561.2L1343.5 570.7M1380.7 589.2L1370.8 589.4L1361.0 587.6M1343.5 570.7L1352.7 578.7L1361.0 587.6M1271.0 566.2L1278.0 572.9L1280.3 582.2L1284.0 590.8L1289.8 598.1L1293.5 606.7M1343.5 570.7L1334.1 575.2L1326.0 581.5L1317.5 587.4L1309.1 593.2L1300.0 598.1L1293.5 606.7M793.0 833.0L805.6 820.4M805.6 820.4L797.7 815.2L791.3 807.9L783.9 801.8L774.2 799.5M743.5 851.4L736.8 839.2M774.2 799.5L767.3 805.5L760.5 811.6L753.9 817.8L749.8 826.4L742.5 832.1L736.8 839.2M689.5 819.0L698.0 823.6L707.5 824.0L716.6 826.1L725.5 828.7M725.5 828.7L736.8 839.2M945.1 1077.3L947.4 1068.1L945.7 1059.1L942.7 1050.1L941.0 1041.1L940.2 1032.1L941.2 1023.0L939.1 1014.0L939.6 1004.9L940.2 995.8L939.2 986.7L937.5 977.7L936.8 968.7L939.3 959.5L940.9 950.3L940.4 941.3L940.1 932.2L939.2 923.2M872.5 945.5L881.1 940.2L890.8 937.3L899.6 932.3L908.0 926.8L917.9 924.1L926.0 917.9M939.2 923.2L926.0 917.9M811.8 877.4L816.1 868.6L820.4 859.9L825.3 851.4M805.6 820.4L806.6 820.2M806.6 820.2L810.0 822.3M825.3 851.4L821.2 841.2L815.6 831.8L810.0 822.3M924.2 770.3L915.2 774.1L908.9 781.6M865.6 782.6L876.5 783.4L887.3 782.6L898.1 782.9L908.9 781.6M871.4 743.4L881.0 745.0L890.7 745.8L900.4 745.5L910.2 744.6M924.2 770.3L921.2 760.8L916.1 752.5L910.2 744.6M865.6 782.6L864.5 781.1M871.4 743.4L864.5 749.5M864.5 749.5L863.4 760.1L864.3 770.6L864.5 781.1M863.7 816.4L854.8 818.0L846.0 820.0L837.1 821.8L828.0 821.2L818.9 820.8L810.0 822.3M865.6 782.6L864.3 793.8L865.0 805.1L863.7 816.4M806.6 820.2L811.8 810.8L814.9 800.7L818.0 790.6L820.0 780.0M864.5 781.1L853.4 779.0L842.3 778.4L831.2 778.5L820.0 780.0M768.2 787.2L774.2 799.5M768.2 787.2L773.9 778.3L780.9 770.4L787.8 762.3L794.8 754.4L800.4 745.3M820.0 780.0L815.2 771.3L810.7 762.4L807.2 752.9L800.4 745.3M1083.0 793.6L1076.3 799.9L1068.3 804.9L1061.8 811.4L1056.0 818.7L1048.8 824.6M1083.0 793.6L1072.5 792.4L1063.6 786.8L1054.1 782.7L1044.6 778.8L1034.7 776.2M1034.7 776.2L1032.6 788.4L1031.1 800.7M1031.1 800.7L1036.1 808.2L1040.8 816.0L1045.6 823.7M1045.6 823.7L1048.8 824.6M1184.5 835.4L1184.0 837.6M1184.5 835.4L1176.0 831.1L1167.5 826.5L1158.8 822.4L1151.5 816.1L1144.4 809.5M1133.3 847.7L1130.9 838.3L1131.7 828.8L1132.5 819.4M1144.4 809.5L1132.5 819.4M1083.9 850.8L1086.8 853.5M1083.9 850.8L1089.5 842.4L1093.1 833.1L1097.6 824.2L1101.4 814.9M1132.5 819.4L1122.1 817.9L1111.8 815.8L1101.4 814.9M1071.7 850.4L1064.0 841.9L1056.7 833.0L1048.8 824.6M1083.9 850.8L1071.7 850.4M1083.0 793.6L1088.7 792.2M1101.4 814.9L1095.7 803.2L1088.7 792.2M1034.3 775.0L1040.4 767.6L1044.8 759.0M1034.3 775.0L1034.7 776.2M1082.8 752.3L1088.2 760.9L1089.4 771.1L1093.9 780.0M1088.7 792.2L1093.9 780.0M1043.0 882.0L1047.6 890.8L1055.2 896.6L1062.6 902.6L1069.8 908.8L1076.5 915.5M1043.0 882.0L1033.7 882.1M1033.7 882.1L1027.3 890.5L1023.8 900.2L1019.9 909.6L1016.3 919.2L1014.0 929.4M1014.0 929.4L1024.2 931.2L1034.2 933.2L1044.1 936.1L1054.2 937.9L1063.8 941.8M1063.8 941.8L1069.6 933.8L1074.4 925.3L1076.5 915.5M1071.7 850.4L1061.6 855.6L1054.2 863.3L1050.9 874.7L1043.0 882.0M1097.0 906.7L1087.0 911.7L1076.5 915.5M1019.6 844.3L1027.3 836.1L1035.9 829.2L1045.6 823.7M1019.6 844.3L1019.3 857.7L1019.0 871.2M1019.0 871.2L1025.0 878.6L1033.7 882.1M935.5 1311.9L937.7 1303.1L938.6 1294.0L943.2 1285.7L949.3 1277.7L951.5 1268.9L950.1 1259.3L953.2 1250.7L954.5 1241.7L954.9 1232.5L957.3 1223.7L957.3 1214.5L960.2 1205.8L964.8 1197.5L966.3 1188.5L966.8 1179.4L969.0 1170.5L971.0 1161.7L972.7 1152.8L975.8 1144.1L976.4 1135.0L977.6 1126.0L975.5 1116.3L973.6 1106.6L976.1 1097.9L981.1 1089.6L983.9 1080.9L985.7 1072.0L990.0 1063.7L992.1 1054.8L993.9 1045.9L995.9 1037.1L998.1 1028.3L999.0 1019.2L999.8 1010.1L999.0 1000.7L1002.1 992.0L1002.3 982.8L1003.3 973.7L1006.5 965.1L1009.0 956.4L1009.9 947.3L1011.7 938.4L1013.7 929.5M1092.3 1064.6L1089.4 1055.3L1085.9 1046.1L1083.4 1036.8L1082.7 1027.0L1080.9 1017.4L1079.7 1007.8L1078.3 998.2L1078.4 988.2L1077.8 978.4L1074.6 969.2L1072.5 959.7L1066.4 951.2L1063.8 941.8M1013.7 929.5L1014.0 929.4M1092.3 1064.6L1095.6 1055.7L1100.4 1047.4L1103.8 1038.6L1107.1 1029.7L1112.5 1021.7L1115.2 1012.6L1117.1 1003.2L1122.0 994.9L1126.7 986.6L1127.9 976.9L1131.9 968.3L1135.0 959.4L1139.8 951.1L1140.9 941.4M939.2 923.2L950.1 917.0M945.1 1077.3L947.7 1068.2L950.0 1059.0L952.0 1049.8L954.6 1040.6L956.1 1031.3L958.7 1022.2L957.9 1012.3L961.1 1003.3L963.5 994.2L969.3 985.9L970.5 976.4L973.2 967.3L974.6 958.0L978.5 949.2L977.7 939.3L980.2 930.1M950.1 917.0L960.3 920.9L970.1 925.9L980.2 930.1M1013.7 929.5L1003.6 925.7M980.2 930.1L991.4 925.6L1003.6 925.7M940.8 771.7L950.5 771.4L960.1 773.3L969.8 772.4L979.3 774.9M940.8 771.7L939.4 772.5M939.4 772.5L941.5 781.9L941.8 791.8L946.3 800.8L948.8 810.2L948.5 820.1M984.4 778.8L979.3 774.9M984.4 778.8L986.6 790.5L990.6 801.8L990.2 813.8M948.5 820.1L958.0 821.8L967.4 824.0L976.5 827.4M976.5 827.4L986.9 821.0M990.2 813.8L986.9 821.0M906.6 819.5L915.5 821.8L924.3 824.0L933.3 825.5L942.6 824.2M942.6 824.2L948.5 820.1M924.2 770.3L939.4 772.5M908.9 781.6L906.4 790.9L906.6 800.5L906.7 810.0L906.6 819.5M1031.1 800.7L1021.6 806.3L1011.6 810.1L1001.2 812.8L990.2 813.8M1018.0 769.2L1007.0 773.2L995.7 776.0L984.4 778.8M1034.3 775.0L1018.0 769.2M1019.6 844.3L1011.2 838.9L1002.5 833.7L995.4 826.4L986.9 821.0M988.9 729.9L1004.2 733.3M988.9 729.9L982.9 724.2M982.9 724.2L984.3 714.9L986.5 705.8L992.5 697.9L993.1 688.3M1004.2 733.3L1013.4 727.8L1023.3 723.9L1033.3 720.3M993.1 688.3L1002.3 689.8L1011.4 693.0L1021.1 690.7L1030.4 692.0M1030.4 692.0L1034.4 701.1L1032.4 710.9L1033.3 720.3M1018.0 769.2L1012.4 761.0L1009.9 751.7L1008.3 742.0L1004.2 733.3M979.3 774.9L980.6 765.8L983.8 757.1L984.4 747.8L985.7 738.7L988.9 729.9M959.1 724.7L971.1 726.0L982.9 724.2M959.1 724.7L954.2 733.6L951.4 743.3L948.0 752.9L945.5 762.7L940.8 771.7M1037.7 723.7L1033.3 720.3M991.6 654.6L987.7 664.9L984.3 675.4M1032.5 689.3L1030.4 692.0M984.3 675.4L993.1 688.3M935.6 555.4L931.2 566.2L924.1 575.5L918.1 585.4M876.2 568.2L887.0 579.0M918.1 585.4L907.4 585.0L897.2 582.0L887.0 579.0M745.0 748.4L735.0 748.5L724.9 748.8L715.1 746.4L705.4 743.5M745.0 748.4L752.3 740.8L758.2 732.1M758.2 732.1L752.7 722.0L746.2 712.6M704.7 728.4L702.8 734.8M704.7 728.4L713.2 724.0L721.7 719.7L730.1 715.3L738.6 710.9M738.6 710.9L746.2 712.6M702.8 734.8L705.4 743.5M666.9 733.4L678.9 732.9L690.8 735.4L702.8 734.8M690.5 698.0L694.1 708.7L698.4 719.0L704.7 728.4M720.5 690.3L726.3 697.4L733.0 703.6L738.6 710.9M762.7 682.9L756.5 692.4L750.5 702.0L746.2 712.6M697.8 772.3L703.5 763.5L706.1 753.9L705.4 743.5M829.2 659.3L818.6 662.6L807.7 664.9L797.4 669.2M829.2 659.3L832.3 669.6L836.7 679.2L842.3 688.3L847.7 697.4M847.7 697.4L842.6 706.4L833.9 712.5L828.6 721.4L821.0 728.4M791.4 676.6L794.3 685.7L797.2 694.9L797.6 704.8L801.0 713.8L804.1 722.9L806.8 732.1M791.4 676.6L797.4 669.2M821.0 728.4L806.8 732.1M800.2 740.0L789.4 739.3L778.9 737.8L768.2 736.7L758.2 732.1M800.2 740.0L806.8 732.1M776.0 677.7L791.4 676.6M864.5 749.5L854.4 748.2L845.5 744.5L837.4 738.9L829.0 734.1L821.0 728.4M800.4 745.3L800.2 740.0M756.8 634.6L753.2 625.5L751.7 616.1L750.8 606.5L749.9 596.9M756.8 634.6L770.1 635.9L783.5 635.4M783.5 635.4L788.3 626.0L792.8 616.4L798.7 607.5M759.6 586.3L749.9 596.9M759.6 586.3L769.5 589.2L778.9 593.1L789.0 595.3L796.4 603.5M796.4 603.5L798.7 607.5M753.6 638.5L756.8 634.6M714.6 605.9L723.2 602.5L732.1 600.8L740.9 598.3L749.9 596.9M797.4 669.2L792.0 661.5L789.2 652.8L785.0 644.6L783.5 635.4M758.6 569.8L759.6 586.3M812.7 572.0L809.8 583.8L803.0 593.6L796.4 603.5M821.0 616.5L823.8 625.6L827.0 634.6L829.3 644.0L833.6 652.6M821.0 616.5L829.6 612.1L836.1 605.0L843.8 599.4M843.8 599.4L847.9 599.5M847.9 599.5L855.0 605.7L863.0 610.7L869.3 617.7M869.3 617.7L865.5 627.0L860.5 635.8L859.3 646.0M859.3 646.0L846.5 649.5L833.6 652.6M798.7 607.5L810.3 610.7L821.0 616.5M829.2 659.3L833.6 652.6M829.1 571.1L835.3 579.9L840.7 589.1L843.8 599.4M873.3 568.6L867.3 576.6L860.3 583.8L854.3 591.8L847.9 599.5M887.0 579.0L886.1 588.2L884.4 597.1L882.4 606.0L878.6 614.5M878.6 614.5L869.3 617.7M1362.7 759.8L1377.6 757.8M1362.7 759.8L1356.6 750.9L1350.6 742.1L1345.6 732.4L1338.4 724.4L1330.9 716.6M1380.6 700.0L1369.7 695.3M1330.9 716.6L1332.3 713.6M1369.7 695.3L1360.4 700.0L1352.2 706.9L1342.3 710.4L1332.3 713.6M1400.7 638.4L1391.1 643.9L1381.2 648.8L1370.7 652.3L1360.3 655.9M1369.7 695.3L1368.2 685.3L1366.0 675.4L1363.1 665.6L1360.3 655.9M1400.8 807.0L1392.4 816.5L1387.2 828.1M1362.7 759.8L1355.2 766.8L1348.6 774.6M1348.6 774.6L1353.0 784.4L1354.5 795.2L1357.4 805.5L1361.7 815.4L1365.1 825.5M1387.2 828.1L1376.1 826.9L1365.1 825.5M1463.0 837.6L1452.5 839.4L1443.0 844.0L1432.4 845.4L1422.7 849.5L1413.0 853.5L1402.8 856.2M1387.2 828.1L1392.7 837.3L1397.0 847.2L1402.8 856.2M1317.8 723.5L1307.8 719.9L1297.3 717.4L1288.2 711.3L1277.9 708.3M1317.8 723.5L1313.5 732.5L1310.2 742.0L1308.6 752.2L1301.1 759.7M1301.1 759.7L1291.8 756.4L1282.1 754.6L1272.5 752.3M1272.5 752.3L1272.7 742.3L1269.7 732.8L1266.3 723.5L1265.6 713.7M1277.9 708.3L1265.6 713.7M1348.6 774.6L1339.7 777.7L1330.6 780.1L1321.2 780.2L1311.9 780.9M1330.9 716.6L1317.8 723.5M1311.9 780.9L1304.4 771.4L1301.1 759.7M760.8 785.3L751.2 790.6L740.4 791.5M760.8 785.3L755.2 777.6L750.9 769.3L748.1 760.2L744.7 751.5M740.4 791.5L733.4 782.7L724.2 776.1M744.7 751.5L736.3 758.5L731.9 768.6L724.2 776.1M768.2 787.2L760.8 785.3M725.5 828.7L729.9 819.7L732.5 809.9L735.5 800.3L740.4 791.5M745.0 748.4L744.7 751.5M698.9 774.7L711.5 775.8L724.2 776.1M959.1 724.7L951.9 719.0L944.3 713.7L939.2 705.8M984.3 675.4L972.5 675.5L960.7 675.8L948.9 677.7M948.9 677.7L945.8 687.1L942.3 696.4L939.2 705.8M910.2 744.6L911.4 733.5L913.0 722.5L916.3 711.8M939.2 705.8L927.7 708.8L916.3 711.8M876.1 834.8L869.4 843.5L861.0 850.6L853.7 858.7M876.1 834.8L886.5 837.2M886.5 837.2L888.6 840.1M888.6 840.1L889.8 849.4L889.8 858.9L888.9 868.4L890.8 877.6L894.5 886.6M853.7 858.7L854.7 873.6M854.7 873.6L861.0 881.4L868.1 888.6L874.4 896.4M874.4 896.4L884.0 890.7L894.5 886.6M825.3 851.4L834.2 856.1L843.8 857.8L853.7 858.7M863.7 816.4L870.9 824.9L876.1 834.8M906.6 819.5L895.9 827.7L886.5 837.2M931.2 858.4L933.2 849.5L936.9 841.3L939.9 832.8L942.6 824.2M931.2 858.4L923.0 854.0L914.3 850.9L905.9 846.8L897.3 843.5L888.6 840.1M933.5 864.6L925.6 873.0L918.7 882.2L910.5 890.4M910.5 890.4L894.5 886.6M931.2 858.4L933.5 864.6M826.8 891.4L837.2 887.1L845.8 880.1L854.7 873.6M863.4 926.8L869.0 917.4L872.3 907.1L874.4 896.4M910.5 890.4L915.6 899.6L921.1 908.6L926.0 917.9M1198.8 798.4L1190.2 790.5M1196.6 824.9L1198.2 811.7L1198.8 798.4M1184.5 835.4L1196.6 824.9M1144.4 809.5L1146.1 800.5M1146.1 800.5L1155.4 800.7L1164.3 799.1L1172.7 795.2L1181.4 792.7L1190.2 790.5M942.0 868.0L945.9 876.3L948.7 885.0L955.1 892.0L957.8 900.8M942.0 868.0L953.1 864.4L964.7 862.0L975.2 856.6M957.8 900.8L966.7 896.4L975.6 891.9L984.5 887.5M975.2 856.6L983.3 865.8L990.1 876.0M990.1 876.0L984.5 887.5M933.5 864.6L942.0 868.0M950.1 917.0L957.8 900.8M976.5 827.4L976.2 837.1L976.8 846.9L975.2 856.6M1003.6 925.7L998.7 916.2L995.9 905.7L991.7 895.8L984.5 887.5M1019.0 871.2L1009.1 871.1L999.7 874.0L990.1 876.0M1335.8 636.0L1326.7 633.6L1318.6 629.0L1311.1 623.0L1301.5 621.8L1293.5 617.1M1335.8 636.0L1339.3 645.5M1339.3 645.5L1333.1 652.6L1328.1 660.6L1321.6 667.3L1315.6 674.5M1315.6 674.5L1303.8 675.9L1292.2 673.5M1292.2 673.5L1283.1 666.7L1275.3 658.6L1269.0 649.0M1293.5 617.1L1284.6 623.4L1278.2 632.4L1269.3 638.7M1269.3 638.7L1269.0 649.0M1361.0 587.6L1358.1 596.4L1354.1 604.5L1351.0 613.2L1347.6 621.6L1342.9 629.5L1335.8 636.0M1293.5 606.7L1293.5 617.1M1360.3 655.9L1350.0 650.3L1339.3 645.5M1332.3 713.6L1327.1 704.3L1323.7 694.2L1319.6 684.4L1315.6 674.5M1277.9 708.3L1282.8 700.1L1284.7 690.8L1287.2 681.6L1292.2 673.5M1242.4 674.1L1248.5 667.2L1255.1 660.9L1264.0 657.0L1269.0 649.0M1242.4 674.1L1245.0 683.8L1247.5 693.5L1251.4 702.7L1257.4 711.0M1257.4 711.0L1265.6 713.7M1226.3 612.0L1235.7 616.2L1244.8 620.7L1253.2 626.3L1261.6 632.0L1269.3 638.7M1212.7 672.3L1222.5 674.4L1232.5 673.3L1242.4 674.1M1311.9 780.9L1307.2 790.2L1304.2 800.0M1243.5 772.4L1252.8 765.1L1262.9 759.0L1272.5 752.3M1243.5 772.4L1251.5 777.3L1258.6 783.3L1264.8 790.3L1273.0 795.0L1279.4 801.9L1285.1 809.4M1285.1 809.4L1295.1 805.7L1304.2 800.0M1365.1 825.5L1355.8 828.0L1347.4 832.4L1339.2 837.3M1304.2 800.0L1311.6 807.1L1319.2 814.0L1327.1 820.6L1333.4 828.8L1339.2 837.3M1210.0 949.6L1217.0 955.7L1221.6 963.5L1226.7 971.0L1230.8 979.2L1237.3 985.6L1241.0 994.1L1246.4 1001.3L1252.4 1008.1L1257.3 1015.8M1257.3 1015.8L1261.3 1026.7M1483.1 1411.1L1478.0 1402.8L1476.2 1394.0L1475.5 1384.9L1474.3 1375.9L1473.5 1366.9L1471.4 1358.1L1467.9 1349.5L1468.0 1340.3L1466.4 1331.4L1464.2 1322.6L1462.3 1313.8L1462.2 1304.6L1462.0 1295.5L1461.9 1286.3L1462.4 1277.0L1462.8 1267.8L1465.7 1258.1L1460.1 1249.9L1456.7 1241.3L1455.7 1232.3L1452.7 1223.7L1450.9 1214.8L1448.6 1206.1L1446.5 1197.3L1444.9 1188.4L1442.6 1179.6L1442.1 1170.5L1441.0 1161.5L1441.4 1152.2L1441.6 1143.0L1439.2 1134.3L1436.6 1125.6L1435.8 1116.5L1434.4 1107.6L1431.5 1098.9L1430.3 1090.0L1427.7 1081.3L1423.5 1072.8L1420.8 1064.1L1419.7 1055.2L1418.0 1046.3L1418.4 1037.0L1413.8 1028.7L1413.3 1019.6L1413.6 1010.3L1414.4 1001.0L1408.4 992.9L1406.6 984.1L1403.5 975.4L1402.8 966.4L1400.1 957.7L1397.5 949.0L1394.5 940.3L1394.9 931.1M1431.6 901.9L1425.7 900.3M1425.7 900.3L1418.8 908.8L1411.9 917.3L1402.5 923.3L1394.9 931.1M1402.8 856.2L1401.5 868.9M1425.7 900.3L1419.9 892.3L1413.2 885.0L1407.2 877.0L1401.5 868.9M1319.8 922.4L1311.1 907.3M1319.8 922.4L1330.1 924.4L1340.5 923.0L1350.8 923.7M1311.1 907.3L1313.8 898.2L1320.2 890.5L1322.7 881.3L1326.2 872.5L1328.2 863.1M1364.2 890.5L1361.6 902.5L1361.6 914.8M1364.2 890.5L1356.9 885.2L1350.2 879.2L1341.2 876.1L1335.1 869.2L1328.5 863.0M1328.2 863.1L1328.5 863.0M1350.8 923.7L1361.6 914.8M1486.0 2681.2L1487.9 2672.0L1488.7 2662.9L1488.1 2653.9L1487.1 2644.9L1488.8 2635.7L1489.0 2626.6L1488.4 2617.6L1488.6 2608.5L1486.8 2599.6L1486.3 2590.5L1483.2 2581.7L1482.5 2572.7L1482.6 2563.6L1480.3 2554.7L1480.3 2545.7L1477.6 2536.8L1477.7 2527.7L1474.4 2518.9L1472.4 2510.0L1472.0 2501.0L1473.5 2491.8L1471.4 2482.9L1469.6 2473.9L1469.0 2464.9L1464.7 2456.2L1463.2 2447.2L1463.8 2438.1L1465.8 2428.9L1466.1 2419.8L1466.5 2410.7L1463.4 2401.9L1463.2 2392.8L1462.4 2383.8L1461.0 2374.9L1461.2 2365.8L1459.3 2356.9L1460.0 2347.8L1461.6 2338.6L1460.4 2329.6L1462.1 2320.4L1460.5 2311.5L1460.1 2302.4L1457.8 2293.5L1458.7 2284.4L1461.1 2275.1L1459.9 2266.2L1460.7 2257.0L1458.9 2248.1L1459.2 2239.0L1460.2 2229.9L1460.6 2220.8L1461.1 2211.7L1461.0 2202.6L1459.6 2193.7L1455.9 2184.9L1454.9 2175.9L1454.0 2166.9L1454.5 2157.8L1451.3 2149.0L1451.0 2139.9L1449.2 2131.0L1446.4 2122.2L1444.7 2113.2L1441.7 2104.4L1440.4 2095.4L1438.5 2086.5L1439.5 2077.4L1437.0 2068.5L1438.2 2059.3L1438.5 2050.2L1435.4 2041.4L1435.5 2032.3L1431.4 2023.6L1430.3 2014.6L1430.6 2005.5L1427.9 1996.6L1425.7 1987.7L1425.5 1978.7L1424.3 1969.7L1424.9 1960.6L1426.8 1951.4L1426.2 1942.4L1425.2 1933.4L1424.3 1924.4L1421.4 1915.6L1419.4 1906.6L1420.3 1897.5L1420.5 1888.4L1419.5 1879.4L1420.7 1870.3L1422.3 1861.1L1422.8 1852.0L1423.7 1842.8L1422.8 1833.9L1421.3 1824.9L1422.9 1815.7L1421.2 1806.8L1421.3 1797.7L1421.0 1788.7L1423.1 1779.4L1423.4 1770.3L1421.1 1761.4L1421.8 1752.3L1420.2 1743.4L1419.4 1734.4L1418.9 1725.4L1417.9 1716.4L1414.5 1707.6L1414.9 1698.5L1411.8 1689.6L1411.3 1680.6L1412.2 1671.5L1411.3 1662.5L1409.3 1653.6L1404.7 1644.9L1403.7 1635.9L1404.7 1626.7L1404.9 1617.6L1404.6 1608.6L1404.5 1599.5L1404.9 1590.4L1407.0 1581.2L1406.7 1572.2L1405.0 1563.2L1405.1 1554.2L1402.9 1545.3L1401.6 1536.3L1402.2 1527.2L1402.3 1518.1L1398.9 1509.3L1398.7 1500.3L1395.8 1491.4L1395.1 1482.4L1394.8 1473.4L1394.8 1464.3L1396.8 1455.1L1396.6 1446.0L1398.3 1436.8L1400.2 1427.6L1400.2 1418.5L1401.1 1409.4L1397.5 1400.6L1396.7 1391.6L1394.8 1382.7L1392.7 1373.8L1392.7 1364.7L1390.0 1355.9L1388.1 1346.9L1389.2 1337.8L1389.2 1328.7L1387.9 1319.8L1385.8 1310.9L1381.6 1302.1L1381.9 1293.0L1379.6 1284.1L1377.3 1275.2L1377.4 1266.2L1375.8 1257.2L1375.8 1248.2L1374.1 1239.2L1372.1 1230.3L1372.9 1221.2L1373.2 1212.1L1371.9 1203.1L1370.9 1194.1L1371.6 1185.0L1370.5 1176.0L1369.6 1167.0L1366.3 1158.2L1366.4 1149.2L1366.0 1140.1L1363.8 1131.2L1361.3 1122.4L1361.7 1113.3L1360.4 1104.3L1361.6 1095.1L1365.0 1085.8L1365.4 1076.7L1362.4 1067.9L1362.1 1058.8L1359.6 1049.9L1358.7 1041.0L1354.7 1032.2L1353.1 1023.3L1352.2 1014.3L1351.3 1005.3L1348.9 996.4L1350.5 987.2L1350.7 978.1L1350.1 969.1L1348.4 960.2L1352.2 950.8L1350.7 941.8L1351.7 932.7L1350.8 923.7M1261.3 1026.7L1267.0 1019.3L1274.6 1013.0L1276.7 1003.7L1280.2 995.1L1284.4 986.9L1287.6 978.2L1291.1 969.6L1297.6 962.7L1303.1 955.2L1305.0 945.7L1309.4 937.7L1314.5 930.0L1319.8 922.4M1401.5 868.9L1391.7 873.5L1383.2 880.2L1373.5 885.0L1364.2 890.5M1394.9 931.1L1387.0 926.3L1378.2 923.1L1370.6 917.6L1361.6 914.8M1339.2 837.3L1335.0 845.6L1332.4 854.6L1328.5 863.0M1198.7 737.9L1193.8 751.1M1198.7 737.9L1205.9 732.1L1213.5 727.1L1222.3 724.0M1193.8 751.1L1203.3 754.5L1211.6 760.1L1219.7 766.0L1227.7 771.9L1236.6 776.4M1222.3 724.0L1227.1 725.4M1227.1 725.4L1231.9 734.2L1234.5 743.8L1237.8 753.1L1240.0 762.9L1242.8 772.4M1242.8 772.4L1236.6 776.4M1202.9 685.3L1207.5 695.1L1213.5 704.2L1217.4 714.3L1222.3 724.0M1173.6 705.7L1174.3 712.1M1174.3 712.1L1181.4 721.7L1188.9 730.9L1198.7 737.9M1257.4 711.0L1247.0 715.1L1236.5 719.1L1227.1 725.4M1243.5 772.4L1242.8 772.4M971.9 634.2L959.9 635.4L947.9 636.7M948.9 677.7L943.5 668.2L937.5 659.0M937.5 659.0L942.0 647.5L947.9 636.7M981.6 586.3L971.2 588.8L961.6 593.0L954.5 601.6L945.0 605.9L936.2 611.3M947.9 636.7L944.9 627.8L940.2 619.7L936.2 611.3M918.1 585.4L919.5 595.7L923.6 605.1M878.6 614.5L890.8 618.7L903.2 622.4M903.2 622.4L912.7 612.9L923.6 605.1M936.2 611.3L923.6 605.1M879.5 658.7L879.6 669.0L878.3 679.1L875.0 688.9L873.6 698.9M879.5 658.7L892.0 657.0L904.0 653.0M904.0 653.0L910.5 657.3M910.5 657.3L908.5 666.5L908.6 676.0L905.4 685.0L903.7 694.2L903.4 703.7M903.4 703.7L890.4 702.3L877.4 702.1M873.6 698.9L877.4 702.1M847.7 697.4L860.7 697.9L873.6 698.9M859.3 646.0L868.4 654.0L879.5 658.7M903.2 622.4L901.7 632.7L903.8 642.8L904.0 653.0M937.5 659.0L928.6 657.2L919.6 656.3L910.5 657.3M916.3 711.8L903.4 703.7M871.4 743.4L871.7 732.9L872.7 722.5L876.1 712.4L877.4 702.1M1134.9 771.0L1140.3 776.8M1134.9 771.0L1134.2 761.9L1135.5 752.8L1136.0 743.7M1140.3 776.8L1151.0 775.2L1161.5 772.6L1171.6 768.8L1182.0 766.0M1136.0 743.7L1147.9 743.4L1158.8 738.6M1158.8 738.6L1167.1 745.4L1175.9 751.7L1184.9 757.6M1184.9 757.6L1182.0 766.0M1093.9 780.0L1104.3 778.3L1114.9 777.5L1124.6 773.2L1134.9 771.0M1146.1 800.5L1143.1 788.7L1140.3 776.8M1132.7 739.5L1136.0 743.7M1190.2 790.5L1186.0 778.3L1182.0 766.0M1174.3 712.1L1169.7 721.3L1163.9 729.7L1158.8 738.6M1193.8 751.1L1184.9 757.6M1198.8 798.4L1208.1 795.2L1218.0 793.2L1225.7 786.9L1233.6 781.0M1233.6 781.0L1236.6 776.4M1233.6 781.0L1232.7 791.2L1234.7 801.0L1237.6 810.6L1239.1 820.4L1241.8 830.1M1285.1 809.4L1280.9 816.7M1280.9 816.7L1271.0 819.8L1261.2 822.9L1251.7 827.3L1241.8 830.1M1196.6 824.9L1206.7 828.0L1216.7 831.5L1227.0 833.6L1237.3 835.8M1237.3 835.8L1241.8 830.1M1290.1 858.6L1289.4 858.1M1290.1 858.6L1289.7 869.7L1289.5 880.8L1286.2 891.6L1284.6 902.5M1289.4 858.1L1279.8 859.7L1270.2 861.0L1261.1 864.7L1251.6 866.6L1242.3 869.0M1267.7 909.4L1276.0 905.5L1284.6 902.5M1267.7 909.4L1260.5 901.5L1252.9 894.2L1244.7 887.4L1236.5 880.7M1236.5 880.7L1242.3 869.0M1328.2 863.1L1318.5 863.3L1308.9 863.3L1299.6 859.8L1290.1 858.6M1280.9 816.7L1283.3 827.0L1284.6 837.5L1286.3 848.0L1289.4 858.1M1311.1 907.3L1297.7 905.8L1284.6 902.5M1237.3 835.8L1241.4 846.5L1241.6 857.8L1242.3 869.0M1257.3 1015.8L1257.2 1006.0L1258.6 996.4L1261.1 986.8L1262.0 977.2L1261.6 967.4L1263.9 957.8L1265.3 948.2L1265.0 938.4L1266.4 928.8L1264.5 918.8L1267.7 909.4M1229.8 883.6L1236.5 880.7" stroke="#000" stroke-opacity="0.07" stroke-width="1" stroke-linejoin="round" fill="none"/>
<polyline points="917,175 907,190 924,205 931,202 927,230 912,257 899,283 902,311 892.8,327.8 883.3,335.9 878,341.3 890,344 900,359 890,370 870,381 875,397 861,412 852,413 844,436 824,466 832,474 827,478 817,504 821,533 815,540 806,558 815,569 813,582 805,595" fill="none" stroke="#5a5a5a" stroke-width="1.3" stroke-linejoin="round"/>
<polyline points="407,683 427,683 428,688 425,692 414,695 410,702 416,713 426,699 440,698 453,693 466,700 472,696 477,675 483,672 486,678 504,671 513,672 517,678 532,673 548,664 571,663 572,658 574,665 587,658 599,663 616,671 630,662 631,655 652,661 663,660 662,669 651,679 636,696 645,702 652,697 664,699 666,709 671,713 692,701 692,686 695,671 703,662 720,669 736,671 740,678 746,665 747,657 737,651 740,642 757,603 780,582 793,598 803,590 805,595 807,597 811,607 815,618 823,614 826,626 822,638 828,643 844,641 846,633 857,632 860,642 869,638 865,649 867,657 885,664 888,655 900,648 902,661 913,672 896,692 895,702 907,702 919,714 937,700 940,695 962,698 960,713 962,723 987,713 994,723 995,742 986,750 990,762 989,770 993,775 990,782 981,784 992,796 986,803 990,813 988,819 992,831 1004,846 1017,839 1023,838 1030,829 1037,826 1040,827 1064,840 1072,838 1089,847 1093,834 1124,821 1137,815 1153,819 1163,814 1185,819 1208,817 1208,800 1187,790 1187,776 1183,769 1183,765 1220,763 1224,769 1223,777 1234,787 1242,785 1249,791 1252,795 1272,798 1276,807 1277,819 1284,837 1282,854 1283,877 1303,901 1319,920 1329,916 1330,930 1346,930 1349,937 1344,943 1360,953 1362,967" fill="none" stroke="#5a5a5a" stroke-width="1.3" stroke-linejoin="round"/>
<polygon points="750.2,329.2 774.4,317 796,310.3 805.4,296.9 816.1,305 832.3,299 844.4,310.3 863.2,319.7 878,341.3 883.3,335.9 892.8,327.8 902,311 924,310 936,313 951,307 963,283 980,281 991,294 1007,303 1008,324 1018,326 1024,321 1036,330 1040,344 1044,357 1056,370 1072,374 1073,380 1077,395 1083,403 1091,420 1093,429 1104,428 1113,416 1118,418 1127,430 1139,437 1127,465 1139,475 1153,478 1159,490 1158,498 1148,499 1132,497 1126,508 1140,523 1149,547 1153,553 1131,557 1126,570 1125,595 1113,614 1136,617 1131,629 1124,648 1110,649 1101,646 1093,642 1100,659 1096,682 1088,682 1086,677 1078,677 1069,702 1077,724 1052,725 1044,715 1040,712 1034,708 1013,722 1011,738 995,742 986,750 990,762 989,770 993,775 990,782 973,783 968,775 945,779 942,771 936,769 919,778 910,768 907,767 904,773 888,775 880,778 876,767 871,758 865,755 863,743 842,737 844,731 840,722 828,720 820,715 801,730 800,739 792,737 787,748 769,739 764,741 752,733 751,725 742,722 741,709 728,694 720,687 714,667 704,664 720,642 719,630 708,637 703,635 707,614 705,597 681,603 675,599 683,597 686,591 681,589 677,582 692,571 688,544 669,552 663,547 646,545 651,535 664.2,530 666.9,520 675,503.9 658.8,482.4 650.8,482.4 650.8,462.3 666.9,451.5 675,454.2 684.4,442.1 695.1,430 680.3,424.6 683,417.9 689.7,404.4 700.5,399 712.6,394.2 719.3,395 720.7,403.1 726,405.8 730,401.8 740.8,389.7 747.6,388.3 757,391 763.7,378.9 764.2,358.7 759.7,348 759.7,338.6" fill="none" stroke="#ff0000" stroke-width="2.2" stroke-linejoin="round"/>
<polygon points="878.4,515.7 881.5,516.5 889,517.1 895.6,518.2 901.4,519.9 906.3,520.7 911.3,518.9 917.9,516.1 922.9,514.7 928,513.5 928.7,518.2 930.7,521.9 931.3,524.8 930.3,529.8 928.2,535.7 921.2,536.4 912.9,538.2 908,542.2 904.3,546.3 903.8,552.9 896,552.9 896,546.7 891.4,542.2 885.6,537.2 881.1,532.3 878.6,526.5 878.4,520.7" fill="none" stroke="#0000ff" stroke-width="2.1" stroke-linejoin="round"/>
<g fill="#c776c8" fill-opacity="0.95" stroke="#ffffff" stroke-opacity="0.35" stroke-width="1"><circle cx="1275" cy="339" r="76"/><circle cx="1245" cy="413" r="39"/><circle cx="1171" cy="969" r="36"/><circle cx="706" cy="483" r="35"/><circle cx="415" cy="928" r="28.7"/><circle cx="1307" cy="355" r="26"/><circle cx="494" cy="275" r="25"/><circle cx="580" cy="800" r="24.7"/><circle cx="1307" cy="385" r="24.3"/><circle cx="419" cy="285" r="24"/><circle cx="1249" cy="321" r="24"/><circle cx="1290" cy="412" r="22.8"/><circle cx="1500" cy="349" r="22.4"/><circle cx="1234" cy="360" r="21"/><circle cx="1383" cy="358" r="20.7"/><circle cx="471" cy="399" r="20.7"/><circle cx="541" cy="564" r="20.7"/><circle cx="1209" cy="327" r="20.6"/><circle cx="1207" cy="408" r="19"/><circle cx="946" cy="587" r="18.7"/><circle cx="412" cy="260" r="18.6"/><circle cx="590" cy="413" r="18.6"/><circle cx="422" cy="622" r="18.6"/><circle cx="692" cy="165" r="17"/><circle cx="1240" cy="472" r="16.8"/><circle cx="420" cy="215" r="16.5"/><circle cx="612" cy="295" r="16.5"/><circle cx="688" cy="342" r="16.5"/><circle cx="397" cy="296" r="16.5"/><circle cx="839" cy="760" r="16.5"/><circle cx="1334" cy="349" r="15.2"/><circle cx="843" cy="205" r="14.9"/><circle cx="563" cy="264" r="14.5"/><circle cx="1165" cy="328" r="14.5"/><circle cx="1303" cy="460" r="14.5"/><circle cx="1346" cy="456" r="14.5"/><circle cx="1491" cy="440" r="14.5"/><circle cx="1481" cy="642" r="14.5"/><circle cx="1287" cy="280" r="13"/><circle cx="420" cy="348" r="12.5"/><circle cx="1343" cy="232" r="12.5"/><circle cx="1360" cy="391" r="12.5"/><circle cx="440" cy="487" r="12.5"/><circle cx="894" cy="438" r="12.5"/><circle cx="1284" cy="465" r="12.5"/><circle cx="1642" cy="386" r="12.5"/><circle cx="675" cy="633" r="12.5"/><circle cx="1234" cy="648" r="12.5"/><circle cx="1032" cy="395" r="12"/><circle cx="1225" cy="290" r="10.9"/><circle cx="1324" cy="308" r="10.9"/><circle cx="903" cy="562" r="10.7"/><circle cx="666" cy="282" r="10.5"/><circle cx="1282" cy="255" r="10.5"/><circle cx="1615" cy="226" r="10.5"/><circle cx="1383" cy="300" r="10.5"/><circle cx="1460" cy="305" r="10.5"/><circle cx="775" cy="444" r="10.5"/><circle cx="1099" cy="390" r="10.5"/><circle cx="1111" cy="478" r="10.5"/><circle cx="1175" cy="397" r="10.5"/><circle cx="1434" cy="381" r="10.5"/><circle cx="1386" cy="411" r="10.5"/><circle cx="1429" cy="432" r="10.5"/><circle cx="1600" cy="439" r="10.5"/><circle cx="570" cy="698" r="10.5"/><circle cx="726" cy="578" r="10.5"/><circle cx="458" cy="804" r="10.5"/><circle cx="654" cy="956" r="10.5"/><circle cx="1277" cy="778" r="10.5"/><circle cx="1212" cy="851" r="10.5"/><circle cx="1100" cy="941" r="10.5"/><circle cx="1628" cy="780" r="10.5"/><circle cx="1355" cy="310" r="10.2"/><circle cx="578" cy="173" r="10"/><circle cx="445" cy="169" r="10"/><circle cx="1250" cy="282" r="9.8"/><circle cx="1311" cy="283" r="9.1"/><circle cx="496" cy="185" r="8.7"/><circle cx="447" cy="240" r="8.7"/><circle cx="578" cy="332" r="8.7"/><circle cx="1005" cy="203" r="8.7"/><circle cx="787" cy="346" r="8.7"/><circle cx="1169" cy="178" r="8.7"/><circle cx="1180" cy="227" r="8.7"/><circle cx="1093" cy="283" r="8.7"/><circle cx="1335" cy="391" r="8.7"/><circle cx="523" cy="475" r="8.7"/><circle cx="718" cy="423" r="8.7"/><circle cx="819" cy="441" r="8.7"/><circle cx="990" cy="444" r="8.7"/><circle cx="797" cy="505" r="8.7"/><circle cx="846" cy="506" r="8.7"/><circle cx="1202" cy="473" r="8.7"/><circle cx="1077" cy="512" r="8.7"/><circle cx="1270" cy="523" r="8.7"/><circle cx="1322" cy="529" r="8.7"/><circle cx="1494" cy="394" r="8.7"/><circle cx="1530" cy="405" r="8.7"/><circle cx="1390" cy="464" r="8.7"/><circle cx="1387" cy="492" r="8.7"/><circle cx="510" cy="731" r="8.7"/><circle cx="1517" cy="633" r="8.7"/><circle cx="1364" cy="726" r="8.7"/><circle cx="705" cy="857" r="8.7"/><circle cx="603" cy="886" r="8.7"/><circle cx="1453" cy="176" r="8.5"/><circle cx="1657" cy="195" r="8"/><circle cx="904" cy="530" r="7.5"/><circle cx="1404" cy="176" r="7"/><circle cx="485" cy="348" r="6.6"/><circle cx="1006" cy="286" r="6.6"/><circle cx="838" cy="344" r="6.6"/><circle cx="734" cy="350" r="6.6"/><circle cx="1116" cy="217" r="6.6"/><circle cx="1242" cy="198" r="6.6"/><circle cx="1310" cy="192" r="6.6"/><circle cx="1269" cy="228" r="6.6"/><circle cx="1229" cy="236" r="6.6"/><circle cx="1203" cy="264" r="6.6"/><circle cx="1146" cy="282" r="6.6"/><circle cx="1188" cy="291" r="6.6"/><circle cx="1045" cy="291" r="6.6"/><circle cx="1081" cy="350" r="6.6"/><circle cx="1132" cy="348" r="6.6"/><circle cx="1406" cy="246" r="6.6"/><circle cx="1544" cy="243" r="6.6"/><circle cx="1412" cy="286" r="6.6"/><circle cx="1523" cy="280" r="6.6"/><circle cx="1491" cy="293" r="6.6"/><circle cx="1530" cy="306" r="6.6"/><circle cx="1424" cy="322" r="6.6"/><circle cx="1666" cy="343" r="6.6"/><circle cx="633" cy="399" r="6.6"/><circle cx="675" cy="531" r="6.6"/><circle cx="718" cy="526" r="6.6"/><circle cx="862" cy="452" r="6.6"/><circle cx="939" cy="463" r="6.6"/><circle cx="751" cy="489" r="6.6"/><circle cx="925" cy="502" r="6.6"/><circle cx="953" cy="527" r="6.6"/><circle cx="863" cy="544" r="6.6"/><circle cx="1133" cy="414" r="6.6"/><circle cx="1114" cy="441" r="6.6"/><circle cx="1073" cy="454" r="6.6"/><circle cx="1180" cy="486" r="6.6"/><circle cx="1161" cy="516" r="6.6"/><circle cx="1207" cy="534" r="6.6"/><circle cx="1599" cy="390" r="6.6"/><circle cx="1556" cy="437" r="6.6"/><circle cx="1633" cy="435" r="6.6"/><circle cx="1439" cy="531" r="6.6"/><circle cx="1375" cy="551" r="6.6"/><circle cx="610" cy="619" r="6.6"/><circle cx="599" cy="648" r="6.6"/><circle cx="623" cy="691" r="6.6"/><circle cx="599" cy="758" r="6.6"/><circle cx="633" cy="752" r="6.6"/><circle cx="792" cy="574" r="6.6"/><circle cx="966" cy="654" r="6.6"/><circle cx="774" cy="705" r="6.6"/><circle cx="998" cy="756" r="6.6"/><circle cx="1190" cy="606" r="6.6"/><circle cx="1076" cy="639" r="6.6"/><circle cx="1182" cy="662" r="6.6"/><circle cx="1217" cy="750" r="6.6"/><circle cx="1579" cy="573" r="6.6"/><circle cx="1477" cy="586" r="6.6"/><circle cx="1369" cy="626" r="6.6"/><circle cx="1506" cy="672" r="6.6"/><circle cx="606" cy="820" r="6.6"/><circle cx="670" cy="783" r="6.6"/><circle cx="831" cy="944" r="6.6"/><circle cx="1031" cy="957" r="6.6"/><circle cx="1223" cy="810" r="6.6"/><circle cx="1305" cy="835" r="6.6"/><circle cx="1074" cy="881" r="6.6"/><circle cx="1155" cy="903" r="6.6"/><circle cx="1201" cy="907" r="6.6"/><circle cx="1198" cy="369" r="5"/><circle cx="1646" cy="268" r="5"/><circle cx="1669" cy="626" r="5"/><circle cx="483" cy="228" r="4.5"/><circle cx="776" cy="282" r="4.5"/><circle cx="951" cy="256" r="4.5"/><circle cx="974" cy="315" r="4.5"/><circle cx="1062" cy="215" r="4.5"/><circle cx="1370" cy="189" r="4.5"/><circle cx="1438" cy="219" r="4.5"/><circle cx="1573" cy="213" r="4.5"/><circle cx="1465" cy="245" r="4.5"/><circle cx="1501" cy="254" r="4.5"/><circle cx="1577" cy="248" r="4.5"/><circle cx="1571" cy="289" r="4.5"/><circle cx="1529" cy="329" r="4.5"/><circle cx="1608" cy="328" r="4.5"/><circle cx="1441" cy="351" r="4.5"/><circle cx="541" cy="511" r="4.5"/><circle cx="655" cy="508" r="4.5"/><circle cx="634" cy="531" r="4.5"/><circle cx="727" cy="380" r="4.5"/><circle cx="828" cy="393" r="4.5"/><circle cx="752" cy="409" r="4.5"/><circle cx="926" cy="432" r="4.5"/><circle cx="1031" cy="459" r="4.5"/><circle cx="1031" cy="500" r="4.5"/><circle cx="751" cy="537" r="4.5"/><circle cx="782" cy="544" r="4.5"/><circle cx="1003" cy="542" r="4.5"/><circle cx="1150" cy="383" r="4.5"/><circle cx="1073" cy="434" r="4.5"/><circle cx="1159" cy="451" r="4.5"/><circle cx="1130" cy="534" r="4.5"/><circle cx="1234" cy="558" r="4.5"/><circle cx="1467" cy="390" r="4.5"/><circle cx="1570" cy="394" r="4.5"/><circle cx="1652" cy="427" r="4.5"/><circle cx="1545" cy="485" r="4.5"/><circle cx="1415" cy="503" r="4.5"/><circle cx="1494" cy="532" r="4.5"/><circle cx="671" cy="576" r="4.5"/><circle cx="628" cy="717" r="4.5"/><circle cx="1017" cy="590" r="4.5"/><circle cx="738" cy="625" r="4.5"/><circle cx="962" cy="616" r="4.5"/><circle cx="804" cy="637" r="4.5"/><circle cx="894" cy="678" r="4.5"/><circle cx="821" cy="692" r="4.5"/><circle cx="1008" cy="710" r="4.5"/><circle cx="891" cy="728" r="4.5"/><circle cx="934" cy="736" r="4.5"/><circle cx="1024" cy="746" r="4.5"/><circle cx="1103" cy="575" r="4.5"/><circle cx="1307" cy="578" r="4.5"/><circle cx="1064" cy="595" r="4.5"/><circle cx="1262" cy="603" r="4.5"/><circle cx="1118" cy="672" r="4.5"/><circle cx="1167" cy="681" r="4.5"/><circle cx="1268" cy="684" r="4.5"/><circle cx="1342" cy="681" r="4.5"/><circle cx="1231" cy="699" r="4.5"/><circle cx="1197" cy="716" r="4.5"/><circle cx="1153" cy="721" r="4.5"/><circle cx="1177" cy="735" r="4.5"/><circle cx="1330" cy="751" r="4.5"/><circle cx="1419" cy="594" r="4.5"/><circle cx="1535" cy="614" r="4.5"/><circle cx="1541" cy="680" r="4.5"/><circle cx="1465" cy="711" r="4.5"/><circle cx="1597" cy="710" r="4.5"/><circle cx="722" cy="794" r="4.5"/><circle cx="421" cy="853" r="4.5"/><circle cx="614" cy="850" r="4.5"/><circle cx="590" cy="926" r="4.5"/><circle cx="515" cy="950" r="4.5"/><circle cx="793" cy="786" r="4.5"/><circle cx="891" cy="804" r="4.5"/><circle cx="842" cy="837" r="4.5"/><circle cx="782" cy="857" r="4.5"/><circle cx="908" cy="865" r="4.5"/><circle cx="966" cy="943" r="4.5"/><circle cx="1204" cy="772" r="4.5"/><circle cx="1119" cy="796" r="4.5"/><circle cx="1253" cy="805" r="4.5"/><circle cx="1178" cy="868" r="4.5"/><circle cx="1129" cy="894" r="4.5"/><circle cx="1241" cy="919" r="4.5"/><circle cx="1465" cy="771" r="4.5"/><circle cx="1568" cy="775" r="4.5"/><circle cx="1515" cy="802" r="4.5"/><circle cx="1662" cy="838" r="4.5"/><circle cx="1365" cy="860" r="4.5"/><circle cx="1449" cy="932" r="4.5"/><circle cx="1559" cy="937" r="4.5"/><circle cx="931" cy="179" r="3"/><circle cx="966" cy="217" r="3"/><circle cx="1011" cy="243" r="3"/><circle cx="1031" cy="176" r="3"/><circle cx="1534" cy="178" r="3"/><circle cx="573" cy="967" r="3"/><circle cx="926" cy="291" r="2.8"/><circle cx="904" cy="352" r="2.8"/><circle cx="989" cy="353" r="2.8"/><circle cx="1502" cy="207" r="2.8"/><circle cx="1606" cy="276" r="2.8"/><circle cx="1562" cy="342" r="2.8"/><circle cx="576" cy="500" r="2.8"/><circle cx="630" cy="482" r="2.8"/><circle cx="419" cy="542" r="2.8"/><circle cx="651" cy="558" r="2.8"/><circle cx="696" cy="555" r="2.8"/><circle cx="939" cy="375" r="2.8"/><circle cx="990" cy="502" r="2.8"/><circle cx="770" cy="533" r="2.8"/><circle cx="804" cy="541" r="2.8"/><circle cx="821" cy="553" r="2.8"/><circle cx="1551" cy="405" r="2.8"/><circle cx="1458" cy="485" r="2.8"/><circle cx="1492" cy="480" r="2.8"/><circle cx="1590" cy="473" r="2.8"/><circle cx="1633" cy="498" r="2.8"/><circle cx="1580" cy="526" r="2.8"/><circle cx="1458" cy="552" r="2.8"/><circle cx="1526" cy="547" r="2.8"/><circle cx="412" cy="590" r="2.8"/><circle cx="631" cy="574" r="2.8"/><circle cx="607" cy="591" r="2.8"/><circle cx="692" cy="586" r="2.8"/><circle cx="553" cy="650" r="2.8"/><circle cx="451" cy="680" r="2.8"/><circle cx="669" cy="687" r="2.8"/><circle cx="707" cy="678" r="2.8"/><circle cx="713" cy="707" r="2.8"/><circle cx="655" cy="717" r="2.8"/><circle cx="446" cy="723" r="2.8"/><circle cx="682" cy="747" r="2.8"/><circle cx="848" cy="577" r="2.8"/><circle cx="870" cy="595" r="2.8"/><circle cx="895" cy="601" r="2.8"/><circle cx="771" cy="619" r="2.8"/><circle cx="847" cy="622" r="2.8"/><circle cx="992" cy="629" r="2.8"/><circle cx="1023" cy="636" r="2.8"/><circle cx="884" cy="635" r="2.8"/><circle cx="923" cy="634" r="2.8"/><circle cx="756" cy="659" r="2.8"/><circle cx="860" cy="673" r="2.8"/><circle cx="920" cy="682" r="2.8"/><circle cx="1012" cy="670" r="2.8"/><circle cx="738" cy="685" r="2.8"/><circle cx="857" cy="723" r="2.8"/><circle cx="970" cy="750" r="2.8"/><circle cx="890" cy="760" r="2.8"/><circle cx="724" cy="758" r="2.8"/><circle cx="1154" cy="573" r="2.8"/><circle cx="1325" cy="603" r="2.8"/><circle cx="1110" cy="631" r="2.8"/><circle cx="1049" cy="645" r="2.8"/><circle cx="1141" cy="652" r="2.8"/><circle cx="1304" cy="650" r="2.8"/><circle cx="1084" cy="665" r="2.8"/><circle cx="1051" cy="668" r="2.8"/><circle cx="1302" cy="698" r="2.8"/><circle cx="1056" cy="705" r="2.8"/><circle cx="1132" cy="712" r="2.8"/><circle cx="1289" cy="732" r="2.8"/><circle cx="1059" cy="739" r="2.8"/><circle cx="1250" cy="739" r="2.8"/><circle cx="1110" cy="755" r="2.8"/><circle cx="1161" cy="757" r="2.8"/><circle cx="1649" cy="578" r="2.8"/><circle cx="1616" cy="607" r="2.8"/><circle cx="1647" cy="607" r="2.8"/><circle cx="1577" cy="650" r="2.8"/><circle cx="1427" cy="660" r="2.8"/><circle cx="1388" cy="670" r="2.8"/><circle cx="1649" cy="681" r="2.8"/><circle cx="1435" cy="696" r="2.8"/><circle cx="1407" cy="716" r="2.8"/><circle cx="1525" cy="732" r="2.8"/><circle cx="1557" cy="732" r="2.8"/><circle cx="1615" cy="748" r="2.8"/><circle cx="522" cy="854" r="2.8"/><circle cx="542" cy="865" r="2.8"/><circle cx="560" cy="879" r="2.8"/><circle cx="658" cy="895" r="2.8"/><circle cx="696" cy="905" r="2.8"/><circle cx="511" cy="912" r="2.8"/><circle cx="544" cy="917" r="2.8"/><circle cx="666" cy="928" r="2.8"/><circle cx="838" cy="801" r="2.8"/><circle cx="966" cy="798" r="2.8"/><circle cx="1008" cy="791" r="2.8"/><circle cx="769" cy="822" r="2.8"/><circle cx="1018" cy="822" r="2.8"/><circle cx="953" cy="848" r="2.8"/><circle cx="998" cy="850" r="2.8"/><circle cx="804" cy="857" r="2.8"/><circle cx="876" cy="869" r="2.8"/><circle cx="963" cy="877" r="2.8"/><circle cx="808" cy="899" r="2.8"/><circle cx="1006" cy="898" r="2.8"/><circle cx="897" cy="912" r="2.8"/><circle cx="980" cy="911" r="2.8"/><circle cx="753" cy="928" r="2.8"/><circle cx="914" cy="945" r="2.8"/><circle cx="987" cy="948" r="2.8"/><circle cx="1065" cy="773" r="2.8"/><circle cx="1056" cy="798" r="2.8"/><circle cx="1173" cy="806" r="2.8"/><circle cx="1339" cy="803" r="2.8"/><circle cx="1076" cy="820" r="2.8"/><circle cx="1153" cy="837" r="2.8"/><circle cx="1266" cy="843" r="2.8"/><circle cx="1041" cy="851" r="2.8"/><circle cx="1116" cy="862" r="2.8"/><circle cx="1275" cy="882" r="2.8"/><circle cx="1335" cy="899" r="2.8"/><circle cx="1042" cy="913" r="2.8"/><circle cx="1333" cy="947" r="2.8"/><circle cx="1407" cy="776" r="2.8"/><circle cx="1373" cy="792" r="2.8"/><circle cx="1426" cy="826" r="2.8"/><circle cx="1574" cy="834" r="2.8"/><circle cx="1439" cy="868" r="2.8"/><circle cx="1493" cy="862" r="2.8"/><circle cx="1545" cy="871" r="2.8"/><circle cx="1391" cy="905" r="2.8"/><circle cx="1610" cy="920" r="2.8"/><circle cx="1421" cy="935" r="2.8"/><circle cx="1372" cy="944" r="2.8"/><circle cx="544" cy="240" r="2.5"/><circle cx="608" cy="207" r="2.5"/><circle cx="717" cy="273" r="1.2"/><circle cx="875" cy="360" r="1.2"/><circle cx="862" cy="277" r="1.2"/><circle cx="954" cy="202" r="1.2"/><circle cx="485" cy="663" r="1"/><circle cx="683" cy="721" r="1"/><circle cx="823" cy="590" r="1"/><circle cx="770" cy="651" r="1"/><circle cx="969" cy="699" r="1"/><circle cx="727" cy="734" r="1"/><circle cx="763" cy="763" r="1"/><circle cx="1129" cy="593" r="1"/><circle cx="742" cy="773" r="1"/><circle cx="752" cy="806" r="1"/><circle cx="924" cy="806" r="1"/><circle cx="920" cy="837" r="1"/><circle cx="833" cy="872" r="1"/><circle cx="936" cy="890" r="1"/><circle cx="847" cy="894" r="1"/><circle cx="1168" cy="784" r="1"/><circle cx="1113" cy="838" r="1"/><circle cx="1292" cy="924" r="1"/><circle cx="1299" cy="885" r="1"/><circle cx="1618" cy="851" r="1"/><circle cx="1645" cy="895" r="1"/></g>
<circle cx="904" cy="530.2" r="7.6" fill="none" stroke="#ff0000" stroke-width="1.9"/>
<g fill="none" stroke="#505050" stroke-width="1"><circle cx="612" cy="295" r="2.6"/><circle cx="688" cy="342" r="2.6"/><circle cx="706" cy="483" r="2.6"/><circle cx="541" cy="564" r="2.6"/><circle cx="1032" cy="395" r="2.6"/><circle cx="946" cy="587" r="2.6"/><circle cx="839" cy="760" r="2.6"/><circle cx="620" cy="790" r="2.6"/><circle cx="594" cy="805" r="2.6"/><circle cx="415" cy="928" r="2.6"/><circle cx="668" cy="951" r="2.6"/><circle cx="1234" cy="648" r="2.6"/><circle cx="1277" cy="778" r="2.6"/><circle cx="1481" cy="642" r="2.6"/><circle cx="1491" cy="440" r="2.6"/><circle cx="1642" cy="386" r="2.6"/><circle cx="1500" cy="349" r="2.6"/><circle cx="1383" cy="358" r="2.6"/><circle cx="1355" cy="310" r="2.6"/><circle cx="1615" cy="226" r="2.6"/><circle cx="1249" cy="320" r="2.6"/><circle cx="1276" cy="341.6" r="2.6"/><circle cx="1307" cy="353" r="2.6"/><circle cx="1207" cy="408" r="2.6"/><circle cx="1246" cy="413" r="2.6"/><circle cx="1240" cy="472" r="2.6"/></g>
<filter id="hb" x="-20%" y="-50%" width="140%" height="200%"><feGaussianBlur stdDeviation="0.9"/></filter>
<g font-family="Liberation Sans" font-size="12.2" text-anchor="middle"><g fill="#fff" stroke="#fff" stroke-width="3.2" stroke-linejoin="round" opacity="0.75" filter="url(#hb)"><text x="612" y="275.2">Beaufort-</text><text x="612" y="286.7">en-Anjou</text></g><g fill="#333"><text x="612" y="275.2">Beaufort-</text><text x="612" y="286.7">en-Anjou</text></g><g fill="#fff" stroke="#fff" stroke-width="3.2" stroke-linejoin="round" opacity="0.75" filter="url(#hb)"><text x="688" y="321.2">Longué-</text><text x="688" y="332.7">Jumelles</text></g><g fill="#333"><text x="688" y="321.2">Longué-</text><text x="688" y="332.7">Jumelles</text></g><g fill="#fff" stroke="#fff" stroke-width="3.2" stroke-linejoin="round" opacity="0.75" filter="url(#hb)"><text x="706" y="473.2">Saumur</text></g><g fill="#333"><text x="706" y="473.2">Saumur</text></g><g fill="#fff" stroke="#fff" stroke-width="3.2" stroke-linejoin="round" opacity="0.75" filter="url(#hb)"><text x="541" y="555.2">Doué-en-Anjou</text></g><g fill="#333"><text x="541" y="555.2">Doué-en-Anjou</text></g><g fill="#fff" stroke="#fff" stroke-width="3.2" stroke-linejoin="round" opacity="0.75" filter="url(#hb)"><text x="1032" y="384.2">Langeais</text></g><g fill="#333"><text x="1032" y="384.2">Langeais</text></g><g fill="#fff" stroke="#fff" stroke-width="3.2" stroke-linejoin="round" opacity="0.75" filter="url(#hb)"><text x="946" y="577.2">Chinon</text></g><g fill="#333"><text x="946" y="577.2">Chinon</text></g><g fill="#fff" stroke="#fff" stroke-width="3.2" stroke-linejoin="round" opacity="0.75" filter="url(#hb)"><text x="839" y="750.2">Loudun</text></g><g fill="#333"><text x="839" y="750.2">Loudun</text></g><g fill="#fff" stroke="#fff" stroke-width="3.2" stroke-linejoin="round" opacity="0.75" filter="url(#hb)"><text x="620" y="780.2">Thouars</text></g><g fill="#333"><text x="620" y="780.2">Thouars</text></g><g fill="#fff" stroke="#fff" stroke-width="3.2" stroke-linejoin="round" opacity="0.75" filter="url(#hb)"><text x="424" y="917.2">ssuire</text></g><g fill="#333"><text x="424" y="917.2">ssuire</text></g><g fill="#fff" stroke="#fff" stroke-width="3.2" stroke-linejoin="round" opacity="0.75" filter="url(#hb)"><text x="668" y="941.2">Airvault</text></g><g fill="#333"><text x="668" y="941.2">Airvault</text></g><g fill="#fff" stroke="#fff" stroke-width="3.2" stroke-linejoin="round" opacity="0.75" filter="url(#hb)"><text x="1234" y="627.2">Sainte-Maure-</text><text x="1234" y="638.7">de-Touraine</text></g><g fill="#333"><text x="1234" y="627.2">Sainte-Maure-</text><text x="1234" y="638.7">de-Touraine</text></g><g fill="#fff" stroke="#fff" stroke-width="3.2" stroke-linejoin="round" opacity="0.75" filter="url(#hb)"><text x="1277" y="767.2">Descartes</text></g><g fill="#333"><text x="1277" y="767.2">Descartes</text></g><g fill="#fff" stroke="#fff" stroke-width="3.2" stroke-linejoin="round" opacity="0.75" filter="url(#hb)"><text x="1481" y="632.2">Loches</text></g><g fill="#333"><text x="1481" y="632.2">Loches</text></g><g fill="#fff" stroke="#fff" stroke-width="3.2" stroke-linejoin="round" opacity="0.75" filter="url(#hb)"><text x="1491" y="430.2">Bléré</text></g><g fill="#333"><text x="1491" y="430.2">Bléré</text></g><g fill="#fff" stroke="#fff" stroke-width="3.2" stroke-linejoin="round" opacity="0.75" filter="url(#hb)"><text x="1623" y="376.2">Montrichard Val d</text></g><g fill="#333"><text x="1623" y="376.2">Montrichard Val d</text></g><g fill="#fff" stroke="#fff" stroke-width="3.2" stroke-linejoin="round" opacity="0.75" filter="url(#hb)"><text x="1500" y="339.2">Amboise</text></g><g fill="#333"><text x="1500" y="339.2">Amboise</text></g><g fill="#fff" stroke="#fff" stroke-width="3.2" stroke-linejoin="round" opacity="0.75" filter="url(#hb)"><text x="1383" y="337.2">Montlouis-</text><text x="1383" y="348.7">sur-Loire</text></g><g fill="#333"><text x="1383" y="337.2">Montlouis-</text><text x="1383" y="348.7">sur-Loire</text></g><g fill="#fff" stroke="#fff" stroke-width="3.2" stroke-linejoin="round" opacity="0.75" filter="url(#hb)"><text x="1355" y="300.2">Vouvray</text></g><g fill="#333"><text x="1355" y="300.2">Vouvray</text></g><g fill="#fff" stroke="#fff" stroke-width="3.2" stroke-linejoin="round" opacity="0.75" filter="url(#hb)"><text x="1615" y="204.2">Veuzain-</text><text x="1615" y="215.7">sur-Loire</text></g><g fill="#333"><text x="1615" y="204.2">Veuzain-</text><text x="1615" y="215.7">sur-Loire</text></g><g fill="#fff" stroke="#fff" stroke-width="3.2" stroke-linejoin="round" opacity="0.75" filter="url(#hb)"><text x="1249" y="299.2">Saint-Cyr-</text><text x="1249" y="310.7">sur-Loire</text></g><g fill="#333"><text x="1249" y="299.2">Saint-Cyr-</text><text x="1249" y="310.7">sur-Loire</text></g><g fill="#fff" stroke="#fff" stroke-width="3.2" stroke-linejoin="round" opacity="0.75" filter="url(#hb)"><text x="1306" y="331.2">Saint-Pierre-</text><text x="1306" y="342.7">des-Corps</text></g><g fill="#333"><text x="1306" y="331.2">Saint-Pierre-</text><text x="1306" y="342.7">des-Corps</text></g><g fill="#fff" stroke="#fff" stroke-width="3.2" stroke-linejoin="round" opacity="0.75" filter="url(#hb)"><text x="1277" y="331.2">Tours</text></g><g fill="#333"><text x="1277" y="331.2">Tours</text></g><g fill="#fff" stroke="#fff" stroke-width="3.2" stroke-linejoin="round" opacity="0.75" filter="url(#hb)"><text x="1207" y="397.2">Ballan-Miré</text></g><g fill="#333"><text x="1207" y="397.2">Ballan-Miré</text></g><g fill="#fff" stroke="#fff" stroke-width="3.2" stroke-linejoin="round" opacity="0.75" filter="url(#hb)"><text x="1246" y="403.2">Joué-lès-Tours</text></g><g fill="#333"><text x="1246" y="403.2">Joué-lès-Tours</text></g><g fill="#fff" stroke="#fff" stroke-width="3.2" stroke-linejoin="round" opacity="0.75" filter="url(#hb)"><text x="1239" y="461.2">Monts</text></g><g fill="#333"><text x="1239" y="461.2">Monts</text></g></g>
</g></svg>
<div class="a" style="left:407px;top:174px;width:1513px;height:1px;background:#dedede"></div>

<!-- map controls -->
<div class="mc" style="top:180px"></div>
<div class="mc" style="top:209px"></div>
<div class="mc" style="top:238px"></div>
<div class="mc" style="top:267px"></div>
<svg class="a" style="left:1641px;top:180px" width="25" height="112">
<g stroke="#666" stroke-width="2.2" fill="none">
<path d="M6 13H19M12.5 6.5V19.5"/>
<path d="M6 42H19"/>
<circle cx="11" cy="69" r="4.6"/><path d="M14.3 72.3L18.5 76.5" stroke-width="2.6"/>
<path d="M6 98V93H11M14 93H19V98M19 101V106H14M11 106H6V101" stroke-width="2.4"/>
</g></svg>

<!-- attribution -->
<div class="a" style="left:1401px;top:952px;width:268px;height:15px;background:rgba(238,238,238,0.85)"></div>
<div class="a" style="left:1403px;top:954.5px;font-size:10px;line-height:10px;color:#333">© CGET 2018 - <span style="text-decoration:underline">IGN Admin Express</span></div>
<div class="a" style="left:1568.5px;top:954.5px;font-size:9.7px;line-height:10px;color:#333">10km</div>
<div class="a" style="left:1595px;top:956px;width:70px;height:5px;border:1.3px solid #777;border-top:none"></div>

<!-- cursor -->
<svg class="a" style="left:1118px;top:841px" width="16" height="22"><path d="M1.5 1.5L1.5 16.5L5 13.2L7.8 19.5L10.2 18.5L7.5 12.3L12.3 12.3Z" fill="#fff" stroke="#111" stroke-width="1.1" stroke-linejoin="round"/></svg>

<!-- RIGHT PANEL -->
<div class="a" style="left:1670px;top:175px;width:250px;height:792px;background:#f4f4f4"></div>
<div class="a" style="left:1675px;top:180px;width:241px;height:135px;background:#e8e8e8;border:1.5px solid #93b5ea"></div>
<div class="a" style="left:1676px;top:181px;width:239px;height:23px;background:#f21010"></div>
<div class="a t14" style="left:1682px;top:183px;color:#fff">Ma sélection</div>
<svg class="a" style="left:1897px;top:186px" width="12" height="11"><path d="M1.5 1.5L10.5 9.5M10.5 1.5L1.5 9.5" stroke="#fff" stroke-width="2.4"/></svg>
<div class="a t14" style="left:1682px;top:210.9px;font-weight:bold;color:#111">24 km autour de Avoine</div>
<div class="a t14" style="left:1682px;top:231.2px;color:#222">88 communes (2019)</div>
<div class="a t12" style="left:1680px;top:261px;color:#333;text-decoration:underline">Agir sur cette sélection</div>
<div class="a t12" style="left:1680px;top:277.7px;color:#333;text-decoration:underline">Éditer des rapports</div>
<div class="a t12" style="left:1680px;top:294.8px;color:#333;text-decoration:underline">Aide sur les sélections</div>

<div class="a" style="left:1675px;top:328px;width:240px;height:153px;background:#e8e8e8"></div>
<div class="a" style="left:1675px;top:328px;width:240px;height:22px;background:#b966b9"></div>
<div class="a" style="left:1677.5px;top:330px;width:16.5px;height:18px;border:1.5px solid #dcb5dc;font-size:13px;line-height:15px;text-align:center;color:#fff">1</div>
<div class="a" style="left:1823px;top:332px;font-size:12.5px;line-height:12.5px;font-weight:bold;color:#fff">paramètres</div>
<svg class="a" style="left:1894px;top:331px" width="15" height="15" viewBox="0 0 15 15"><path d="M13.8 3.6L11.2 6.2L9 6L8.8 3.8L11.4 1.2C9.6 0.4 7.4 1 6.6 2.8C6.2 3.8 6.3 4.8 6.6 5.6L1.2 11C0.5 11.7 0.5 12.8 1.2 13.5C1.9 14.2 3 14.2 3.7 13.5L9.1 8.1C9.9 8.5 10.9 8.5 11.9 8.1C13.7 7.3 14.5 5.3 13.8 3.6Z" fill="#fff"/></svg>
<svg class="a" style="left:1675px;top:350px" width="100" height="100">
<circle cx="42.5" cy="57.4" r="36.9" fill="#cf88cf"/>
<circle cx="42.5" cy="75.5" r="19.2" fill="#cf88cf" stroke="#fff" stroke-opacity="0.8" stroke-width="1"/>
<text x="42.5" y="16.6" font-family="Liberation Sans" font-size="11.5" fill="#222" text-anchor="middle">30 600</text>
<text x="42.5" y="54.4" font-family="Liberation Sans" font-size="11.5" fill="#222" text-anchor="middle" stroke="#fff" stroke-width="2.5" stroke-opacity="0.85" paint-order="stroke">7 650</text>
</svg>
<div class="a" style="left:1680px;top:452.9px;font-size:12px;line-height:12px;color:#111">France : 66 361 658 habitants</div>
<div class="a" style="left:1680px;top:467.8px;font-size:12px;line-height:12px;color:#f01818">Sélection : 121 853 habitants</div>

</body></html>
